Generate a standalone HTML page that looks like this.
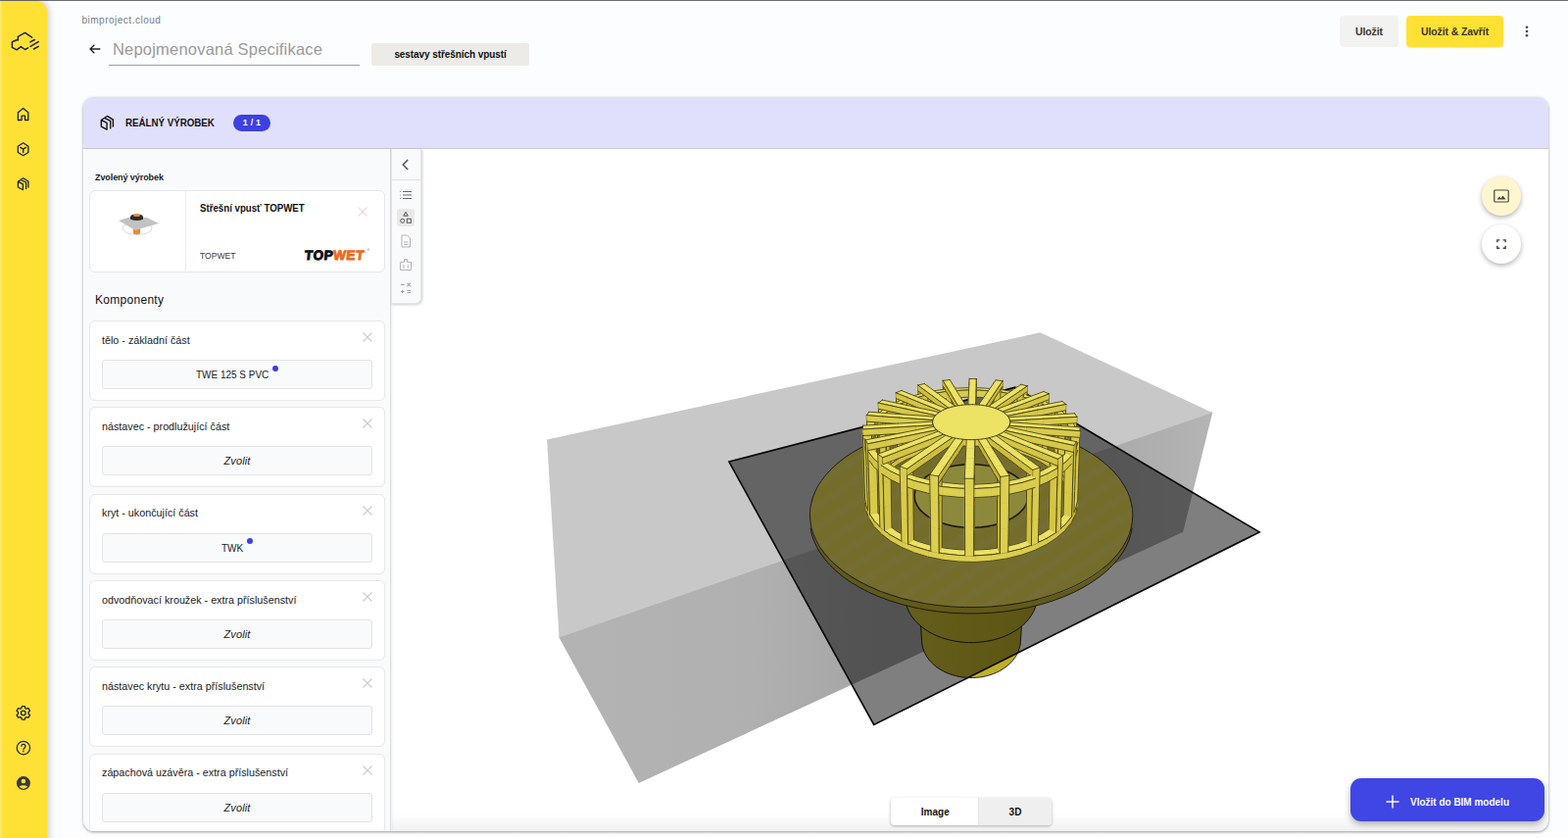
<!DOCTYPE html>
<html lang="cs">
<head>
<meta charset="utf-8">
<title>bimproject.cloud</title>
<style>
*{box-sizing:border-box;margin:0;padding:0}
html,body{width:1600px;height:855px;overflow:hidden}
body{background:#fcfdfe;font-family:"Liberation Sans",sans-serif;color:#1b1b1b;position:relative}
.abs{position:absolute}
.topline{left:0;top:0;width:1600px;height:1px;background:rgba(0,0,0,.57)}
.side{left:0;top:1px;width:48px;height:870px;background:#ffe135;border-radius:0 11px 11px 0;box-shadow:2px 0 7px rgba(0,0,0,.2)}
.side svg{position:absolute;left:15px;width:18px;height:18px;fill:none;stroke:#1d2340;stroke-width:1.5;stroke-linecap:round;stroke-linejoin:round}
.brand{left:83.5px;top:15.3px;font-size:10px;color:#757d88;line-height:12px;white-space:nowrap;letter-spacing:.5px}
.title{left:115px;top:39px;font-size:16.5px;color:#9a9a9a;line-height:22px;white-space:nowrap;letter-spacing:.2px}
.uline{left:111px;top:65.5px;width:256px;height:1px;background:#9c9c9c}
.chip{left:379px;top:44px;width:161px;height:23px;background:#ecebe8;border-radius:3px;font-size:10px;font-weight:bold;text-align:center;line-height:23px;color:#111;white-space:nowrap;letter-spacing:-.08px}
.btn{top:16px;height:32px;border-radius:4px;font-size:10.5px;letter-spacing:-.1px;font-weight:bold;text-align:center;line-height:32px;color:#3a3428;white-space:nowrap}
.card{left:85px;top:99px;width:1495px;height:748.5px;border-radius:11px;background:#fff;box-shadow:0 1px 3px rgba(0,0,0,.4);overflow:hidden}
.chead{left:0;top:0;width:1495px;height:53px;background:#e0e0fd;border-bottom:1px solid #c9c9dc}
.htitle{left:43px;top:19px;font-size:10.7px;font-weight:bold;line-height:14px;color:#111;white-space:nowrap;transform:scaleX(.911);transform-origin:0 50%}
.badge{left:153px;top:17.5px;width:38px;height:17px;border-radius:9px;background:#3d41e0;color:#fff;font-size:9px;font-weight:bold;text-align:center;line-height:17px;letter-spacing:.2px}
.lpanel{left:0;top:53px;width:314px;height:696px;background:#f9fafb;border-right:1px solid #dddde0;box-shadow:1px 0 2px rgba(0,0,0,.08)}
.sm{left:12px;top:22.8px;font-size:9px;font-weight:bold;letter-spacing:-.08px;line-height:12px;color:#1a1a1a;white-space:nowrap}
.pc{background:#fff;border:1px solid #e7e7e9;border-radius:6px;left:6px;width:302px}
.komp{left:12px;top:147px;font-size:12px;line-height:14px;color:#111;white-space:nowrap;letter-spacing:.29px}
.lbl{left:12px;top:11.85px;font-size:10.75px;color:#222;white-space:nowrap;line-height:14px}
.sel{left:12px;top:39px;width:276px;height:30px;border:1px solid #e3e3e4;border-radius:3px;background:#f9fafb;font-size:11px;text-align:center;line-height:28.5px;color:#222;white-space:nowrap}
.sel i{font-style:italic;letter-spacing:.13px}
.sel b{font-weight:normal;display:inline-block;transform:scaleX(.907);transform-origin:0 50%}
.x{left:277.5px;top:11.2px;width:10px;height:10px}
.dot{position:absolute;width:6px;height:6px;border-radius:50%;background:#3b3fe4}
.tool{left:313.5px;top:53px;width:31.500px;height:157.5px;background:#f9fafb;border:1px solid #e4e4e6;border-top:none;border-radius:0 0 6px 0;box-shadow:1px 1px 3px rgba(0,0,0,.2)}
.fab{width:40px;height:40px;border-radius:50%;box-shadow:0 2px 5px rgba(0,0,0,.3)}
.tog{left:909px;top:814px;width:164px;height:28px;border-radius:4px;background:#fff;box-shadow:0 1px 3px rgba(0,0,0,.3);overflow:hidden;font-size:10px;font-weight:bold;color:#111}
.ins{left:1378px;top:794px;width:198px;height:44px;border-radius:11px;background:#4046e3;box-shadow:0 3px 6px rgba(0,0,0,.3);color:#fff;font-size:10.5px;font-weight:bold;line-height:49px;white-space:nowrap}
</style>
</head>
<body>
<div class="abs side"></div>
<svg class="abs" style="left:0;top:0" width="48" height="855" viewBox="0 0 48 855" fill="none" stroke="#1c2140" stroke-width="1.4" stroke-linecap="round" stroke-linejoin="round">
<path d="M32.6 38.2 25.500 33.400 18.400 37.400V41.050M18.400 40.200 12.400 42.800V48.400L17.100 50.800 21.300 47.600 25.500 50.500 28.700 48.900M30.800 42.900l4.500-2.400M31.050 47.400l8.150-4.800M34.500 50l4.700-2.600" stroke-width="1.500"/>
<path d="M18.400 114.700 23.700 110.500 28.800 114.700V122.500H25.500V118.200H22.100V122.500H18.400Z" stroke-width="1.300"/>
<path d="M23.700 145.800 18.300 149.200V155.500L23.700 158.700 28.900 155.500V149.200ZM20.800 150.400 23.700 152.100 26.600 150.400M23.700 152.100V155.700" stroke-width="1.300"/>
<path d="M18.400 185.300 23.400 187.900V193.700L18.400 191.050ZM18.400 185.300 23.700 181.800 28.900 185V191.050M21.200 183.500 26.600 186.050V192.600" stroke-width="1.300"/>
<path d="M21.8 722.6L22.3 720.6L25.3 720.6L25.8 722.6L26.9 723.2L29.0 722.7L30.5 725.2L29.0 726.8L29.0 728.0L30.5 729.6L29.0 732.1L26.9 731.6L25.8 732.2L25.3 734.2L22.3 734.2L21.8 732.2L20.7 731.6L18.6 732.1L17.1 729.6L18.6 728.0L18.6 726.8L17.1 725.2L18.6 722.7L20.7 723.2Z" stroke-width="1.300"/><circle cx="23.800" cy="727.400" r="2.300" stroke-width="1.300"/>
<circle cx="23.900" cy="763.100" r="6.700" stroke-width="1.200"/>
<path d="M21.900 761.300a2 2 0 1 1 3.200 1.600c-.8.500-1.200.9-1.200 1.900" stroke-width="1.200"/><circle cx="23.900" cy="766.700" r=".8" fill="#1c2140" stroke="none"/>
<circle cx="23.900" cy="799.100" r="7" fill="#3b3a36" stroke="none"/><circle cx="23.900" cy="797" r="2.300" fill="#ffe135" stroke="none"/><path d="M19.600 802.600q4.300-2.500 8.600 0-1.700 2.100-4.300 2.100t-4.300-2.100z" fill="#ffe135" stroke="none"/><rect x="0" y="1" width="1.500" height="854" fill="#fff" fill-opacity=".3" stroke="none"/>
</svg>
<div class="abs topline"></div>
<div class="abs brand">bimproject.cloud</div>
<svg class="abs" style="left:89px;top:42px" width="16" height="16" viewBox="0 0 24 24" fill="none" stroke="#222" stroke-width="2"><path d="M20 12H5M11 5.500 4.500 12 11 18.500"/></svg>
<div class="abs title">Nepojmenovaná Specifikace</div>
<div class="abs uline"></div>
<div class="abs chip">sestavy střešních vpustí</div>
<div class="abs btn" style="left:1367px;width:60px;background:#f2f2f0">Uložit</div>
<div class="abs btn" style="left:1435px;width:99px;background:#ffe135;box-shadow:0 1px 1px rgba(0,0,0,.08)">Uložit &amp; Zavřít</div>
<svg class="abs" style="left:1552px;top:24px" width="12" height="16" viewBox="0 0 12 16" fill="#444"><circle cx="6" cy="3.700" r="1.300"/><circle cx="6" cy="8" r="1.300"/><circle cx="6" cy="12.300" r="1.300"/></svg>

<div class="abs card">
  <div class="abs chead">
    <svg class="abs" style="left:0;top:0" width="60" height="52" viewBox="85 99 60 52" fill="none" stroke="#111" stroke-width="1.200" stroke-linejoin="round" stroke-linecap="round"><path transform="translate(109.35 125.3) scale(1.15) translate(-23.65 -187.75)" d="M18.400 185.300 23.400 187.900V193.700L18.400 191.050ZM18.400 185.300 23.700 181.800 28.900 185V191.050M21.200 183.500 26.600 186.050V192.600"/></svg>
    <div class="abs htitle">REÁLNÝ VÝROBEK</div>
    <div class="abs badge">1 / 1</div>
  </div>
  <div class="abs lpanel">
    <div class="abs sm">Zvolený výrobek</div>
    <div class="abs pc" style="top:42px;height:83.6px">
      <div class="abs" style="left:97px;top:0;width:1px;height:81px;background:#ececee"></div>
      <svg class="abs" style="left:28px;top:22px" width="44" height="26" viewBox="0 0 44 26"><ellipse cx="20" cy="16" rx="15" ry="6.500" fill="none" stroke="#d9d9d9" stroke-width="1"/><path d="M16 12h7v9.500q-3.500 1.600-7 0z" fill="#f08a24"/><path d="M1 8 14 4l16 1 12 6-16 4.500-8 2.500z" fill="#c2c2c2"/><path d="M13 4.500q0-3 6.500-3t6.500 3v2.300q-6.500 2.400-13 0z" fill="#2a2a2a"/><ellipse cx="19.500" cy="2.800" rx="3.500" ry="1.300" fill="#f08a24"/></svg>
      <div class="abs" style="left:112px;top:9.8px;font-size:11px;font-weight:bold;line-height:14px;color:#111;white-space:nowrap;transform:scaleX(.88);transform-origin:0 50%">Střešní vpusť TOPWET</div>
      <svg class="abs" style="left:273px;top:16px" width="10" height="10" viewBox="0 0 10 10" stroke="#f5c9c9" stroke-width="1" fill="none"><path d="M.5.500l9 9M9.500.500l-9 9"/></svg>
      <div class="abs" style="left:112px;top:60px;font-size:9.5px;line-height:12px;color:#333a45;white-space:nowrap;transform:scaleX(.9);transform-origin:0 50%">TOPWET</div>
      <div class="abs" style="left:217.6px;top:58px;font-size:13.5px;font-weight:bold;letter-spacing:.55px;line-height:16px;color:#111;white-space:nowrap;-webkit-text-stroke:1px #111;transform:skewX(-5deg);transform-origin:0 100%">TOP<span style="color:#ec6a1e;-webkit-text-stroke:1px #ec6a1e">WET</span><span style="font-size:4px;font-weight:normal;-webkit-text-stroke:0;color:#888;position:relative;top:-9px;left:2px">®</span></div>
    </div>
    <div class="abs komp">Komponenty</div>
    <div class="abs pc" style="top:175px;height:82.2px"><div class="abs lbl">tělo - základní část</div><svg class="abs x" viewBox="0 0 10 10" stroke="#cdcdcd" stroke-width="1.200" fill="none"><path d="M.5.500l9 9M9.500.500l-9 9"/></svg><div class="abs sel"><span style="display:inline-block;position:relative;width:74.4px;height:27px;vertical-align:top;text-align:left;margin-right:9.6px"><b>TWE 125 S PVC</b><span class="dot" style="left:78.0px;top:4.6px"></span></span></div></div>
<div class="abs pc" style="top:263.3px;height:82.2px"><div class="abs lbl">nástavec - prodlužující část</div><svg class="abs x" viewBox="0 0 10 10" stroke="#cdcdcd" stroke-width="1.200" fill="none"><path d="M.5.500l9 9M9.500.500l-9 9"/></svg><div class="abs sel"><i>Zvolit</i></div></div>
<div class="abs pc" style="top:351.6px;height:82.2px"><div class="abs lbl">kryt - ukončující část</div><svg class="abs x" viewBox="0 0 10 10" stroke="#cdcdcd" stroke-width="1.200" fill="none"><path d="M.5.500l9 9M9.500.500l-9 9"/></svg><div class="abs sel"><span style="display:inline-block;position:relative;width:22.2px;height:27px;vertical-align:top;text-align:left;margin-right:9.6px"><b>TWK</b><span class="dot" style="left:25.8px;top:4.6px"></span></span></div></div>
<div class="abs pc" style="top:439.9px;height:82.2px"><div class="abs lbl">odvodňovací kroužek - extra příslušenství</div><svg class="abs x" viewBox="0 0 10 10" stroke="#cdcdcd" stroke-width="1.200" fill="none"><path d="M.5.500l9 9M9.500.500l-9 9"/></svg><div class="abs sel"><i>Zvolit</i></div></div>
<div class="abs pc" style="top:528.2px;height:82.2px"><div class="abs lbl">nástavec krytu - extra příslušenství</div><svg class="abs x" viewBox="0 0 10 10" stroke="#cdcdcd" stroke-width="1.200" fill="none"><path d="M.5.500l9 9M9.500.500l-9 9"/></svg><div class="abs sel"><i>Zvolit</i></div></div>
<div class="abs pc" style="top:616.5px;height:82.2px"><div class="abs lbl">zápachová uzávěra - extra příslušenství</div><svg class="abs x" viewBox="0 0 10 10" stroke="#cdcdcd" stroke-width="1.200" fill="none"><path d="M.5.500l9 9M9.500.500l-9 9"/></svg><div class="abs sel"><i>Zvolit</i></div></div>
  </div>
  <div class="abs" style="left:315px;top:730px;width:1180px;height:19px;background:linear-gradient(to bottom,rgba(0,0,0,0),rgba(0,0,0,.055))"></div>
  <div class="abs tool">
    <div class="abs" style="left:0;top:31.2px;width:30px;height:1px;background:#e2e2e4"></div>
    <svg class="abs" style="left:8.2px;top:10.2px" width="12" height="12" viewBox="0 0 12 12" fill="none" stroke="#555" stroke-width="1.500"><path d="M8.200 1 3.200 6l5 5"/></svg>
    <svg class="abs" style="left:7.2px;top:40.2px" width="14" height="14" viewBox="0 0 14 14" stroke="#666" stroke-width="1.200" fill="none"><path d="M4 3.500h9M4 7h9M4 10.500h9"/><path d="M1 3.500h1M1 7h1M1 10.500h1" stroke="#999"/></svg>
    <div class="abs" style="left:5.2px;top:61.2px;width:18px;height:18px;border-radius:3px;background:#e9e9e7"></div>
    <svg class="abs" style="left:7.2px;top:63.2px" width="14" height="14" viewBox="0 0 14 14" stroke="#555" stroke-width="1" fill="none"><path d="M7 1.200 9.300 5.200H4.700z"/><circle cx="3.700" cy="10.300" r="2"/><rect x="8.300" y="8.300" width="4" height="4"/></svg>
    <svg class="abs" style="left:7.2px;top:87.2px" width="14" height="14" viewBox="0 0 14 14" stroke="#b4b4b4" stroke-width="1" fill="none"><path d="M3 1h5.500L11.500 4v9h-8.500zM5 8h4.500M5 10.500h4.500"/></svg>
    <svg class="abs" style="left:7.2px;top:111.2px" width="14" height="14" viewBox="0 0 14 14" stroke="#b4b4b4" stroke-width="1" fill="none"><path d="M1.500 4.500h4V1.500h3v3h4V12.500h-11zM4 8h2M4 10h2M8.500 8h2M8.500 10h2"/></svg>
    <svg class="abs" style="left:7.2px;top:135.2px" width="14" height="14" viewBox="0 0 14 14" stroke="#9c9c9c" stroke-width="1.100" fill="none"><path d="M2 3.500h3.500M8.500 1.800l3.400 3.400M11.900 1.800 8.500 5.200M2 10.500h3.500M3.750 8.700v3.600M8.500 9.500h3.500M8.500 11.500h3.500"/></svg>
  </div>
</div>
<svg class="abs" style="left:0;top:0" width="1600" height="855" viewBox="0 0 1600 855" stroke-linejoin="round" stroke-linecap="round">
<defs><pattern id="st" width="18" height="18" patternUnits="userSpaceOnUse" patternTransform="rotate(-33)"><rect x="0" y="0" width="18" height="8" fill="rgba(255,255,235,.07)"/><rect x="0" y="1.5" width="18" height="5" fill="rgba(255,255,235,.07)"/></pattern><linearGradient id="gp" gradientUnits="userSpaceOnUse" x1="920" y1="0" x2="1060" y2="0"><stop offset="0" stop-color="#cabc3a"/><stop offset=".35" stop-color="#c4b530"/><stop offset="1" stop-color="#b8a826"/></linearGradient><linearGradient id="gf" x1="0" y1="0" x2="1" y2="0"><stop offset="0" stop-color="#b3b3b3"/><stop offset=".3" stop-color="#b0b0b0"/><stop offset=".5" stop-color="#a4a4a4"/><stop offset=".8" stop-color="#a8a8a8"/><stop offset="1" stop-color="#b4b4b4"/></linearGradient></defs>
<polygon points="570.9,649.3 1236.6,419.9 1237.2,420.9 1207.2,542.8 651.8,798.9 570.5,650.5" fill="url(#gf)"/>
<polygon points="558.1,448.6 1061.5,339.3 1237.2,420.9 570.5,650.5" fill="#c8c8c8"/>
<g transform="translate(1.2 .3)">
<polygon points="939.4,654.0 939.6,656.5 940.1,659.0 940.7,661.5 941.6,664.0 942.7,666.4 944.0,668.8 945.5,671.1 947.2,673.4 949.2,675.5 951.3,677.6 953.6,679.6 956.1,681.4 958.8,683.1 961.6,684.7 964.6,686.1 967.7,687.3 970.9,688.4 974.2,689.3 977.6,690.1 981.0,690.7 984.5,691.0 988.0,691.2 991.6,691.2 995.1,691.0 998.6,690.7 1002.1,690.1 1005.4,689.4 1008.7,688.4 1012.0,687.4 1015.0,686.1 1018.0,684.7 1020.8,683.1 1023.5,681.4 1026.0,679.6 1028.3,677.6 1030.5,675.6 1032.4,673.4 1034.1,671.2 1035.6,668.9 1036.9,666.5 1038.0,664.0 1038.9,661.6 1039.5,659.1 1040.0,656.5 1040.2,654.0 1043.4,606.1 1043.2,608.5 1042.7,611.0 1042.1,613.4 1041.2,615.8 1040.0,618.2 1038.7,620.5 1037.0,622.8 1035.2,625.0 1033.2,627.1 1030.9,629.1 1028.4,631.0 1025.8,632.8 1022.9,634.4 1019.9,636.0 1016.8,637.3 1013.5,638.6 1010.1,639.6 1006.5,640.5 1002.9,641.3 999.2,641.8 995.5,642.2 991.7,642.4 988.0,642.4 984.2,642.2 980.5,641.8 976.8,641.2 973.2,640.5 969.6,639.6 966.2,638.5 962.9,637.3 959.8,635.9 956.7,634.4 953.9,632.7 951.3,630.9 948.8,629.0 946.5,627.0 944.5,624.9 942.6,622.7 941.0,620.5 939.7,618.1 938.5,615.8 937.6,613.4 936.9,610.9 936.5,608.5 936.3,606.0" fill="url(#gp)"/><path d="M936.3,606.0L939.4,654.0L939.6,656.5L940.1,659.0L940.7,661.5L941.6,664.0L942.7,666.4L944.0,668.8L945.5,671.1L947.2,673.4L949.2,675.5L951.3,677.6L953.6,679.6L956.1,681.4L958.8,683.1L961.6,684.7L964.6,686.1L967.7,687.3L970.9,688.4L974.2,689.3L977.6,690.1L981.0,690.7L984.5,691.0L988.0,691.2L991.6,691.2L995.1,691.0L998.6,690.7L1002.1,690.1L1005.4,689.4L1008.7,688.4L1012.0,687.4L1015.0,686.1L1018.0,684.7L1020.8,683.1L1023.5,681.4L1026.0,679.6L1028.3,677.6L1030.5,675.6L1032.4,673.4L1034.1,671.2L1035.6,668.9L1036.9,666.5L1038.0,664.0L1038.9,661.6L1039.5,659.1L1040.0,656.5L1040.2,654.0L1043.4,606.1" fill="none" stroke="#111" stroke-width="0.9"/>
<polygon points="922.7,611.6 923.2,614.7 923.9,617.8 925.0,620.9 926.4,623.9 928.0,626.9 930.0,629.8 932.3,632.6 934.8,635.3 937.6,637.9 940.7,640.4 944.1,642.7 947.6,644.9 951.4,646.9 955.4,648.7 959.6,650.3 964.0,651.7 968.5,652.9 973.1,653.8 977.8,654.5 982.6,655.0 987.4,655.3 992.3,655.3 997.1,655.0 1001.9,654.5 1006.6,653.8 1011.2,652.9 1015.7,651.7 1020.1,650.3 1024.3,648.7 1028.3,646.9 1032.1,644.9 1035.6,642.8 1039.0,640.4 1042.1,638.0 1044.9,635.4 1047.4,632.7 1049.7,629.8 1051.6,626.9 1053.3,624.0 1054.7,620.9 1055.7,617.9 1056.5,614.8 1057.0,611.7 1065.1,515.7 1064.6,518.5 1063.8,521.4 1062.7,524.2 1061.2,526.9 1059.4,529.6 1057.2,532.3 1054.7,534.9 1051.9,537.4 1048.8,539.8 1045.3,542.0 1041.6,544.2 1037.6,546.2 1033.3,548.0 1028.8,549.7 1024.1,551.2 1019.2,552.5 1014.1,553.5 1008.9,554.4 1003.5,555.1 998.1,555.5 992.7,555.8 987.2,555.8 981.8,555.5 976.3,555.1 971.0,554.4 965.8,553.5 960.7,552.4 955.8,551.1 951.1,549.7 946.6,548.0 942.3,546.1 938.3,544.1 934.5,542.0 931.1,539.7 927.9,537.3 925.1,534.8 922.6,532.3 920.5,529.6 918.6,526.9 917.2,524.1 916.0,521.3 915.2,518.5 914.7,515.7" fill="url(#gp)"/><path d="M914.7,515.7L922.7,611.6L923.2,614.7L923.9,617.8L925.0,620.9L926.4,623.9L928.0,626.9L930.0,629.8L932.3,632.6L934.8,635.3L937.6,637.9L940.7,640.4L944.1,642.7L947.6,644.9L951.4,646.9L955.4,648.7L959.6,650.3L964.0,651.7L968.5,652.9L973.1,653.8L977.8,654.5L982.6,655.0L987.4,655.3L992.3,655.3L997.1,655.0L1001.9,654.5L1006.6,653.8L1011.2,652.9L1015.7,651.7L1020.1,650.3L1024.3,648.7L1028.3,646.9L1032.1,644.9L1035.6,642.8L1039.0,640.4L1042.1,638.0L1044.9,635.4L1047.4,632.7L1049.7,629.8L1051.6,626.9L1053.3,624.0L1054.7,620.9L1055.7,617.9L1056.5,614.8L1057.0,611.7L1065.1,515.7" fill="none" stroke="#111" stroke-width="0.9"/>
<polygon points="826.9,543.8 828.9,550.3 831.8,556.9 835.5,563.4 840.1,569.8 845.5,576.1 851.8,582.2 859.0,588.1 867.0,593.7 875.8,599.0 885.5,604.0 895.8,608.5 906.9,612.6 918.6,616.2 930.8,619.3 943.4,621.8 956.5,623.7 969.8,625.0 983.2,625.6 996.7,625.6 1010.2,625.0 1023.5,623.7 1036.5,621.8 1049.2,619.3 1061.4,616.3 1073.0,612.7 1084.1,608.6 1094.5,604.1 1104.1,599.1 1112.9,593.8 1120.9,588.2 1128.1,582.3 1134.4,576.2 1139.8,569.9 1144.4,563.5 1148.1,557.0 1150.9,550.5 1152.9,543.9 1153.9,538.7 1151.9,545.2 1149.1,551.7 1145.4,558.2 1140.8,564.6 1135.3,570.8 1129.0,576.9 1121.8,582.8 1113.7,588.4 1104.9,593.7 1095.2,598.6 1084.7,603.1 1073.6,607.2 1061.9,610.8 1049.6,613.8 1036.8,616.3 1023.7,618.1 1010.3,619.4 996.8,620.0 983.2,620.0 969.6,619.4 956.2,618.1 943.1,616.2 930.4,613.7 918.1,610.7 906.3,607.1 895.2,603.0 884.8,598.5 875.1,593.6 866.2,588.3 858.1,582.7 850.9,576.8 844.6,570.7 839.1,564.5 834.5,558.1 830.8,551.6 828.0,545.1 826.0,538.6" fill="#c2b432"/><path d="M826.0,538.6L826.9,543.8L828.9,550.3L831.8,556.9L835.5,563.4L840.1,569.8L845.5,576.1L851.8,582.2L859.0,588.1L867.0,593.7L875.8,599.0L885.5,604.0L895.8,608.5L906.9,612.6L918.6,616.2L930.8,619.3L943.4,621.8L956.5,623.7L969.8,625.0L983.2,625.6L996.7,625.6L1010.2,625.0L1023.5,623.7L1036.5,621.8L1049.2,619.3L1061.4,616.3L1073.0,612.7L1084.1,608.6L1094.5,604.1L1104.1,599.1L1112.9,593.8L1120.9,588.2L1128.1,582.3L1134.4,576.2L1139.8,569.9L1144.4,563.5L1148.1,557.0L1150.9,550.5L1152.9,543.9L1153.9,538.7" fill="none" stroke="#111" stroke-width="0.8"/>
<polygon points="1111.9,462.0 1105.5,458.2 1098.7,454.6 1091.6,451.2 1084.3,448.1 1076.8,445.3 1069.1,442.7 1061.2,440.4 1053.2,438.3 1045.0,436.5 1036.7,435.0 1028.3,433.7 1019.9,432.7 1011.3,431.9 1002.8,431.4 994.2,431.1 985.6,431.1 977.0,431.4 968.4,431.9 959.9,432.6 951.4,433.7 943.1,434.9 934.8,436.5 926.6,438.3 918.6,440.3 910.7,442.6 903.0,445.2 895.4,448.0 888.1,451.1 881.1,454.5 874.3,458.1 867.9,461.9 861.7,466.0 855.9,470.4 850.5,475.0 845.6,479.8 841.0,484.9 837.0,490.2 833.5,495.6 830.6,501.3 828.2,507.2 826.6,513.2 825.5,519.3 825.2,525.6 825.7,532.0 826.9,538.4 828.9,544.9 831.7,551.3 835.4,557.8 840.0,564.1 845.4,570.3 851.8,576.4 858.9,582.2 867.0,587.8 875.8,593.0 885.4,597.9 895.8,602.4 906.9,606.4 918.5,610.0 930.8,613.0 943.4,615.5 956.5,617.4 969.8,618.6 983.2,619.3 996.7,619.3 1010.2,618.6 1023.5,617.4 1036.5,615.5 1049.2,613.1 1061.4,610.1 1073.1,606.5 1084.1,602.5 1094.5,598.0 1104.1,593.1 1113.0,587.9 1121.0,582.3 1128.2,576.5 1134.5,570.4 1139.9,564.2 1144.5,557.9 1148.1,551.5 1151.0,545.0 1153.0,538.5 1154.2,532.1 1154.6,525.7 1154.3,519.5 1153.3,513.3 1151.6,507.3 1149.3,501.4 1146.3,495.8 1142.8,490.3 1138.8,485.0 1134.3,479.9 1129.3,475.1 1123.9,470.5 1118.1,466.1" fill="#e8d854" stroke="#111" stroke-width=".8"/>
<polygon points="1111.9,462.0 1105.5,458.2 1098.7,454.6 1091.6,451.2 1084.3,448.1 1076.8,445.3 1069.1,442.7 1061.2,440.4 1053.2,438.3 1045.0,436.5 1036.7,435.0 1028.3,433.7 1019.9,432.7 1011.3,431.9 1002.8,431.4 994.2,431.1 985.6,431.1 977.0,431.4 968.4,431.9 959.9,432.6 951.4,433.7 943.1,434.9 934.8,436.5 926.6,438.3 918.6,440.3 910.7,442.6 903.0,445.2 895.4,448.0 888.1,451.1 881.1,454.5 874.3,458.1 867.9,461.9 861.7,466.0 855.9,470.4 850.5,475.0 845.6,479.8 841.0,484.9 837.0,490.2 833.5,495.6 830.6,501.3 828.2,507.2 826.6,513.2 825.5,519.3 825.2,525.6 825.7,532.0 826.9,538.4 828.9,544.9 831.7,551.3 835.4,557.8 840.0,564.1 845.4,570.3 851.8,576.4 858.9,582.2 867.0,587.8 875.8,593.0 885.4,597.9 895.8,602.4 906.9,606.4 918.5,610.0 930.8,613.0 943.4,615.5 956.5,617.4 969.8,618.6 983.2,619.3 996.7,619.3 1010.2,618.6 1023.5,617.4 1036.5,615.5 1049.2,613.1 1061.4,610.1 1073.1,606.5 1084.1,602.5 1094.5,598.0 1104.1,593.1 1113.0,587.9 1121.0,582.3 1128.2,576.5 1134.5,570.4 1139.9,564.2 1144.5,557.9 1148.1,551.5 1151.0,545.0 1153.0,538.5 1154.2,532.1 1154.6,525.7 1154.3,519.5 1153.3,513.3 1151.6,507.3 1149.3,501.4 1146.3,495.8 1142.8,490.3 1138.8,485.0 1134.3,479.9 1129.3,475.1 1123.9,470.5 1118.1,466.1" fill="url(#st)"/>
</g>
<polygon points="743.9,471.1 1035.9,395.2 1285.2,542.9 891.7,739.4" fill="rgba(0,0,0,.5)" stroke="#050505" stroke-width="1.6" stroke-linejoin="miter"/>
<g transform="translate(1.2 .3)">
<polygon points="1037.0,486.9 1033.6,484.5 1029.9,482.4 1025.8,480.4 1021.5,478.7 1016.9,477.2 1012.1,475.9 1007.2,474.9 1002.1,474.2 996.9,473.7 991.7,473.5 986.4,473.5 981.2,473.8 976.0,474.4 971.0,475.2 966.1,476.3 961.3,477.6 956.8,479.2 952.6,481.0 948.6,483.0 945.0,485.3 941.8,487.7 939.0,490.3 936.6,493.1 934.6,496.0 933.2,499.0 932.3,502.1 932.0,505.3 932.2,508.4 932.9,511.6 934.3,514.8 936.2,517.9 938.7,520.9 941.7,523.7 945.3,526.4 949.4,528.8 953.9,531.1 958.9,533.0 964.2,534.7 969.8,536.1 975.7,537.1 981.7,537.7 987.9,538.0 994.0,538.0 1000.2,537.6 1006.1,536.8 1011.9,535.7 1017.5,534.2 1022.7,532.4 1027.5,530.4 1031.9,528.1 1035.8,525.5 1039.2,522.8 1042.1,519.9 1044.4,516.9 1046.1,513.8 1047.2,510.6 1047.8,507.4 1047.8,504.2 1047.3,501.1 1046.2,498.0 1044.6,495.0 1042.5,492.2 1040.0,489.5" fill="#8c893c" stroke="#8c893c" stroke-width=".5"/>
<path d="M1037.0,486.9L1033.6,484.5M1033.6,484.5L1029.9,482.4M1029.9,482.4L1025.8,480.4M1025.8,480.4L1021.5,478.7M1021.5,478.7L1016.9,477.2M1016.9,477.2L1012.1,475.9M1012.1,475.9L1007.2,474.9M1007.2,474.9L1002.1,474.2M1002.1,474.2L996.9,473.7M996.9,473.7L991.7,473.5M991.7,473.5L986.4,473.5M986.4,473.5L981.2,473.8M981.2,473.8L976.0,474.4M976.0,474.4L971.0,475.2M971.0,475.2L966.1,476.3M966.1,476.3L961.3,477.6M961.3,477.6L956.8,479.2M956.8,479.2L952.6,481.0M952.6,481.0L948.6,483.0M948.6,483.0L945.0,485.3M945.0,485.3L941.8,487.7M941.8,487.7L939.0,490.3M939.0,490.3L936.6,493.1M936.6,493.1L934.6,496.0M934.6,496.0L933.2,499.0M933.2,499.0L932.3,502.1M932.3,502.1L932.0,505.3M932.0,505.3L932.2,508.4M932.2,508.4L932.9,511.6M932.9,511.6L934.3,514.8M934.3,514.8L936.2,517.9M936.2,517.9L938.7,520.9M938.7,520.9L941.7,523.7M941.7,523.7L945.3,526.4M945.3,526.4L949.4,528.8M949.4,528.8L953.9,531.1M953.9,531.1L958.9,533.0M958.9,533.0L964.2,534.7M964.2,534.7L969.8,536.1M969.8,536.1L975.7,537.1M975.7,537.1L981.7,537.7M981.7,537.7L987.9,538.0M987.9,538.0L994.0,538.0M994.0,538.0L1000.2,537.6M1000.2,537.6L1006.1,536.8M1006.1,536.8L1011.9,535.7M1011.9,535.7L1017.5,534.2M1017.5,534.2L1022.7,532.4M1022.7,532.4L1027.5,530.4M1027.5,530.4L1031.9,528.1M1031.9,528.1L1035.8,525.5M1035.8,525.5L1039.2,522.8M1039.2,522.8L1042.1,519.9M1042.1,519.9L1044.4,516.9M1044.4,516.9L1046.1,513.8M1046.1,513.8L1047.2,510.6M1047.2,510.6L1047.8,507.4M1047.8,507.4L1047.8,504.2M1047.8,504.2L1047.3,501.1M1047.3,501.1L1046.2,498.0M1046.2,498.0L1044.6,495.0M1044.6,495.0L1042.5,492.2M1042.5,492.2L1040.0,489.5M1040.0,489.5L1037.0,486.9" stroke="#1c1a08" stroke-width="1.6" fill="none"/>
<polygon points="999.1,446.6 986.8,446.4 987.0,449.6 998.5,449.7" fill="#ece264" stroke="#ece264" stroke-width=".5"/>
<path d="M999.1,446.6L986.8,446.4M987.0,449.6L998.5,449.7" stroke="#1c1a08" stroke-width="0.7" fill="none"/>
<polygon points="986.8,446.4 974.6,446.9 975.6,450.1 987.0,449.6" fill="#ece264" stroke="#ece264" stroke-width=".5"/>
<path d="M986.8,446.4L974.6,446.9M975.6,450.1L987.0,449.6" stroke="#1c1a08" stroke-width="0.7" fill="none"/>
<polygon points="1011.2,447.5 999.1,446.6 998.5,449.7 1009.9,450.6" fill="#ece264" stroke="#ece264" stroke-width=".5"/>
<path d="M1011.2,447.5L999.1,446.6M998.5,449.7L1009.9,450.6" stroke="#1c1a08" stroke-width="0.7" fill="none"/>
<polygon points="987.0,454.7 998.4,454.9 998.5,449.7 987.0,449.6" fill="#d9cc4b" stroke="#d9cc4b" stroke-width=".5"/>
<path d="M987.0,454.7L998.4,454.9M998.5,449.7L987.0,449.6" stroke="#1c1a08" stroke-width="0.7" fill="none"/>
<polygon points="974.6,446.9 962.6,448.3 964.3,451.4 975.6,450.1" fill="#ece264" stroke="#ece264" stroke-width=".5"/>
<path d="M974.6,446.9L962.6,448.3M964.3,451.4L975.6,450.1" stroke="#1c1a08" stroke-width="0.7" fill="none"/>
<polygon points="975.7,455.3 987.0,454.7 987.0,449.6 975.6,450.1" fill="#d9cb4b" stroke="#d9cb4b" stroke-width=".5"/>
<path d="M975.7,455.3L987.0,454.7M987.0,449.6L975.6,450.1" stroke="#1c1a08" stroke-width="0.7" fill="none"/>
<polygon points="998.4,454.9 1009.8,455.8 1009.9,450.6 998.5,449.7" fill="#d9cb4b" stroke="#d9cb4b" stroke-width=".5"/>
<path d="M998.4,454.9L1009.8,455.8M1009.9,450.6L998.5,449.7" stroke="#1c1a08" stroke-width="0.7" fill="none"/>
<polygon points="1023.1,449.2 1011.2,447.5 1009.9,450.6 1021.0,452.3" fill="#ece264" stroke="#ece264" stroke-width=".5"/>
<path d="M1023.1,449.2L1011.2,447.5M1009.9,450.6L1021.0,452.3" stroke="#1c1a08" stroke-width="0.7" fill="none"/>
<polygon points="964.5,456.6 975.7,455.3 975.6,450.1 964.3,451.4" fill="#d9cb4b" stroke="#d9cb4b" stroke-width=".5"/>
<path d="M964.5,456.6L975.7,455.3M975.6,450.1L964.3,451.4" stroke="#1c1a08" stroke-width="0.7" fill="none"/>
<polygon points="1009.8,455.8 1020.8,457.5 1021.0,452.3 1009.9,450.6" fill="#d8ca4a" stroke="#d8ca4a" stroke-width=".5"/>
<path d="M1009.8,455.8L1020.8,457.5M1021.0,452.3L1009.9,450.6" stroke="#1c1a08" stroke-width="0.7" fill="none"/>
<polygon points="962.6,448.3 950.9,450.4 953.3,453.3 964.3,451.4" fill="#ece264" stroke="#ece264" stroke-width=".5"/>
<path d="M962.6,448.3L950.9,450.4M953.3,453.3L964.3,451.4" stroke="#1c1a08" stroke-width="0.7" fill="none"/>
<polygon points="953.5,458.5 964.5,456.6 964.3,451.4 953.3,453.3" fill="#d8ca49" stroke="#d8ca49" stroke-width=".5"/>
<path d="M953.5,458.5L964.5,456.6M964.3,451.4L953.3,453.3" stroke="#1c1a08" stroke-width="0.7" fill="none"/>
<polygon points="1034.6,451.7 1023.1,449.2 1021.0,452.3 1031.8,454.6" fill="#ece264" stroke="#ece264" stroke-width=".5"/>
<path d="M1034.6,451.7L1023.1,449.2M1021.0,452.3L1031.8,454.6" stroke="#1c1a08" stroke-width="0.7" fill="none"/>
<polygon points="994.6,449.8 994.7,446.4 994.8,427.3 994.7,430.5" fill="#c3b02d" stroke="#c3b02d" stroke-width=".5"/>
<path d="M994.7,446.4L994.8,427.3M994.7,430.5L994.6,449.8" stroke="#1c1a08" stroke-width="0.7" fill="none"/>
<polygon points="1020.8,457.5 1031.6,459.8 1031.8,454.6 1021.0,452.3" fill="#d7c949" stroke="#d7c949" stroke-width=".5"/>
<path d="M1020.8,457.5L1031.6,459.8M1031.8,454.6L1021.0,452.3" stroke="#1c1a08" stroke-width="0.7" fill="none"/>
<polygon points="950.9,450.4 939.6,453.2 942.8,456.0 953.3,453.3" fill="#ece264" stroke="#ece264" stroke-width=".5"/>
<path d="M950.9,450.4L939.6,453.2M942.8,456.0L953.3,453.3" stroke="#1c1a08" stroke-width="0.7" fill="none"/>
<polygon points="961.7,448.4 963.3,451.7 963.1,432.4 961.5,429.2" fill="#c9b735" stroke="#c9b735" stroke-width=".5"/>
<path d="M963.3,451.7L963.1,432.4M961.5,429.2L961.7,448.4" stroke="#1c1a08" stroke-width="0.7" fill="none"/>
<polygon points="988.0,449.7 994.6,449.8 994.7,430.5 987.9,430.5" fill="#d6c746" stroke="#d6c746" stroke-width=".5"/>
<path d="M994.6,449.8L994.7,430.5M987.9,430.5L988.0,449.7" stroke="#1c1a08" stroke-width="0.7" fill="none"/>
<polygon points="943.0,461.2 953.5,458.5 953.3,453.3 942.8,456.0" fill="#d7c848" stroke="#d7c848" stroke-width=".5"/>
<path d="M943.0,461.2L953.5,458.5M953.3,453.3L942.8,456.0" stroke="#1c1a08" stroke-width="0.7" fill="none"/>
<polygon points="1019.2,452.1 1021.1,448.9 1021.3,429.6 1019.4,432.8" fill="#c9b836" stroke="#c9b836" stroke-width=".5"/>
<path d="M1021.1,448.9L1021.3,429.6M1019.4,432.8L1019.2,452.1" stroke="#1c1a08" stroke-width="0.7" fill="none"/>
<polygon points="1045.7,454.9 1034.6,451.7 1031.8,454.6 1042.1,457.6" fill="#ece264" stroke="#ece264" stroke-width=".5"/>
<path d="M1045.7,454.9L1034.6,451.7M1031.8,454.6L1042.1,457.6" stroke="#1c1a08" stroke-width="0.7" fill="none"/>
<polygon points="1031.6,459.8 1041.9,462.9 1042.1,457.6 1031.8,454.6" fill="#d6c747" stroke="#d6c747" stroke-width=".5"/>
<path d="M1031.6,459.8L1041.9,462.9M1042.1,457.6L1031.8,454.6" stroke="#1c1a08" stroke-width="0.7" fill="none"/>
<polygon points="963.3,451.7 969.8,450.8 969.8,431.5 963.1,432.4" fill="#d5c645" stroke="#d5c645" stroke-width=".5"/>
<path d="M969.8,450.8L969.8,431.5M963.1,432.4L963.3,451.7" stroke="#1c1a08" stroke-width="0.7" fill="none"/>
<polygon points="1012.8,451.2 1019.2,452.1 1019.4,432.8 1012.8,431.9" fill="#d5c645" stroke="#d5c645" stroke-width=".5"/>
<path d="M1019.2,452.1L1019.4,432.8M1012.8,431.9L1012.8,451.2" stroke="#1c1a08" stroke-width="0.7" fill="none"/>
<polygon points="939.6,453.2 928.8,456.7 932.7,459.4 942.8,456.0" fill="#ece264" stroke="#ece264" stroke-width=".5"/>
<path d="M939.6,453.2L928.8,456.7M932.7,459.4L942.8,456.0" stroke="#1c1a08" stroke-width="0.7" fill="none"/>
<polygon points="933.0,464.6 943.0,461.2 942.8,456.0 932.7,459.4" fill="#d5c646" stroke="#d5c646" stroke-width=".5"/>
<path d="M933.0,464.6L943.0,461.2M942.8,456.0L932.7,459.4" stroke="#1c1a08" stroke-width="0.7" fill="none"/>
<polygon points="1056.1,458.9 1045.7,454.9 1042.1,457.6 1051.9,461.3" fill="#ece264" stroke="#ece264" stroke-width=".5"/>
<path d="M1056.1,458.9L1045.7,454.9M1042.1,457.6L1051.9,461.3" stroke="#1c1a08" stroke-width="0.7" fill="none"/>
<polygon points="1041.9,462.9 1051.5,466.6 1051.9,461.3 1042.1,457.6" fill="#d4c545" stroke="#d4c545" stroke-width=".5"/>
<path d="M1041.9,462.9L1051.5,466.6M1051.9,461.3L1042.1,457.6" stroke="#1c1a08" stroke-width="0.7" fill="none"/>
<polygon points="936.7,454.0 940.0,457.0 939.8,437.4 936.3,434.5" fill="#cfbf3d" stroke="#cfbf3d" stroke-width=".5"/>
<path d="M940.0,457.0L939.8,437.4M936.3,434.5L936.7,454.0" stroke="#1c1a08" stroke-width="0.7" fill="none"/>
<polygon points="994.7,430.5 994.8,427.3 994.9,407.2 994.8,410.4" fill="#c3b02d" stroke="#c3b02d" stroke-width=".5"/>
<path d="M994.8,427.3L994.9,407.2M994.8,410.4L994.7,430.5" stroke="#1c1a08" stroke-width="0.7" fill="none"/>
<polygon points="928.8,456.7 918.8,461.0 923.4,463.4 932.7,459.4" fill="#ece264" stroke="#ece264" stroke-width=".5"/>
<path d="M928.8,456.7L918.8,461.0M923.4,463.4L932.7,459.4" stroke="#1c1a08" stroke-width="0.7" fill="none"/>
<polygon points="1042.2,457.9 1045.8,454.9 1046.2,435.4 1042.6,438.3" fill="#cfbf3e" stroke="#cfbf3e" stroke-width=".5"/>
<path d="M1045.8,454.9L1046.2,435.4M1042.6,438.3L1042.2,457.9" stroke="#1c1a08" stroke-width="0.7" fill="none"/>
<polygon points="940.0,457.0 946.0,455.3 945.9,435.7 939.8,437.4" fill="#d2c342" stroke="#d2c342" stroke-width=".5"/>
<path d="M946.0,455.3L945.9,435.7M939.8,437.4L940.0,457.0" stroke="#1c1a08" stroke-width="0.7" fill="none"/>
<polygon points="923.7,468.7 933.0,464.6 932.7,459.4 923.4,463.4" fill="#d3c443" stroke="#d3c443" stroke-width=".5"/>
<path d="M923.7,468.7L933.0,464.6M932.7,459.4L923.4,463.4" stroke="#1c1a08" stroke-width="0.7" fill="none"/>
<polygon points="1036.3,456.0 1042.2,457.9 1042.6,438.3 1036.5,436.5" fill="#d2c342" stroke="#d2c342" stroke-width=".5"/>
<path d="M1042.2,457.9L1042.6,438.3M1036.5,436.5L1036.3,456.0" stroke="#1c1a08" stroke-width="0.7" fill="none"/>
<polygon points="961.5,429.2 963.1,432.4 963.0,412.1 961.3,409.0" fill="#c9b735" stroke="#c9b735" stroke-width=".5"/>
<path d="M963.1,432.4L963.0,412.1M961.3,409.0L961.5,429.2" stroke="#1c1a08" stroke-width="0.7" fill="none"/>
<polygon points="987.9,430.5 994.7,430.5 994.8,410.4 987.9,410.3" fill="#d6c746" stroke="#d6c746" stroke-width=".5"/>
<path d="M994.7,430.5L994.8,410.4M987.9,410.3L987.9,430.5" stroke="#1c1a08" stroke-width="0.7" fill="none"/>
<polygon points="1019.4,432.8 1021.3,429.6 1021.6,409.5 1019.6,412.5" fill="#c9b836" stroke="#c9b836" stroke-width=".5"/>
<path d="M1021.3,429.6L1021.6,409.5M1019.6,412.5L1019.4,432.8" stroke="#1c1a08" stroke-width="0.7" fill="none"/>
<polygon points="1065.8,463.5 1056.1,458.9 1051.9,461.3 1060.8,465.7" fill="#ece264" stroke="#ece264" stroke-width=".5"/>
<path d="M1065.8,463.5L1056.1,458.9M1051.9,461.3L1060.8,465.7" stroke="#1c1a08" stroke-width="0.7" fill="none"/>
<polygon points="1051.5,466.6 1060.4,471.0 1060.8,465.7 1051.9,461.3" fill="#d2c342" stroke="#d2c342" stroke-width=".5"/>
<path d="M1051.5,466.6L1060.4,471.0M1060.8,465.7L1051.9,461.3" stroke="#1c1a08" stroke-width="0.7" fill="none"/>
<polygon points="963.1,432.4 969.8,431.5 969.8,411.3 963.0,412.1" fill="#d5c645" stroke="#d5c645" stroke-width=".5"/>
<path d="M969.8,431.5L969.8,411.3M963.0,412.1L963.1,432.4" stroke="#1c1a08" stroke-width="0.7" fill="none"/>
<polygon points="1012.8,431.9 1019.4,432.8 1019.6,412.5 1012.9,411.6" fill="#d5c645" stroke="#d5c645" stroke-width=".5"/>
<path d="M1019.4,432.8L1019.6,412.5M1012.9,411.6L1012.8,431.9" stroke="#1c1a08" stroke-width="0.7" fill="none"/>
<polygon points="918.8,461.0 909.6,466.0 914.9,468.1 923.4,463.4" fill="#ece264" stroke="#ece264" stroke-width=".5"/>
<path d="M918.8,461.0L909.6,466.0M914.9,468.1L923.4,463.4" stroke="#1c1a08" stroke-width="0.7" fill="none"/>
<polygon points="915.3,473.4 923.7,468.7 923.4,463.4 914.9,468.1" fill="#d1c140" stroke="#d1c140" stroke-width=".5"/>
<path d="M915.3,473.4L923.7,468.7M923.4,463.4L914.9,468.1" stroke="#1c1a08" stroke-width="0.7" fill="none"/>
<polygon points="994.8,410.4 994.9,407.2 995.0,386.3 995.0,389.3" fill="#c3b02d" stroke="#c3b02d" stroke-width=".5"/>
<path d="M994.9,407.2L995.0,386.3M995.0,389.3L994.8,410.4" stroke="#1c1a08" stroke-width="0.7" fill="none"/>
<polygon points="1074.5,468.8 1065.8,463.5 1060.8,465.7 1068.9,470.7" fill="#ece264" stroke="#ece264" stroke-width=".5"/>
<path d="M1074.5,468.8L1065.8,463.5M1060.8,465.7L1068.9,470.7" stroke="#1c1a08" stroke-width="0.7" fill="none"/>
<polygon points="936.3,434.5 939.8,437.4 939.5,416.9 936.0,414.1" fill="#cfbf3d" stroke="#cfbf3d" stroke-width=".5"/>
<path d="M939.8,437.4L939.5,416.9M936.0,414.1L936.3,434.5" stroke="#1c1a08" stroke-width="0.7" fill="none"/>
<polygon points="1060.4,471.0 1068.4,476.1 1068.9,470.7 1060.8,465.7" fill="#d0c03f" stroke="#d0c03f" stroke-width=".5"/>
<path d="M1060.4,471.0L1068.4,476.1M1068.9,470.7L1060.8,465.7" stroke="#1c1a08" stroke-width="0.7" fill="none"/>
<polygon points="999.1,395.5 986.9,395.3 987.0,397.7 998.6,397.9" fill="#ece264" stroke="#ece264" stroke-width=".5"/>
<path d="M999.1,395.5L986.9,395.3M987.0,397.7L998.6,397.9" stroke="#1c1a08" stroke-width="0.7" fill="none"/>
<polygon points="1042.6,438.3 1046.2,435.4 1046.6,414.9 1042.9,417.7" fill="#cfbf3e" stroke="#cfbf3e" stroke-width=".5"/>
<path d="M1046.2,435.4L1046.6,414.9M1042.9,417.7L1042.6,438.3" stroke="#1c1a08" stroke-width="0.7" fill="none"/>
<polygon points="986.9,395.3 974.6,395.8 975.5,398.2 987.0,397.7" fill="#ece264" stroke="#ece264" stroke-width=".5"/>
<path d="M986.9,395.3L974.6,395.8M975.5,398.2L987.0,397.7" stroke="#1c1a08" stroke-width="0.7" fill="none"/>
<polygon points="939.8,437.4 945.9,435.7 945.8,415.3 939.5,416.9" fill="#d2c342" stroke="#d2c342" stroke-width=".5"/>
<path d="M945.9,435.7L945.8,415.3M939.5,416.9L939.8,437.4" stroke="#1c1a08" stroke-width="0.7" fill="none"/>
<polygon points="914.6,463.1 919.6,465.6 919.2,445.6 914.1,443.2" fill="#d4c544" stroke="#d4c544" stroke-width=".5"/>
<path d="M919.6,465.6L919.2,445.6M914.1,443.2L914.6,463.1" stroke="#1c1a08" stroke-width="0.7" fill="none"/>
<polygon points="1011.3,396.3 999.1,395.5 998.6,397.9 1010.1,398.6" fill="#ece264" stroke="#ece264" stroke-width=".5"/>
<path d="M1011.3,396.3L999.1,395.5M998.6,397.9L1010.1,398.6" stroke="#1c1a08" stroke-width="0.7" fill="none"/>
<polygon points="987.1,404.9 998.6,405.1 998.6,397.9 987.0,397.7" fill="#d9cc4b" stroke="#d9cc4b" stroke-width=".5"/>
<path d="M987.1,404.9L998.6,405.1M998.6,397.9L987.0,397.7" stroke="#1c1a08" stroke-width="0.7" fill="none"/>
<polygon points="919.6,465.6 924.7,463.0 924.5,443.1 919.2,445.6" fill="#cebe3c" stroke="#cebe3c" stroke-width=".5"/>
<path d="M924.7,463.0L924.5,443.1M919.2,445.6L919.6,465.6" stroke="#1c1a08" stroke-width="0.7" fill="none"/>
<polygon points="975.6,405.4 987.1,404.9 987.0,397.7 975.5,398.2" fill="#d9cb4b" stroke="#d9cb4b" stroke-width=".5"/>
<path d="M975.6,405.4L987.1,404.9M987.0,397.7L975.5,398.2" stroke="#1c1a08" stroke-width="0.7" fill="none"/>
<polygon points="961.3,409.0 963.0,412.1 962.8,390.9 961.0,388.0" fill="#c9b735" stroke="#c9b735" stroke-width=".5"/>
<path d="M963.0,412.1L962.8,390.9M961.0,388.0L961.3,409.0" stroke="#1c1a08" stroke-width="0.7" fill="none"/>
<polygon points="1036.5,436.5 1042.6,438.3 1042.9,417.7 1036.7,416.0" fill="#d2c342" stroke="#d2c342" stroke-width=".5"/>
<path d="M1042.6,438.3L1042.9,417.7M1036.7,416.0L1036.5,436.5" stroke="#1c1a08" stroke-width="0.7" fill="none"/>
<polygon points="987.9,410.3 994.8,410.4 995.0,389.3 987.8,389.2" fill="#d6c746" stroke="#d6c746" stroke-width=".5"/>
<path d="M994.8,410.4L995.0,389.3M987.8,389.2L987.9,410.3" stroke="#1c1a08" stroke-width="0.7" fill="none"/>
<polygon points="974.6,395.8 962.6,396.9 964.1,399.2 975.5,398.2" fill="#ece264" stroke="#ece264" stroke-width=".5"/>
<path d="M974.6,395.8L962.6,396.9M964.1,399.2L975.5,398.2" stroke="#1c1a08" stroke-width="0.7" fill="none"/>
<polygon points="998.6,405.1 1010.0,405.9 1010.1,398.6 998.6,397.9" fill="#d9cb4b" stroke="#d9cb4b" stroke-width=".5"/>
<path d="M998.6,405.1L1010.0,405.9M1010.1,398.6L998.6,397.9" stroke="#1c1a08" stroke-width="0.7" fill="none"/>
<polygon points="1019.6,412.5 1021.6,409.5 1021.8,388.4 1019.9,391.3" fill="#c9b836" stroke="#c9b836" stroke-width=".5"/>
<path d="M1021.6,409.5L1021.8,388.4M1019.9,391.3L1019.6,412.5" stroke="#1c1a08" stroke-width="0.7" fill="none"/>
<polygon points="1062.3,466.8 1067.5,464.4 1068.0,444.4 1062.7,446.7" fill="#d4c544" stroke="#d4c544" stroke-width=".5"/>
<path d="M1067.5,464.4L1068.0,444.4M1062.7,446.7L1062.3,466.8" stroke="#1c1a08" stroke-width="0.7" fill="none"/>
<polygon points="909.6,466.0 901.4,471.6 907.3,473.3 914.9,468.1" fill="#ece264" stroke="#ece264" stroke-width=".5"/>
<path d="M909.6,466.0L901.4,471.6M907.3,473.3L914.9,468.1" stroke="#1c1a08" stroke-width="0.7" fill="none"/>
<polygon points="1057.3,464.1 1062.3,466.8 1062.7,446.7 1057.6,444.1" fill="#cebd3c" stroke="#cebd3c" stroke-width=".5"/>
<path d="M1062.3,466.8L1062.7,446.7M1057.6,444.1L1057.3,464.1" stroke="#1c1a08" stroke-width="0.7" fill="none"/>
<polygon points="964.3,406.5 975.6,405.4 975.5,398.2 964.1,399.2" fill="#d9cb4b" stroke="#d9cb4b" stroke-width=".5"/>
<path d="M964.3,406.5L975.6,405.4M975.5,398.2L964.1,399.2" stroke="#1c1a08" stroke-width="0.7" fill="none"/>
<polygon points="907.8,478.7 915.3,473.4 914.9,468.1 907.3,473.3" fill="#cebe3d" stroke="#cebe3d" stroke-width=".5"/>
<path d="M907.8,478.7L915.3,473.4M914.9,468.1L907.3,473.3" stroke="#1c1a08" stroke-width="0.7" fill="none"/>
<polygon points="1023.3,397.7 1011.3,396.3 1010.1,398.6 1021.4,400.0" fill="#ece264" stroke="#ece264" stroke-width=".5"/>
<path d="M1023.3,397.7L1011.3,396.3M1010.1,398.6L1021.4,400.0" stroke="#1c1a08" stroke-width="0.7" fill="none"/>
<polygon points="1010.0,405.9 1021.2,407.3 1021.4,400.0 1010.1,398.6" fill="#d8ca4a" stroke="#d8ca4a" stroke-width=".5"/>
<path d="M1010.0,405.9L1021.2,407.3M1021.4,400.0L1010.1,398.6" stroke="#1c1a08" stroke-width="0.7" fill="none"/>
<polygon points="963.0,412.1 969.8,411.3 969.8,390.1 962.8,390.9" fill="#d5c645" stroke="#d5c645" stroke-width=".5"/>
<path d="M969.8,411.3L969.8,390.1M962.8,390.9L963.0,412.1" stroke="#1c1a08" stroke-width="0.7" fill="none"/>
<polygon points="962.6,396.9 950.8,398.7 953.0,400.9 964.1,399.2" fill="#ece264" stroke="#ece264" stroke-width=".5"/>
<path d="M962.6,396.9L950.8,398.7M953.0,400.9L964.1,399.2" stroke="#1c1a08" stroke-width="0.7" fill="none"/>
<polygon points="1012.9,411.6 1019.6,412.5 1019.9,391.3 1012.9,390.4" fill="#d5c645" stroke="#d5c645" stroke-width=".5"/>
<path d="M1019.6,412.5L1019.9,391.3M1012.9,390.4L1012.9,411.6" stroke="#1c1a08" stroke-width="0.7" fill="none"/>
<polygon points="953.2,408.2 964.3,406.5 964.1,399.2 953.0,400.9" fill="#d8ca49" stroke="#d8ca49" stroke-width=".5"/>
<path d="M953.2,408.2L964.3,406.5M964.1,399.2L953.0,400.9" stroke="#1c1a08" stroke-width="0.7" fill="none"/>
<polygon points="994.8,398.4 995.0,392.1 995.0,386.3 994.9,392.4" fill="#c3b02d" stroke="#c3b02d" stroke-width=".5"/>
<path d="M994.8,398.4L995.0,392.1M995.0,386.3L994.9,392.4" stroke="#1c1a08" stroke-width="0.7" fill="none"/>
<polygon points="1034.9,399.9 1023.3,397.7 1021.4,400.0 1032.3,402.1" fill="#ece264" stroke="#ece264" stroke-width=".5"/>
<path d="M1034.9,399.9L1023.3,397.7M1021.4,400.0L1032.3,402.1" stroke="#1c1a08" stroke-width="0.7" fill="none"/>
<polygon points="1082.1,474.7 1074.5,468.8 1068.9,470.7 1075.9,476.3" fill="#ece264" stroke="#ece264" stroke-width=".5"/>
<path d="M1082.1,474.7L1074.5,468.8M1068.9,470.7L1075.9,476.3" stroke="#1c1a08" stroke-width="0.7" fill="none"/>
<polygon points="1068.4,476.1 1075.4,481.7 1075.9,476.3 1068.9,470.7" fill="#cdbd3b" stroke="#cdbd3b" stroke-width=".5"/>
<path d="M1068.4,476.1L1075.4,481.7M1075.9,476.3L1068.9,470.7" stroke="#1c1a08" stroke-width="0.7" fill="none"/>
<polygon points="1021.2,407.3 1032.0,409.4 1032.3,402.1 1021.4,400.0" fill="#d7c949" stroke="#d7c949" stroke-width=".5"/>
<path d="M1021.2,407.3L1032.0,409.4M1032.3,402.1L1021.4,400.0" stroke="#1c1a08" stroke-width="0.7" fill="none"/>
<polygon points="950.8,398.7 939.4,401.1 942.3,403.2 953.0,400.9" fill="#ece264" stroke="#ece264" stroke-width=".5"/>
<path d="M950.8,398.7L939.4,401.1M942.3,403.2L953.0,400.9" stroke="#1c1a08" stroke-width="0.7" fill="none"/>
<polygon points="994.9,392.4 995.0,386.3 987.9,386.2 987.7,392.4" fill="#ece264" stroke="#ece264" stroke-width=".5"/>
<path d="M994.9,392.4L995.0,386.3M987.9,386.2L987.7,392.4M995.0,386.3L987.9,386.2" stroke="#1c1a08" stroke-width="0.7" fill="none"/>
<polygon points="942.6,410.6 953.2,408.2 953.0,400.9 942.3,403.2" fill="#d7c848" stroke="#d7c848" stroke-width=".5"/>
<path d="M942.6,410.6L953.2,408.2M953.0,400.9L942.3,403.2" stroke="#1c1a08" stroke-width="0.7" fill="none"/>
<polygon points="964.6,394.0 961.0,388.0 961.2,393.9 964.8,400.0" fill="#c9b735" stroke="#c9b735" stroke-width=".5"/>
<path d="M964.6,394.0L961.0,388.0M961.2,393.9L964.8,400.0" stroke="#1c1a08" stroke-width="0.7" fill="none"/>
<polygon points="1017.7,400.3 1021.6,394.3 1021.8,388.4 1017.8,394.3" fill="#c9b836" stroke="#c9b836" stroke-width=".5"/>
<path d="M1017.7,400.3L1021.6,394.3M1021.8,388.4L1017.8,394.3" stroke="#1c1a08" stroke-width="0.7" fill="none"/>
<polygon points="936.0,414.1 939.5,416.9 939.2,395.4 935.6,392.7" fill="#cfbf3d" stroke="#cfbf3d" stroke-width=".5"/>
<path d="M939.5,416.9L939.2,395.4M935.6,392.7L936.0,414.1" stroke="#1c1a08" stroke-width="0.7" fill="none"/>
<polygon points="1045.9,402.6 1034.9,399.9 1032.3,402.1 1042.8,404.7" fill="#ece264" stroke="#ece264" stroke-width=".5"/>
<path d="M1045.9,402.6L1034.9,399.9M1032.3,402.1L1042.8,404.7" stroke="#1c1a08" stroke-width="0.7" fill="none"/>
<polygon points="971.7,393.2 968.0,387.2 961.0,388.0 964.6,394.0" fill="#ece264" stroke="#ece264" stroke-width=".5"/>
<path d="M971.7,393.2L968.0,387.2M961.0,388.0L964.6,394.0M968.0,387.2L961.0,388.0" stroke="#1c1a08" stroke-width="0.7" fill="none"/>
<polygon points="901.4,471.6 894.4,477.8 900.9,479.2 907.3,473.3" fill="#ece264" stroke="#ece264" stroke-width=".5"/>
<path d="M901.4,471.6L894.4,477.8M900.9,479.2L907.3,473.3" stroke="#1c1a08" stroke-width="0.7" fill="none"/>
<polygon points="901.4,484.6 907.8,478.7 907.3,473.3 900.9,479.2" fill="#ccbb39" stroke="#ccbb39" stroke-width=".5"/>
<path d="M901.4,484.6L907.8,478.7M907.3,473.3L900.9,479.2" stroke="#1c1a08" stroke-width="0.7" fill="none"/>
<polygon points="1032.0,409.4 1042.4,412.0 1042.8,404.7 1032.3,402.1" fill="#d6c747" stroke="#d6c747" stroke-width=".5"/>
<path d="M1032.0,409.4L1042.4,412.0M1042.8,404.7L1032.3,402.1" stroke="#1c1a08" stroke-width="0.7" fill="none"/>
<polygon points="1017.8,394.3 1021.8,388.4 1014.9,387.5 1010.8,393.5" fill="#ece264" stroke="#ece264" stroke-width=".5"/>
<path d="M1017.8,394.3L1021.8,388.4M1014.9,387.5L1010.8,393.5M1021.8,388.4L1014.9,387.5" stroke="#1c1a08" stroke-width="0.7" fill="none"/>
<polygon points="1042.9,417.7 1046.6,414.9 1047.0,393.5 1043.2,396.1" fill="#cfbf3e" stroke="#cfbf3e" stroke-width=".5"/>
<path d="M1046.6,414.9L1047.0,393.5M1043.2,396.1L1042.9,417.7" stroke="#1c1a08" stroke-width="0.7" fill="none"/>
<polygon points="939.5,416.9 945.8,415.3 945.6,393.9 939.2,395.4" fill="#d2c342" stroke="#d2c342" stroke-width=".5"/>
<path d="M945.8,415.3L945.6,393.9M939.2,395.4L939.5,416.9" stroke="#1c1a08" stroke-width="0.7" fill="none"/>
<polygon points="914.1,443.2 919.2,445.6 918.8,424.6 913.6,422.3" fill="#d4c544" stroke="#d4c544" stroke-width=".5"/>
<path d="M919.2,445.6L918.8,424.6M913.6,422.3L914.1,443.2" stroke="#1c1a08" stroke-width="0.7" fill="none"/>
<polygon points="1036.7,416.0 1042.9,417.7 1043.2,396.1 1036.9,394.5" fill="#d2c342" stroke="#d2c342" stroke-width=".5"/>
<path d="M1042.9,417.7L1043.2,396.1M1036.9,394.5L1036.7,416.0" stroke="#1c1a08" stroke-width="0.7" fill="none"/>
<polygon points="939.4,401.1 928.6,404.2 932.1,406.1 942.3,403.2" fill="#ece264" stroke="#ece264" stroke-width=".5"/>
<path d="M939.4,401.1L928.6,404.2M932.1,406.1L942.3,403.2" stroke="#1c1a08" stroke-width="0.7" fill="none"/>
<polygon points="919.2,445.6 924.5,443.1 924.2,422.2 918.8,424.6" fill="#cebe3c" stroke="#cebe3c" stroke-width=".5"/>
<path d="M924.5,443.1L924.2,422.2M918.8,424.6L919.2,445.6" stroke="#1c1a08" stroke-width="0.7" fill="none"/>
<polygon points="932.5,413.5 942.6,410.6 942.3,403.2 932.1,406.1" fill="#d5c646" stroke="#d5c646" stroke-width=".5"/>
<path d="M932.5,413.5L942.6,410.6M942.3,403.2L932.1,406.1" stroke="#1c1a08" stroke-width="0.7" fill="none"/>
<polygon points="1062.7,446.7 1068.0,444.4 1068.6,423.5 1063.1,425.7" fill="#d4c544" stroke="#d4c544" stroke-width=".5"/>
<path d="M1068.0,444.4L1068.6,423.5M1063.1,425.7L1062.7,446.7" stroke="#1c1a08" stroke-width="0.7" fill="none"/>
<polygon points="1057.6,444.1 1062.7,446.7 1063.1,425.7 1057.9,423.2" fill="#cebd3c" stroke="#cebd3c" stroke-width=".5"/>
<path d="M1062.7,446.7L1063.1,425.7M1057.9,423.2L1057.6,444.1" stroke="#1c1a08" stroke-width="0.7" fill="none"/>
<polygon points="1075.4,481.7 1081.2,487.8 1081.7,482.3 1075.9,476.3" fill="#cbba38" stroke="#cbba38" stroke-width=".5"/>
<path d="M1075.4,481.7L1081.2,487.8M1081.7,482.3L1075.9,476.3" stroke="#1c1a08" stroke-width="0.7" fill="none"/>
<polygon points="1088.4,481.2 1082.1,474.7 1075.9,476.3 1081.7,482.3" fill="#ece264" stroke="#ece264" stroke-width=".5"/>
<path d="M1088.4,481.2L1082.1,474.7M1075.9,476.3L1081.7,482.3" stroke="#1c1a08" stroke-width="0.7" fill="none"/>
<polygon points="1056.4,406.0 1045.9,402.6 1042.8,404.7 1052.6,407.9" fill="#ece264" stroke="#ece264" stroke-width=".5"/>
<path d="M1056.4,406.0L1045.9,402.6M1042.8,404.7L1052.6,407.9" stroke="#1c1a08" stroke-width="0.7" fill="none"/>
<polygon points="1042.4,412.0 1052.1,415.3 1052.6,407.9 1042.8,404.7" fill="#d4c545" stroke="#d4c545" stroke-width=".5"/>
<path d="M1042.4,412.0L1052.1,415.3M1052.6,407.9L1042.8,404.7" stroke="#1c1a08" stroke-width="0.7" fill="none"/>
<polygon points="943.0,398.2 935.6,392.7 935.9,398.7 943.3,404.2" fill="#cfbf3d" stroke="#cfbf3d" stroke-width=".5"/>
<path d="M943.0,398.2L935.6,392.7M935.9,398.7L943.3,404.2" stroke="#1c1a08" stroke-width="0.7" fill="none"/>
<polygon points="903.4,477.1 907.2,473.8 906.9,453.3 902.9,456.5" fill="#c8b735" stroke="#c8b735" stroke-width=".5"/>
<path d="M907.2,473.8L906.9,453.3M902.9,456.5L903.4,477.1" stroke="#1c1a08" stroke-width="0.7" fill="none"/>
<polygon points="896.9,475.4 903.4,477.1 902.9,456.5 896.3,454.9" fill="#d7c948" stroke="#d7c948" stroke-width=".5"/>
<path d="M903.4,477.1L902.9,456.5M896.3,454.9L896.9,475.4" stroke="#1c1a08" stroke-width="0.7" fill="none"/>
<polygon points="949.5,396.6 942.0,391.2 935.6,392.7 943.0,398.2" fill="#ece264" stroke="#ece264" stroke-width=".5"/>
<path d="M949.5,396.6L942.0,391.2M935.6,392.7L943.0,398.2M942.0,391.2L935.6,392.7" stroke="#1c1a08" stroke-width="0.7" fill="none"/>
<polygon points="1038.9,404.9 1046.7,399.5 1047.0,393.5 1039.2,398.9" fill="#cfbf3e" stroke="#cfbf3e" stroke-width=".5"/>
<path d="M1038.9,404.9L1046.7,399.5M1047.0,393.5L1039.2,398.9" stroke="#1c1a08" stroke-width="0.7" fill="none"/>
<polygon points="928.6,404.2 918.5,407.8 922.7,409.6 932.1,406.1" fill="#ece264" stroke="#ece264" stroke-width=".5"/>
<path d="M928.6,404.2L918.5,407.8M922.7,409.6L932.1,406.1" stroke="#1c1a08" stroke-width="0.7" fill="none"/>
<polygon points="923.1,417.1 932.5,413.5 932.1,406.1 922.7,409.6" fill="#d3c443" stroke="#d3c443" stroke-width=".5"/>
<path d="M923.1,417.1L932.5,413.5M932.1,406.1L922.7,409.6" stroke="#1c1a08" stroke-width="0.7" fill="none"/>
<polygon points="1039.2,398.9 1047.0,393.5 1040.7,391.9 1032.8,397.2" fill="#ece264" stroke="#ece264" stroke-width=".5"/>
<path d="M1039.2,398.9L1047.0,393.5M1040.7,391.9L1032.8,397.2M1047.0,393.5L1040.7,391.9" stroke="#1c1a08" stroke-width="0.7" fill="none"/>
<polygon points="994.7,404.9 994.8,398.4 994.9,392.4 994.7,398.9" fill="#c3b02d" stroke="#c3b02d" stroke-width=".5"/>
<path d="M994.7,404.9L994.8,398.4M994.9,392.4L994.7,398.9" stroke="#1c1a08" stroke-width="0.7" fill="none"/>
<polygon points="1074.3,475.2 1078.0,478.7 1078.4,458.0 1074.7,454.7" fill="#c8b734" stroke="#c8b734" stroke-width=".5"/>
<path d="M1078.0,478.7L1078.4,458.0M1074.7,454.7L1074.3,475.2" stroke="#1c1a08" stroke-width="0.7" fill="none"/>
<polygon points="896.3,491.0 901.4,484.6 900.9,479.2 895.7,485.5" fill="#c9b836" stroke="#c9b836" stroke-width=".5"/>
<path d="M896.3,491.0L901.4,484.6M900.9,479.2L895.7,485.5" stroke="#1c1a08" stroke-width="0.7" fill="none"/>
<polygon points="894.4,477.8 888.8,484.6 895.7,485.5 900.9,479.2" fill="#ece264" stroke="#ece264" stroke-width=".5"/>
<path d="M894.4,477.8L888.8,484.6M895.7,485.5L900.9,479.2" stroke="#1c1a08" stroke-width="0.7" fill="none"/>
<polygon points="1078.0,478.7 1084.6,477.1 1085.3,456.4 1078.4,458.0" fill="#d7c949" stroke="#d7c949" stroke-width=".5"/>
<path d="M1084.6,477.1L1085.3,456.4M1078.4,458.0L1078.0,478.7" stroke="#1c1a08" stroke-width="0.7" fill="none"/>
<polygon points="1066.1,409.9 1056.4,406.0 1052.6,407.9 1061.7,411.6" fill="#ece264" stroke="#ece264" stroke-width=".5"/>
<path d="M1066.1,409.9L1056.4,406.0M1052.6,407.9L1061.7,411.6" stroke="#1c1a08" stroke-width="0.7" fill="none"/>
<polygon points="994.7,398.9 994.9,392.4 987.7,392.4 987.3,398.8" fill="#ece264" stroke="#ece264" stroke-width=".5"/>
<path d="M994.7,398.9L994.9,392.4M987.7,392.4L987.3,398.8" stroke="#1c1a08" stroke-width="0.7" fill="none"/>
<polygon points="968.4,400.2 964.6,394.0 964.8,400.0 968.5,406.3" fill="#c9b735" stroke="#c9b735" stroke-width=".5"/>
<path d="M968.4,400.2L964.6,394.0M964.8,400.0L968.5,406.3" stroke="#1c1a08" stroke-width="0.7" fill="none"/>
<polygon points="1052.1,415.3 1061.1,419.1 1061.7,411.6 1052.6,407.9" fill="#d2c342" stroke="#d2c342" stroke-width=".5"/>
<path d="M1052.1,415.3L1061.1,419.1M1061.7,411.6L1052.6,407.9" stroke="#1c1a08" stroke-width="0.7" fill="none"/>
<polygon points="1013.5,406.6 1017.7,400.3 1017.8,394.3 1013.6,400.6" fill="#c9b836" stroke="#c9b836" stroke-width=".5"/>
<path d="M1013.5,406.6L1017.7,400.3M1017.8,394.3L1013.6,400.6" stroke="#1c1a08" stroke-width="0.7" fill="none"/>
<polygon points="913.6,422.3 918.8,424.6 918.5,402.6 913.1,400.4" fill="#d4c544" stroke="#d4c544" stroke-width=".5"/>
<path d="M918.8,424.6L918.5,402.6M913.1,400.4L913.6,422.3" stroke="#1c1a08" stroke-width="0.7" fill="none"/>
<polygon points="975.5,399.4 971.7,393.2 964.6,394.0 968.4,400.2" fill="#ece264" stroke="#ece264" stroke-width=".5"/>
<path d="M975.5,399.4L971.7,393.2M964.6,394.0L968.4,400.2" stroke="#1c1a08" stroke-width="0.7" fill="none"/>
<polygon points="1081.2,487.8 1085.6,494.4 1086.2,488.9 1081.7,482.3" fill="#c8b634" stroke="#c8b634" stroke-width=".5"/>
<path d="M1081.2,487.8L1085.6,494.4M1086.2,488.9L1081.7,482.3" stroke="#1c1a08" stroke-width="0.7" fill="none"/>
<polygon points="918.8,424.6 924.2,422.2 923.9,400.3 918.5,402.6" fill="#cebe3c" stroke="#cebe3c" stroke-width=".5"/>
<path d="M924.2,422.2L923.9,400.3M918.5,402.6L918.8,424.6" stroke="#1c1a08" stroke-width="0.7" fill="none"/>
<polygon points="1013.6,400.6 1017.8,394.3 1010.8,393.5 1006.5,399.6" fill="#ece264" stroke="#ece264" stroke-width=".5"/>
<path d="M1013.6,400.6L1017.8,394.3M1010.8,393.5L1006.5,399.6" stroke="#1c1a08" stroke-width="0.7" fill="none"/>
<polygon points="1093.4,488.2 1088.4,481.2 1081.7,482.3 1086.2,488.9" fill="#ece264" stroke="#ece264" stroke-width=".5"/>
<path d="M1093.4,488.2L1088.4,481.2M1081.7,482.3L1086.2,488.9" stroke="#1c1a08" stroke-width="0.7" fill="none"/>
<polygon points="1063.1,425.7 1068.6,423.5 1069.1,401.5 1063.6,403.6" fill="#d4c544" stroke="#d4c544" stroke-width=".5"/>
<path d="M1068.6,423.5L1069.1,401.5M1063.6,403.6L1063.1,425.7" stroke="#1c1a08" stroke-width="0.7" fill="none"/>
<polygon points="918.5,407.8 909.3,412.1 914.0,413.6 922.7,409.6" fill="#ece264" stroke="#ece264" stroke-width=".5"/>
<path d="M918.5,407.8L909.3,412.1M914.0,413.6L922.7,409.6" stroke="#1c1a08" stroke-width="0.7" fill="none"/>
<polygon points="1057.9,423.2 1063.1,425.7 1063.6,403.6 1058.2,401.3" fill="#cebd3c" stroke="#cebd3c" stroke-width=".5"/>
<path d="M1063.1,425.7L1063.6,403.6M1058.2,401.3L1057.9,423.2" stroke="#1c1a08" stroke-width="0.7" fill="none"/>
<polygon points="914.6,421.1 923.1,417.1 922.7,409.6 914.0,413.6" fill="#d1c140" stroke="#d1c140" stroke-width=".5"/>
<path d="M914.6,421.1L923.1,417.1M922.7,409.6L914.0,413.6" stroke="#1c1a08" stroke-width="0.7" fill="none"/>
<polygon points="892.6,497.8 896.3,491.0 895.7,485.5 892.0,492.2" fill="#c6b432" stroke="#c6b432" stroke-width=".5"/>
<path d="M892.6,497.8L896.3,491.0M895.7,485.5L892.0,492.2" stroke="#1c1a08" stroke-width="0.7" fill="none"/>
<polygon points="1074.8,414.5 1066.1,409.9 1061.7,411.6 1069.8,415.9" fill="#ece264" stroke="#ece264" stroke-width=".5"/>
<path d="M1074.8,414.5L1066.1,409.9M1061.7,411.6L1069.8,415.9" stroke="#1c1a08" stroke-width="0.7" fill="none"/>
<polygon points="1061.1,419.1 1069.2,423.5 1069.8,415.9 1061.7,411.6" fill="#d0c03f" stroke="#d0c03f" stroke-width=".5"/>
<path d="M1061.1,419.1L1069.2,423.5M1069.8,415.9L1061.7,411.6" stroke="#1c1a08" stroke-width="0.7" fill="none"/>
<polygon points="950.7,403.9 943.0,398.2 943.3,404.2 950.9,410.0" fill="#cfbf3d" stroke="#cfbf3d" stroke-width=".5"/>
<path d="M950.7,403.9L943.0,398.2M943.3,404.2L950.9,410.0" stroke="#1c1a08" stroke-width="0.7" fill="none"/>
<polygon points="888.8,484.6 884.6,491.8 892.0,492.2 895.7,485.5" fill="#ece264" stroke="#ece264" stroke-width=".5"/>
<path d="M888.8,484.6L884.6,491.8M892.0,492.2L895.7,485.5" stroke="#1c1a08" stroke-width="0.7" fill="none"/>
<polygon points="902.9,456.5 906.9,453.3 906.5,431.8 902.5,434.9" fill="#c8b735" stroke="#c8b735" stroke-width=".5"/>
<path d="M906.9,453.3L906.5,431.8M902.5,434.9L902.9,456.5" stroke="#1c1a08" stroke-width="0.7" fill="none"/>
<polygon points="896.3,454.9 902.9,456.5 902.5,434.9 895.7,433.4" fill="#d7c948" stroke="#d7c948" stroke-width=".5"/>
<path d="M902.9,456.5L902.5,434.9M895.7,433.4L896.3,454.9" stroke="#1c1a08" stroke-width="0.7" fill="none"/>
<polygon points="924.1,404.9 913.1,400.4 913.5,406.5 924.5,411.0" fill="#d4c544" stroke="#d4c544" stroke-width=".5"/>
<path d="M924.1,404.9L913.1,400.4M913.5,406.5L924.5,411.0" stroke="#1c1a08" stroke-width="0.7" fill="none"/>
<polygon points="1030.9,410.6 1038.9,404.9 1039.2,398.9 1031.1,404.4" fill="#cfbf3e" stroke="#cfbf3e" stroke-width=".5"/>
<path d="M1030.9,410.6L1038.9,404.9M1039.2,398.9L1031.1,404.4" stroke="#1c1a08" stroke-width="0.7" fill="none"/>
<polygon points="957.2,402.2 949.5,396.6 943.0,398.2 950.7,403.9" fill="#ece264" stroke="#ece264" stroke-width=".5"/>
<path d="M957.2,402.2L949.5,396.6M943.0,398.2L950.7,403.9" stroke="#1c1a08" stroke-width="0.7" fill="none"/>
<polygon points="929.6,402.6 918.6,398.1 913.1,400.4 924.1,404.9" fill="#ece264" stroke="#ece264" stroke-width=".5"/>
<path d="M929.6,402.6L918.6,398.1M913.1,400.4L924.1,404.9M918.6,398.1L913.1,400.4" stroke="#1c1a08" stroke-width="0.7" fill="none"/>
<polygon points="1031.1,404.4 1039.2,398.9 1032.8,397.2 1024.7,402.7" fill="#ece264" stroke="#ece264" stroke-width=".5"/>
<path d="M1031.1,404.4L1039.2,398.9M1032.8,397.2L1024.7,402.7" stroke="#1c1a08" stroke-width="0.7" fill="none"/>
<polygon points="1074.7,454.7 1078.4,458.0 1078.9,436.3 1075.1,433.1" fill="#c8b734" stroke="#c8b734" stroke-width=".5"/>
<path d="M1078.4,458.0L1078.9,436.3M1075.1,433.1L1074.7,454.7" stroke="#1c1a08" stroke-width="0.7" fill="none"/>
<polygon points="1057.3,412.0 1068.7,407.6 1069.1,401.5 1057.8,405.9" fill="#d4c544" stroke="#d4c544" stroke-width=".5"/>
<path d="M1057.3,412.0L1068.7,407.6M1069.1,401.5L1057.8,405.9" stroke="#1c1a08" stroke-width="0.7" fill="none"/>
<polygon points="1078.4,458.0 1085.3,456.4 1085.9,434.8 1078.9,436.3" fill="#d7c949" stroke="#d7c949" stroke-width=".5"/>
<path d="M1085.3,456.4L1085.9,434.8M1078.9,436.3L1078.4,458.0" stroke="#1c1a08" stroke-width="0.7" fill="none"/>
<polygon points="1057.8,405.9 1069.1,401.5 1063.8,399.2 1052.4,403.4" fill="#ece264" stroke="#ece264" stroke-width=".5"/>
<path d="M1057.8,405.9L1069.1,401.5M1063.8,399.2L1052.4,403.4M1069.1,401.5L1063.8,399.2" stroke="#1c1a08" stroke-width="0.7" fill="none"/>
<polygon points="909.3,412.1 901.1,416.9 906.4,418.2 914.0,413.6" fill="#ece264" stroke="#ece264" stroke-width=".5"/>
<path d="M909.3,412.1L901.1,416.9M906.4,418.2L914.0,413.6" stroke="#1c1a08" stroke-width="0.7" fill="none"/>
<polygon points="994.6,411.7 994.7,404.9 994.7,398.9 994.6,405.6" fill="#c3b02d" stroke="#c3b02d" stroke-width=".5"/>
<path d="M994.6,411.7L994.7,404.9M994.7,398.9L994.6,405.6" stroke="#1c1a08" stroke-width="0.7" fill="none"/>
<polygon points="907.0,425.8 914.6,421.1 914.0,413.6 906.4,418.2" fill="#cebe3d" stroke="#cebe3d" stroke-width=".5"/>
<path d="M907.0,425.8L914.6,421.1M914.0,413.6L906.4,418.2" stroke="#1c1a08" stroke-width="0.7" fill="none"/>
<polygon points="1085.6,494.4 1088.6,501.4 1089.2,495.8 1086.2,488.9" fill="#c5b330" stroke="#c5b330" stroke-width=".5"/>
<path d="M1085.6,494.4L1088.6,501.4M1089.2,495.8L1086.2,488.9" stroke="#1c1a08" stroke-width="0.7" fill="none"/>
<polygon points="1096.7,495.7 1093.4,488.2 1086.2,488.9 1089.2,495.8" fill="#ece264" stroke="#ece264" stroke-width=".5"/>
<path d="M1096.7,495.7L1093.4,488.2M1086.2,488.9L1089.2,495.8" stroke="#1c1a08" stroke-width="0.7" fill="none"/>
<polygon points="972.3,406.8 968.4,400.2 968.5,406.3 972.4,412.9" fill="#c9b735" stroke="#c9b735" stroke-width=".5"/>
<path d="M972.3,406.8L968.4,400.2M968.5,406.3L972.4,412.9" stroke="#1c1a08" stroke-width="0.7" fill="none"/>
<polygon points="994.6,405.6 994.7,398.9 987.3,398.8 987.0,405.5" fill="#ece264" stroke="#ece264" stroke-width=".5"/>
<path d="M994.6,405.6L994.7,398.9M987.3,398.8L987.0,405.5" stroke="#1c1a08" stroke-width="0.7" fill="none"/>
<polygon points="1009.2,413.2 1013.5,406.6 1013.6,400.6 1009.3,407.0" fill="#c9b836" stroke="#c9b836" stroke-width=".5"/>
<path d="M1009.2,413.2L1013.5,406.6M1013.6,400.6L1009.3,407.0" stroke="#1c1a08" stroke-width="0.7" fill="none"/>
<polygon points="1069.2,423.5 1076.3,428.3 1077.0,420.7 1069.8,415.9" fill="#cdbd3b" stroke="#cdbd3b" stroke-width=".5"/>
<path d="M1069.2,423.5L1076.3,428.3M1077.0,420.7L1069.8,415.9" stroke="#1c1a08" stroke-width="0.7" fill="none"/>
<polygon points="892.9,491.1 895.0,487.1 894.6,466.0 892.4,469.8" fill="#c2b02d" stroke="#c2b02d" stroke-width=".5"/>
<path d="M895.0,487.1L894.6,466.0M892.4,469.8L892.9,491.1" stroke="#1c1a08" stroke-width="0.7" fill="none"/>
<polygon points="1082.5,419.5 1074.8,414.5 1069.8,415.9 1077.0,420.7" fill="#ece264" stroke="#ece264" stroke-width=".5"/>
<path d="M1082.5,419.5L1074.8,414.5M1069.8,415.9L1077.0,420.7" stroke="#1c1a08" stroke-width="0.7" fill="none"/>
<polygon points="979.6,405.9 975.5,399.4 968.4,400.2 972.3,406.8" fill="#ece264" stroke="#ece264" stroke-width=".5"/>
<path d="M979.6,405.9L975.5,399.4M968.4,400.2L972.3,406.8" stroke="#1c1a08" stroke-width="0.7" fill="none"/>
<polygon points="1009.3,407.0 1013.6,400.6 1006.5,399.6 1002.0,406.1" fill="#ece264" stroke="#ece264" stroke-width=".5"/>
<path d="M1009.3,407.0L1013.6,400.6M1006.5,399.6L1002.0,406.1" stroke="#1c1a08" stroke-width="0.7" fill="none"/>
<polygon points="890.4,504.9 892.6,497.8 892.0,492.2 889.8,499.3" fill="#c3b12e" stroke="#c3b12e" stroke-width=".5"/>
<path d="M890.4,504.9L892.6,497.8M892.0,492.2L889.8,499.3" stroke="#1c1a08" stroke-width="0.7" fill="none"/>
<polygon points="885.2,490.4 892.9,491.1 892.4,469.8 884.6,469.1" fill="#d9cb4b" stroke="#d9cb4b" stroke-width=".5"/>
<path d="M892.9,491.1L892.4,469.8M884.6,469.1L885.2,490.4" stroke="#1c1a08" stroke-width="0.7" fill="none"/>
<polygon points="1085.8,488.9 1087.7,492.8 1088.2,471.5 1086.2,467.6" fill="#c2af2c" stroke="#c2af2c" stroke-width=".5"/>
<path d="M1087.7,492.8L1088.2,471.5M1086.2,467.6L1085.8,488.9" stroke="#1c1a08" stroke-width="0.7" fill="none"/>
<polygon points="884.6,491.8 882.1,499.5 889.8,499.3 892.0,492.2" fill="#ece264" stroke="#ece264" stroke-width=".5"/>
<path d="M884.6,491.8L882.1,499.5M889.8,499.3L892.0,492.2" stroke="#1c1a08" stroke-width="0.7" fill="none"/>
<polygon points="935.4,409.6 924.1,404.9 924.5,411.0 935.7,415.8" fill="#d4c544" stroke="#d4c544" stroke-width=".5"/>
<path d="M935.4,409.6L924.1,404.9M924.5,411.0L935.7,415.8" stroke="#1c1a08" stroke-width="0.7" fill="none"/>
<polygon points="902.5,434.9 906.5,431.8 906.1,409.3 902.0,412.3" fill="#c8b735" stroke="#c8b735" stroke-width=".5"/>
<path d="M906.5,431.8L906.1,409.3M902.0,412.3L902.5,434.9" stroke="#1c1a08" stroke-width="0.7" fill="none"/>
<polygon points="940.9,407.1 929.6,402.6 924.1,404.9 935.4,409.6" fill="#ece264" stroke="#ece264" stroke-width=".5"/>
<path d="M940.9,407.1L929.6,402.6M924.1,404.9L935.4,409.6" stroke="#1c1a08" stroke-width="0.7" fill="none"/>
<polygon points="1087.7,492.8 1095.5,492.3 1096.2,471.0 1088.2,471.5" fill="#d9cb4b" stroke="#d9cb4b" stroke-width=".5"/>
<path d="M1095.5,492.3L1096.2,471.0M1088.2,471.5L1087.7,492.8" stroke="#1c1a08" stroke-width="0.7" fill="none"/>
<polygon points="900.5,430.9 907.0,425.8 906.4,418.2 899.9,423.2" fill="#ccbb39" stroke="#ccbb39" stroke-width=".5"/>
<path d="M900.5,430.9L907.0,425.8M906.4,418.2L899.9,423.2" stroke="#1c1a08" stroke-width="0.7" fill="none"/>
<polygon points="895.7,433.4 902.5,434.9 902.0,412.3 895.0,410.8" fill="#d7c948" stroke="#d7c948" stroke-width=".5"/>
<path d="M902.5,434.9L902.0,412.3M895.0,410.8L895.7,433.4" stroke="#1c1a08" stroke-width="0.7" fill="none"/>
<polygon points="958.6,409.8 950.7,403.9 950.9,410.0 958.8,416.0" fill="#cfbf3d" stroke="#cfbf3d" stroke-width=".5"/>
<path d="M958.6,409.8L950.7,403.9M950.9,410.0L958.8,416.0" stroke="#1c1a08" stroke-width="0.7" fill="none"/>
<polygon points="901.1,416.9 894.1,422.2 899.9,423.2 906.4,418.2" fill="#ece264" stroke="#ece264" stroke-width=".5"/>
<path d="M901.1,416.9L894.1,422.2M899.9,423.2L906.4,418.2" stroke="#1c1a08" stroke-width="0.7" fill="none"/>
<polygon points="1045.7,416.6 1057.3,412.0 1057.8,405.9 1046.1,410.4" fill="#d4c544" stroke="#d4c544" stroke-width=".5"/>
<path d="M1045.7,416.6L1057.3,412.0M1057.8,405.9L1046.1,410.4" stroke="#1c1a08" stroke-width="0.7" fill="none"/>
<polygon points="1022.5,416.4 1030.9,410.6 1031.1,404.4 1022.7,410.2" fill="#cfbf3e" stroke="#cfbf3e" stroke-width=".5"/>
<path d="M1022.5,416.4L1030.9,410.6M1031.1,404.4L1022.7,410.2" stroke="#1c1a08" stroke-width="0.7" fill="none"/>
<polygon points="1046.1,410.4 1057.8,405.9 1052.4,403.4 1040.7,407.9" fill="#ece264" stroke="#ece264" stroke-width=".5"/>
<path d="M1046.1,410.4L1057.8,405.9M1052.4,403.4L1040.7,407.9" stroke="#1c1a08" stroke-width="0.7" fill="none"/>
<polygon points="965.3,408.0 957.2,402.2 950.7,403.9 958.6,409.8" fill="#ece264" stroke="#ece264" stroke-width=".5"/>
<path d="M965.3,408.0L957.2,402.2M950.7,403.9L958.6,409.8" stroke="#1c1a08" stroke-width="0.7" fill="none"/>
<polygon points="1075.1,433.1 1078.9,436.3 1079.5,413.6 1075.5,410.6" fill="#c8b734" stroke="#c8b734" stroke-width=".5"/>
<path d="M1078.9,436.3L1079.5,413.6M1075.5,410.6L1075.1,433.1" stroke="#1c1a08" stroke-width="0.7" fill="none"/>
<polygon points="1088.6,501.4 1089.9,508.7 1090.6,503.0 1089.2,495.8" fill="#c2af2c" stroke="#c2af2c" stroke-width=".5"/>
<path d="M1088.6,501.4L1089.9,508.7M1090.6,503.0L1089.2,495.8" stroke="#1c1a08" stroke-width="0.7" fill="none"/>
<polygon points="1022.7,410.2 1031.1,404.4 1024.7,402.7 1016.2,408.4" fill="#ece264" stroke="#ece264" stroke-width=".5"/>
<path d="M1022.7,410.2L1031.1,404.4M1024.7,402.7L1016.2,408.4" stroke="#1c1a08" stroke-width="0.7" fill="none"/>
<polygon points="1078.9,436.3 1085.9,434.8 1086.6,412.2 1079.5,413.6" fill="#d7c949" stroke="#d7c949" stroke-width=".5"/>
<path d="M1085.9,434.8L1086.6,412.2M1079.5,413.6L1078.9,436.3" stroke="#1c1a08" stroke-width="0.7" fill="none"/>
<polygon points="1098.4,503.5 1096.7,495.7 1089.2,495.8 1090.6,503.0" fill="#ece264" stroke="#ece264" stroke-width=".5"/>
<path d="M1098.4,503.5L1096.7,495.7M1089.2,495.8L1090.6,503.0" stroke="#1c1a08" stroke-width="0.7" fill="none"/>
<polygon points="1076.3,428.3 1082.1,433.7 1082.9,425.9 1077.0,420.7" fill="#cbba38" stroke="#cbba38" stroke-width=".5"/>
<path d="M1076.3,428.3L1082.1,433.7M1082.9,425.9L1077.0,420.7" stroke="#1c1a08" stroke-width="0.7" fill="none"/>
<polygon points="1088.8,425.1 1082.5,419.5 1077.0,420.7 1082.9,425.9" fill="#ece264" stroke="#ece264" stroke-width=".5"/>
<path d="M1088.8,425.1L1082.5,419.5M1077.0,420.7L1082.9,425.9" stroke="#1c1a08" stroke-width="0.7" fill="none"/>
<polygon points="994.4,418.9 994.6,411.7 994.6,405.6 994.4,412.6" fill="#c3b02d" stroke="#c3b02d" stroke-width=".5"/>
<path d="M994.4,418.9L994.6,411.7M994.6,405.6L994.4,412.6" stroke="#1c1a08" stroke-width="0.7" fill="none"/>
<polygon points="913.3,410.9 899.2,407.8 895.0,410.8 909.2,413.9" fill="#ece264" stroke="#ece264" stroke-width=".5"/>
<path d="M913.3,410.9L899.2,407.8M895.0,410.8L909.2,413.9M899.2,407.8L895.0,410.8" stroke="#1c1a08" stroke-width="0.7" fill="none"/>
<polygon points="909.2,413.9 895.0,410.8 895.6,417.0 909.7,420.1" fill="#d7c948" stroke="#d7c948" stroke-width=".5"/>
<path d="M909.2,413.9L895.0,410.8M895.6,417.0L909.7,420.1" stroke="#1c1a08" stroke-width="0.7" fill="none"/>
<polygon points="889.9,512.3 890.4,504.9 889.8,499.3 889.2,506.6" fill="#c0ad2a" stroke="#c0ad2a" stroke-width=".5"/>
<path d="M889.9,512.3L890.4,504.9M889.8,499.3L889.2,506.6" stroke="#1c1a08" stroke-width="0.7" fill="none"/>
<polygon points="976.3,413.6 972.3,406.8 972.4,412.9 976.4,419.9" fill="#c9b735" stroke="#c9b735" stroke-width=".5"/>
<path d="M976.3,413.6L972.3,406.8M972.4,412.9L976.4,419.9" stroke="#1c1a08" stroke-width="0.7" fill="none"/>
<polygon points="1004.6,420.1 1009.2,413.2 1009.3,407.0 1004.7,413.8" fill="#c9b836" stroke="#c9b836" stroke-width=".5"/>
<path d="M1004.6,420.1L1009.2,413.2M1009.3,407.0L1004.7,413.8" stroke="#1c1a08" stroke-width="0.7" fill="none"/>
<polygon points="892.4,469.8 894.6,466.0 894.2,443.8 891.9,447.5" fill="#c2b02d" stroke="#c2b02d" stroke-width=".5"/>
<path d="M894.6,466.0L894.2,443.8M891.9,447.5L892.4,469.8" stroke="#1c1a08" stroke-width="0.7" fill="none"/>
<polygon points="994.4,412.6 994.6,405.6 987.0,405.5 986.7,412.6" fill="#ece264" stroke="#ece264" stroke-width=".5"/>
<path d="M994.4,412.6L994.6,405.6M987.0,405.5L986.7,412.6" stroke="#1c1a08" stroke-width="0.7" fill="none"/>
<polygon points="1072.1,415.1 1086.6,412.2 1082.6,409.2 1068.2,412.0" fill="#ece264" stroke="#ece264" stroke-width=".5"/>
<path d="M1072.1,415.1L1086.6,412.2M1082.6,409.2L1068.2,412.0M1086.6,412.2L1082.6,409.2" stroke="#1c1a08" stroke-width="0.7" fill="none"/>
<polygon points="1071.5,421.4 1086.0,418.4 1086.6,412.2 1072.1,415.1" fill="#d7c949" stroke="#d7c949" stroke-width=".5"/>
<path d="M1071.5,421.4L1086.0,418.4M1086.6,412.2L1072.1,415.1" stroke="#1c1a08" stroke-width="0.7" fill="none"/>
<polygon points="882.1,499.5 881.4,507.3 889.2,506.6 889.8,499.3" fill="#ece264" stroke="#ece264" stroke-width=".5"/>
<path d="M882.1,499.5L881.4,507.3M889.2,506.6L889.8,499.3" stroke="#1c1a08" stroke-width="0.7" fill="none"/>
<polygon points="895.4,436.4 900.5,430.9 899.9,423.2 894.6,428.7" fill="#c9b836" stroke="#c9b836" stroke-width=".5"/>
<path d="M895.4,436.4L900.5,430.9M899.9,423.2L894.6,428.7" stroke="#1c1a08" stroke-width="0.7" fill="none"/>
<polygon points="983.8,412.7 979.6,405.9 972.3,406.8 976.3,413.6" fill="#ece264" stroke="#ece264" stroke-width=".5"/>
<path d="M983.8,412.7L979.6,405.9M972.3,406.8L976.3,413.6" stroke="#1c1a08" stroke-width="0.7" fill="none"/>
<polygon points="947.1,414.3 935.4,409.6 935.7,415.8 947.3,420.6" fill="#d4c544" stroke="#d4c544" stroke-width=".5"/>
<path d="M947.1,414.3L935.4,409.6M935.7,415.8L947.3,420.6" stroke="#1c1a08" stroke-width="0.7" fill="none"/>
<polygon points="894.1,422.2 888.4,428.0 894.6,428.7 899.9,423.2" fill="#ece264" stroke="#ece264" stroke-width=".5"/>
<path d="M894.1,422.2L888.4,428.0M894.6,428.7L899.9,423.2" stroke="#1c1a08" stroke-width="0.7" fill="none"/>
<polygon points="1004.7,413.8 1009.3,407.0 1002.0,406.1 997.3,412.8" fill="#ece264" stroke="#ece264" stroke-width=".5"/>
<path d="M1004.7,413.8L1009.3,407.0M1002.0,406.1L997.3,412.8" stroke="#1c1a08" stroke-width="0.7" fill="none"/>
<polygon points="884.6,469.1 892.4,469.8 891.9,447.5 883.9,446.8" fill="#d9cb4b" stroke="#d9cb4b" stroke-width=".5"/>
<path d="M892.4,469.8L891.9,447.5M883.9,446.8L884.6,469.1" stroke="#1c1a08" stroke-width="0.7" fill="none"/>
<polygon points="952.6,411.8 940.9,407.1 935.4,409.6 947.1,414.3" fill="#ece264" stroke="#ece264" stroke-width=".5"/>
<path d="M952.6,411.8L940.9,407.1M935.4,409.6L947.1,414.3" stroke="#1c1a08" stroke-width="0.7" fill="none"/>
<polygon points="1086.2,467.6 1088.2,471.5 1088.8,449.1 1086.7,445.4" fill="#c2af2c" stroke="#c2af2c" stroke-width=".5"/>
<path d="M1088.2,471.5L1088.8,449.1M1086.7,445.4L1086.2,467.6" stroke="#1c1a08" stroke-width="0.7" fill="none"/>
<polygon points="1033.7,421.2 1045.7,416.6 1046.1,410.4 1034.0,415.0" fill="#d4c544" stroke="#d4c544" stroke-width=".5"/>
<path d="M1033.7,421.2L1045.7,416.6M1046.1,410.4L1034.0,415.0" stroke="#1c1a08" stroke-width="0.7" fill="none"/>
<polygon points="1034.0,415.0 1046.1,410.4 1040.7,407.9 1028.7,412.4" fill="#ece264" stroke="#ece264" stroke-width=".5"/>
<path d="M1034.0,415.0L1046.1,410.4M1040.7,407.9L1028.7,412.4" stroke="#1c1a08" stroke-width="0.7" fill="none"/>
<polygon points="1089.9,508.7 1089.6,516.1 1090.2,510.4 1090.6,503.0" fill="#bfac28" stroke="#bfac28" stroke-width=".5"/>
<path d="M1089.9,508.7L1089.6,516.1M1090.2,510.4L1090.6,503.0" stroke="#1c1a08" stroke-width="0.7" fill="none"/>
<polygon points="1088.2,471.5 1096.2,471.0 1096.9,448.6 1088.8,449.1" fill="#d9cb4b" stroke="#d9cb4b" stroke-width=".5"/>
<path d="M1096.2,471.0L1096.9,448.6M1088.8,449.1L1088.2,471.5" stroke="#1c1a08" stroke-width="0.7" fill="none"/>
<polygon points="966.9,415.9 958.6,409.8 958.8,416.0 967.0,422.2" fill="#cfbf3d" stroke="#cfbf3d" stroke-width=".5"/>
<path d="M966.9,415.9L958.6,409.8M958.8,416.0L967.0,422.2" stroke="#1c1a08" stroke-width="0.7" fill="none"/>
<polygon points="1013.9,422.5 1022.5,416.4 1022.7,410.2 1014.0,416.2" fill="#cfbf3e" stroke="#cfbf3e" stroke-width=".5"/>
<path d="M1013.9,422.5L1022.5,416.4M1022.7,410.2L1014.0,416.2" stroke="#1c1a08" stroke-width="0.7" fill="none"/>
<polygon points="973.6,414.1 965.3,408.0 958.6,409.8 966.9,415.9" fill="#ece264" stroke="#ece264" stroke-width=".5"/>
<path d="M973.6,414.1L965.3,408.0M958.6,409.8L966.9,415.9" stroke="#1c1a08" stroke-width="0.7" fill="none"/>
<polygon points="1082.1,433.7 1086.6,439.4 1087.4,431.6 1082.9,425.9" fill="#c8b634" stroke="#c8b634" stroke-width=".5"/>
<path d="M1082.1,433.7L1086.6,439.4M1087.4,431.6L1082.9,425.9" stroke="#1c1a08" stroke-width="0.7" fill="none"/>
<polygon points="1098.1,511.4 1098.4,503.5 1090.6,503.0 1090.2,510.4" fill="#ece264" stroke="#ece264" stroke-width=".5"/>
<path d="M1098.1,511.4L1098.4,503.5M1090.6,503.0L1090.2,510.4" stroke="#1c1a08" stroke-width="0.7" fill="none"/>
<polygon points="927.7,414.0 913.3,410.9 909.2,413.9 923.7,417.0" fill="#ece264" stroke="#ece264" stroke-width=".5"/>
<path d="M927.7,414.0L913.3,410.9M909.2,413.9L923.7,417.0" stroke="#1c1a08" stroke-width="0.7" fill="none"/>
<polygon points="1014.0,416.2 1022.7,410.2 1016.2,408.4 1007.4,414.4" fill="#ece264" stroke="#ece264" stroke-width=".5"/>
<path d="M1014.0,416.2L1022.7,410.2M1016.2,408.4L1007.4,414.4" stroke="#1c1a08" stroke-width="0.7" fill="none"/>
<polygon points="923.7,417.0 909.2,413.9 909.7,420.1 924.1,423.3" fill="#d7c948" stroke="#d7c948" stroke-width=".5"/>
<path d="M923.7,417.0L909.2,413.9M909.7,420.1L924.1,423.3" stroke="#1c1a08" stroke-width="0.7" fill="none"/>
<polygon points="1093.8,431.1 1088.8,425.1 1082.9,425.9 1087.4,431.6" fill="#ece264" stroke="#ece264" stroke-width=".5"/>
<path d="M1093.8,431.1L1088.8,425.1M1082.9,425.9L1087.4,431.6" stroke="#1c1a08" stroke-width="0.7" fill="none"/>
<polygon points="1057.3,418.0 1072.1,415.1 1068.2,412.0 1053.5,414.9" fill="#ece264" stroke="#ece264" stroke-width=".5"/>
<path d="M1057.3,418.0L1072.1,415.1M1068.2,412.0L1053.5,414.9" stroke="#1c1a08" stroke-width="0.7" fill="none"/>
<polygon points="1056.8,424.3 1071.5,421.4 1072.1,415.1 1057.3,418.0" fill="#d7c949" stroke="#d7c949" stroke-width=".5"/>
<path d="M1056.8,424.3L1071.5,421.4M1072.1,415.1L1057.3,418.0" stroke="#1c1a08" stroke-width="0.7" fill="none"/>
<polygon points="881.5,513.1 882.7,521.2 882.6,515.4 881.4,507.3" fill="#cbbb39" stroke="#cbbb39" stroke-width=".5"/>
<path d="M881.5,513.1L882.7,521.2M882.6,515.4L881.4,507.3" stroke="#1c1a08" stroke-width="0.7" fill="none"/>
<polygon points="889.7,506.7 889.7,502.4 889.3,480.5 889.2,484.6" fill="#bca824" stroke="#bca824" stroke-width=".5"/>
<path d="M889.7,502.4L889.3,480.5M889.2,484.6L889.7,506.7" stroke="#1c1a08" stroke-width="0.7" fill="none"/>
<polygon points="891.6,442.3 895.4,436.4 894.6,428.7 890.8,434.5" fill="#c6b432" stroke="#c6b432" stroke-width=".5"/>
<path d="M891.6,442.3L895.4,436.4M894.6,428.7L890.8,434.5" stroke="#1c1a08" stroke-width="0.7" fill="none"/>
<polygon points="881.4,507.3 882.6,515.4 890.5,514.1 889.2,506.6" fill="#ece264" stroke="#ece264" stroke-width=".5"/>
<path d="M881.4,507.3L882.6,515.4M890.5,514.1L889.2,506.6" stroke="#1c1a08" stroke-width="0.7" fill="none"/>
<polygon points="888.4,428.0 884.2,434.2 890.8,434.5 894.6,428.7" fill="#ece264" stroke="#ece264" stroke-width=".5"/>
<path d="M888.4,428.0L884.2,434.2M890.8,434.5L894.6,428.7" stroke="#1c1a08" stroke-width="0.7" fill="none"/>
<polygon points="959.1,419.3 947.1,414.3 947.3,420.6 959.3,425.6" fill="#d4c544" stroke="#d4c544" stroke-width=".5"/>
<path d="M959.1,419.3L947.1,414.3M947.3,420.6L959.3,425.6" stroke="#1c1a08" stroke-width="0.7" fill="none"/>
<polygon points="891.9,447.5 894.2,443.8 893.7,420.5 891.4,424.0" fill="#c2b02d" stroke="#c2b02d" stroke-width=".5"/>
<path d="M894.2,443.8L893.7,420.5M891.4,424.0L891.9,447.5" stroke="#1c1a08" stroke-width="0.7" fill="none"/>
<polygon points="964.6,416.7 952.6,411.8 947.1,414.3 959.1,419.3" fill="#ece264" stroke="#ece264" stroke-width=".5"/>
<path d="M964.6,416.7L952.6,411.8M947.1,414.3L959.1,419.3" stroke="#1c1a08" stroke-width="0.7" fill="none"/>
<polygon points="881.3,507.2 889.7,506.7 889.2,484.6 880.6,485.2" fill="#d9cb4b" stroke="#d9cb4b" stroke-width=".5"/>
<path d="M889.7,506.7L889.2,484.6M880.6,485.2L881.3,507.2" stroke="#1c1a08" stroke-width="0.7" fill="none"/>
<polygon points="1021.4,426.1 1033.7,421.2 1034.0,415.0 1021.6,419.7" fill="#d4c544" stroke="#d4c544" stroke-width=".5"/>
<path d="M1021.4,426.1L1033.7,421.2M1034.0,415.0L1021.6,419.7" stroke="#1c1a08" stroke-width="0.7" fill="none"/>
<polygon points="1021.6,419.7 1034.0,415.0 1028.7,412.4 1016.3,417.1" fill="#ece264" stroke="#ece264" stroke-width=".5"/>
<path d="M1021.6,419.7L1034.0,415.0M1028.7,412.4L1016.3,417.1" stroke="#1c1a08" stroke-width="0.7" fill="none"/>
<polygon points="942.4,417.1 927.7,414.0 923.7,417.0 938.5,420.3" fill="#ece264" stroke="#ece264" stroke-width=".5"/>
<path d="M942.4,417.1L927.7,414.0M923.7,417.0L938.5,420.3" stroke="#1c1a08" stroke-width="0.7" fill="none"/>
<polygon points="938.5,420.3 923.7,417.0 924.1,423.3 938.8,426.6" fill="#d7c948" stroke="#d7c948" stroke-width=".5"/>
<path d="M938.5,420.3L923.7,417.0M924.1,423.3L938.8,426.6" stroke="#1c1a08" stroke-width="0.7" fill="none"/>
<polygon points="883.9,446.8 891.9,447.5 891.4,424.0 883.1,423.4" fill="#d9cb4b" stroke="#d9cb4b" stroke-width=".5"/>
<path d="M891.9,447.5L891.4,424.0M883.1,423.4L883.9,446.8" stroke="#1c1a08" stroke-width="0.7" fill="none"/>
<polygon points="1086.7,445.4 1088.8,449.1 1089.3,425.5 1087.2,422.0" fill="#c2af2c" stroke="#c2af2c" stroke-width=".5"/>
<path d="M1088.8,449.1L1089.3,425.5M1087.2,422.0L1086.7,445.4" stroke="#1c1a08" stroke-width="0.7" fill="none"/>
<polygon points="1042.2,421.0 1057.3,418.0 1053.5,414.9 1038.5,417.8" fill="#ece264" stroke="#ece264" stroke-width=".5"/>
<path d="M1042.2,421.0L1057.3,418.0M1053.5,414.9L1038.5,417.8" stroke="#1c1a08" stroke-width="0.7" fill="none"/>
<polygon points="1095.8,525.3 1098.0,517.2 1098.1,511.4 1096.0,519.5" fill="#ccbc3a" stroke="#ccbc3a" stroke-width=".5"/>
<path d="M1095.8,525.3L1098.0,517.2M1098.1,511.4L1096.0,519.5" stroke="#1c1a08" stroke-width="0.7" fill="none"/>
<polygon points="1041.8,427.4 1056.8,424.3 1057.3,418.0 1042.2,421.0" fill="#d7c949" stroke="#d7c949" stroke-width=".5"/>
<path d="M1041.8,427.4L1056.8,424.3M1057.3,418.0L1042.2,421.0" stroke="#1c1a08" stroke-width="0.7" fill="none"/>
<polygon points="1090.1,508.6 1098.5,509.3 1099.2,487.1 1090.6,486.4" fill="#d9cb4b" stroke="#d9cb4b" stroke-width=".5"/>
<path d="M1098.5,509.3L1099.2,487.1M1090.6,486.4L1090.1,508.6" stroke="#1c1a08" stroke-width="0.7" fill="none"/>
<polygon points="1086.6,439.4 1089.7,445.5 1090.5,437.6 1087.4,431.6" fill="#c5b330" stroke="#c5b330" stroke-width=".5"/>
<path d="M1086.6,439.4L1089.7,445.5M1090.5,437.6L1087.4,431.6" stroke="#1c1a08" stroke-width="0.7" fill="none"/>
<polygon points="1088.8,449.1 1096.9,448.6 1097.7,425.1 1089.3,425.5" fill="#d9cb4b" stroke="#d9cb4b" stroke-width=".5"/>
<path d="M1096.9,448.6L1097.7,425.1M1089.3,425.5L1088.8,449.1" stroke="#1c1a08" stroke-width="0.7" fill="none"/>
<polygon points="1096.0,519.5 1098.1,511.4 1090.2,510.4 1088.1,517.8" fill="#ece264" stroke="#ece264" stroke-width=".5"/>
<path d="M1096.0,519.5L1098.1,511.4M1090.2,510.4L1088.1,517.8" stroke="#1c1a08" stroke-width="0.7" fill="none"/>
<polygon points="1097.2,437.5 1093.8,431.1 1087.4,431.6 1090.5,437.6" fill="#ece264" stroke="#ece264" stroke-width=".5"/>
<path d="M1097.2,437.5L1093.8,431.1M1087.4,431.6L1090.5,437.6" stroke="#1c1a08" stroke-width="0.7" fill="none"/>
<polygon points="902.1,421.2 885.5,419.9 883.1,423.4 899.9,424.7" fill="#ece264" stroke="#ece264" stroke-width=".5"/>
<path d="M902.1,421.2L885.5,419.9M883.1,423.4L899.9,424.7M885.5,419.9L883.1,423.4" stroke="#1c1a08" stroke-width="0.7" fill="none"/>
<polygon points="899.9,424.7 883.1,423.4 883.8,429.8 900.4,431.1" fill="#d9cb4b" stroke="#d9cb4b" stroke-width=".5"/>
<path d="M899.9,424.7L883.1,423.4M883.8,429.8L900.4,431.1" stroke="#1c1a08" stroke-width="0.7" fill="none"/>
<polygon points="882.7,521.2 885.9,529.3 885.8,523.4 882.6,515.4" fill="#cebe3d" stroke="#cebe3d" stroke-width=".5"/>
<path d="M882.7,521.2L885.9,529.3M885.8,523.4L882.6,515.4" stroke="#1c1a08" stroke-width="0.7" fill="none"/>
<polygon points="957.4,420.4 942.4,417.1 938.5,420.3 953.6,423.5" fill="#ece264" stroke="#ece264" stroke-width=".5"/>
<path d="M957.4,420.4L942.4,417.1M938.5,420.3L953.6,423.5" stroke="#1c1a08" stroke-width="0.7" fill="none"/>
<polygon points="953.6,423.5 938.5,420.3 938.8,426.6 953.8,429.9" fill="#d7c948" stroke="#d7c948" stroke-width=".5"/>
<path d="M953.6,423.5L938.5,420.3M938.8,426.6L953.8,429.9" stroke="#1c1a08" stroke-width="0.7" fill="none"/>
<polygon points="889.4,448.5 891.6,442.3 890.8,434.5 888.5,440.6" fill="#c3b12e" stroke="#c3b12e" stroke-width=".5"/>
<path d="M889.4,448.5L891.6,442.3M890.8,434.5L888.5,440.6" stroke="#1c1a08" stroke-width="0.7" fill="none"/>
<polygon points="1080.7,426.0 1097.7,425.1 1095.5,421.5 1078.7,422.5" fill="#ece264" stroke="#ece264" stroke-width=".5"/>
<path d="M1080.7,426.0L1097.7,425.1M1095.5,421.5L1078.7,422.5M1097.7,425.1L1095.5,421.5" stroke="#1c1a08" stroke-width="0.7" fill="none"/>
<polygon points="1080.1,432.5 1097.0,431.5 1097.7,425.1 1080.7,426.0" fill="#d9cb4b" stroke="#d9cb4b" stroke-width=".5"/>
<path d="M1080.1,432.5L1097.0,431.5M1097.7,425.1L1080.7,426.0" stroke="#1c1a08" stroke-width="0.7" fill="none"/>
<polygon points="1026.8,424.1 1042.2,421.0 1038.5,417.8 1023.3,420.8" fill="#ece264" stroke="#ece264" stroke-width=".5"/>
<path d="M1026.8,424.1L1042.2,421.0M1038.5,417.8L1023.3,420.8" stroke="#1c1a08" stroke-width="0.7" fill="none"/>
<polygon points="1026.6,430.5 1041.8,427.4 1042.2,421.0 1026.8,424.1" fill="#d7c949" stroke="#d7c949" stroke-width=".5"/>
<path d="M1026.6,430.5L1041.8,427.4M1042.2,421.0L1026.8,424.1" stroke="#1c1a08" stroke-width="0.7" fill="none"/>
<polygon points="882.6,515.4 885.8,523.4 893.6,521.4 890.5,514.1" fill="#ece264" stroke="#ece264" stroke-width=".5"/>
<path d="M882.6,515.4L885.8,523.4M893.6,521.4L890.5,514.1" stroke="#1c1a08" stroke-width="0.7" fill="none"/>
<polygon points="884.2,434.2 881.7,440.7 888.5,440.6 890.8,434.5" fill="#ece264" stroke="#ece264" stroke-width=".5"/>
<path d="M884.2,434.2L881.7,440.7M888.5,440.6L890.8,434.5" stroke="#1c1a08" stroke-width="0.7" fill="none"/>
<polygon points="889.2,484.6 889.3,480.5 888.7,457.5 888.6,461.5" fill="#bca824" stroke="#bca824" stroke-width=".5"/>
<path d="M889.3,480.5L888.7,457.5M888.6,461.5L889.2,484.6" stroke="#1c1a08" stroke-width="0.7" fill="none"/>
<polygon points="918.8,422.4 902.1,421.2 899.9,424.7 916.7,425.9" fill="#ece264" stroke="#ece264" stroke-width=".5"/>
<path d="M918.8,422.4L902.1,421.2M899.9,424.7L916.7,425.9" stroke="#1c1a08" stroke-width="0.7" fill="none"/>
<polygon points="916.7,425.9 899.9,424.7 900.4,431.1 917.2,432.3" fill="#d9cb4b" stroke="#d9cb4b" stroke-width=".5"/>
<path d="M916.7,425.9L899.9,424.7M900.4,431.1L917.2,432.3" stroke="#1c1a08" stroke-width="0.7" fill="none"/>
<polygon points="1063.7,427.0 1080.7,426.0 1078.7,422.5 1061.8,423.4" fill="#ece264" stroke="#ece264" stroke-width=".5"/>
<path d="M1063.7,427.0L1080.7,426.0M1078.7,422.5L1061.8,423.4" stroke="#1c1a08" stroke-width="0.7" fill="none"/>
<polygon points="880.6,485.2 889.2,484.6 888.6,461.5 879.9,462.0" fill="#d9cb4b" stroke="#d9cb4b" stroke-width=".5"/>
<path d="M889.2,484.6L888.6,461.5M879.9,462.0L880.6,485.2" stroke="#1c1a08" stroke-width="0.7" fill="none"/>
<polygon points="1063.2,433.5 1080.1,432.5 1080.7,426.0 1063.7,427.0" fill="#d9cb4b" stroke="#d9cb4b" stroke-width=".5"/>
<path d="M1063.2,433.5L1080.1,432.5M1080.7,426.0L1063.7,427.0" stroke="#1c1a08" stroke-width="0.7" fill="none"/>
<polygon points="1091.6,533.4 1095.8,525.3 1096.0,519.5 1091.8,527.4" fill="#cfc03e" stroke="#cfc03e" stroke-width=".5"/>
<path d="M1091.6,533.4L1095.8,525.3M1096.0,519.5L1091.8,527.4" stroke="#1c1a08" stroke-width="0.7" fill="none"/>
<polygon points="1089.7,445.5 1091.1,451.8 1091.9,443.8 1090.5,437.6" fill="#c2af2c" stroke="#c2af2c" stroke-width=".5"/>
<path d="M1089.7,445.5L1091.1,451.8M1091.9,443.8L1090.5,437.6" stroke="#1c1a08" stroke-width="0.7" fill="none"/>
<polygon points="1091.8,527.4 1096.0,519.5 1088.1,517.8 1084.0,525.2" fill="#ece264" stroke="#ece264" stroke-width=".5"/>
<path d="M1091.8,527.4L1096.0,519.5M1088.1,517.8L1084.0,525.2" stroke="#1c1a08" stroke-width="0.7" fill="none"/>
<polygon points="935.6,423.6 918.8,422.4 916.7,425.9 933.7,427.1" fill="#ece264" stroke="#ece264" stroke-width=".5"/>
<path d="M935.6,423.6L918.8,422.4M916.7,425.9L933.7,427.1" stroke="#1c1a08" stroke-width="0.7" fill="none"/>
<polygon points="1098.9,444.1 1097.2,437.5 1090.5,437.6 1091.9,443.8" fill="#ece264" stroke="#ece264" stroke-width=".5"/>
<path d="M1098.9,444.1L1097.2,437.5M1090.5,437.6L1091.9,443.8" stroke="#1c1a08" stroke-width="0.7" fill="none"/>
<polygon points="933.7,427.1 916.7,425.9 917.2,432.3 934.1,433.6" fill="#d9cb4b" stroke="#d9cb4b" stroke-width=".5"/>
<path d="M933.7,427.1L916.7,425.9M917.2,432.3L934.1,433.6" stroke="#1c1a08" stroke-width="0.7" fill="none"/>
<polygon points="1090.6,486.4 1099.2,487.1 1100.0,463.9 1091.2,463.2" fill="#d9cb4b" stroke="#d9cb4b" stroke-width=".5"/>
<path d="M1099.2,487.1L1100.0,463.9M1091.2,463.2L1090.6,486.4" stroke="#1c1a08" stroke-width="0.7" fill="none"/>
<polygon points="1046.5,428.0 1063.7,427.0 1061.8,423.4 1044.9,424.4" fill="#ece264" stroke="#ece264" stroke-width=".5"/>
<path d="M1046.5,428.0L1063.7,427.0M1061.8,423.4L1044.9,424.4" stroke="#1c1a08" stroke-width="0.7" fill="none"/>
<polygon points="1046.1,434.5 1063.2,433.5 1063.7,427.0 1046.5,428.0" fill="#d9cb4b" stroke="#d9cb4b" stroke-width=".5"/>
<path d="M1046.1,434.5L1063.2,433.5M1063.7,427.0L1046.5,428.0" stroke="#1c1a08" stroke-width="0.7" fill="none"/>
<polygon points="952.6,424.8 935.6,423.6 933.7,427.1 950.9,428.4" fill="#ece264" stroke="#ece264" stroke-width=".5"/>
<path d="M952.6,424.8L935.6,423.6M933.7,427.1L950.9,428.4" stroke="#1c1a08" stroke-width="0.7" fill="none"/>
<polygon points="888.8,454.9 889.4,448.5 888.5,440.6 888.0,446.9" fill="#c0ad2a" stroke="#c0ad2a" stroke-width=".5"/>
<path d="M888.8,454.9L889.4,448.5M888.5,440.6L888.0,446.9" stroke="#1c1a08" stroke-width="0.7" fill="none"/>
<polygon points="950.9,428.4 933.7,427.1 934.1,433.6 951.1,434.9" fill="#d9cb4b" stroke="#d9cb4b" stroke-width=".5"/>
<path d="M950.9,428.4L933.7,427.1M934.1,433.6L951.1,434.9" stroke="#1c1a08" stroke-width="0.7" fill="none"/>
<polygon points="885.9,529.3 891.2,537.3 891.0,531.2 885.8,523.4" fill="#d1c140" stroke="#d1c140" stroke-width=".5"/>
<path d="M885.9,529.3L891.2,537.3M891.0,531.2L885.8,523.4" stroke="#1c1a08" stroke-width="0.7" fill="none"/>
<polygon points="1029.2,429.0 1046.5,428.0 1044.9,424.4 1027.8,425.4" fill="#ece264" stroke="#ece264" stroke-width=".5"/>
<path d="M1029.2,429.0L1046.5,428.0M1044.9,424.4L1027.8,425.4" stroke="#1c1a08" stroke-width="0.7" fill="none"/>
<polygon points="885.8,523.4 891.0,531.2 898.6,528.7 893.6,521.4" fill="#ece264" stroke="#ece264" stroke-width=".5"/>
<path d="M885.8,523.4L891.0,531.2M898.6,528.7L893.6,521.4" stroke="#1c1a08" stroke-width="0.7" fill="none"/>
<polygon points="1028.9,435.5 1046.1,434.5 1046.5,428.0 1029.2,429.0" fill="#d9cb4b" stroke="#d9cb4b" stroke-width=".5"/>
<path d="M1028.9,435.5L1046.1,434.5M1046.5,428.0L1029.2,429.0" stroke="#1c1a08" stroke-width="0.7" fill="none"/>
<polygon points="881.7,440.7 881.0,447.4 888.0,446.9 888.5,440.6" fill="#ece264" stroke="#ece264" stroke-width=".5"/>
<path d="M881.7,440.7L881.0,447.4M888.0,446.9L888.5,440.6" stroke="#1c1a08" stroke-width="0.7" fill="none"/>
<polygon points="884.3,520.4 886.4,524.7 885.7,501.8 883.5,497.7" fill="#cfbf3e" stroke="#cfbf3e" stroke-width=".5"/>
<path d="M886.4,524.7L885.7,501.8M883.5,497.7L884.3,520.4" stroke="#1c1a08" stroke-width="0.7" fill="none"/>
<polygon points="888.6,461.5 888.7,457.5 888.2,433.4 888.1,437.2" fill="#bca824" stroke="#bca824" stroke-width=".5"/>
<path d="M888.7,457.5L888.2,433.4M888.1,437.2L888.6,461.5" stroke="#1c1a08" stroke-width="0.7" fill="none"/>
<polygon points="886.4,524.7 894.8,522.7 894.3,499.9 885.7,501.8" fill="#d7c949" stroke="#d7c949" stroke-width=".5"/>
<path d="M894.8,522.7L894.3,499.9M885.7,501.8L886.4,524.7" stroke="#1c1a08" stroke-width="0.7" fill="none"/>
<polygon points="1092.3,526.8 1094.7,522.5 1095.5,499.6 1093.0,503.8" fill="#d0c03f" stroke="#d0c03f" stroke-width=".5"/>
<path d="M1094.7,522.5L1095.5,499.6M1093.0,503.8L1092.3,526.8" stroke="#1c1a08" stroke-width="0.7" fill="none"/>
<polygon points="1085.3,541.2 1091.6,533.4 1091.8,527.4 1085.5,535.1" fill="#d2c342" stroke="#d2c342" stroke-width=".5"/>
<path d="M1085.3,541.2L1091.6,533.4M1091.8,527.4L1085.5,535.1" stroke="#1c1a08" stroke-width="0.7" fill="none"/>
<polygon points="1091.1,451.8 1090.7,458.3 1091.6,450.2 1091.9,443.8" fill="#bfac28" stroke="#bfac28" stroke-width=".5"/>
<path d="M1091.1,451.8L1090.7,458.3M1091.6,450.2L1091.9,443.8" stroke="#1c1a08" stroke-width="0.7" fill="none"/>
<polygon points="1085.5,535.1 1091.8,527.4 1084.0,525.2 1078.1,532.2" fill="#ece264" stroke="#ece264" stroke-width=".5"/>
<path d="M1085.5,535.1L1091.8,527.4M1084.0,525.2L1078.1,532.2" stroke="#1c1a08" stroke-width="0.7" fill="none"/>
<polygon points="879.9,462.0 888.6,461.5 888.1,437.2 879.1,437.7" fill="#d9cb4b" stroke="#d9cb4b" stroke-width=".5"/>
<path d="M888.6,461.5L888.1,437.2M879.1,437.7L879.9,462.0" stroke="#1c1a08" stroke-width="0.7" fill="none"/>
<polygon points="950.7,436.4 950.9,438.8 950.7,432.3 950.5,430.0" fill="#c5b330" stroke="#c5b330" stroke-width=".5"/>
<path d="M950.7,436.4L950.9,438.8M950.7,432.3L950.5,430.0" stroke="#1c1a08" stroke-width="0.7" fill="none"/>
<polygon points="1083.9,524.6 1092.3,526.8 1093.0,503.8 1084.4,501.6" fill="#d7c948" stroke="#d7c948" stroke-width=".5"/>
<path d="M1092.3,526.8L1093.0,503.8M1084.4,501.6L1083.9,524.6" stroke="#1c1a08" stroke-width="0.7" fill="none"/>
<polygon points="1098.7,450.9 1098.9,444.1 1091.9,443.8 1091.6,450.2" fill="#ece264" stroke="#ece264" stroke-width=".5"/>
<path d="M1098.7,450.9L1098.9,444.1M1091.9,443.8L1091.6,450.2" stroke="#1c1a08" stroke-width="0.7" fill="none"/>
<polygon points="1028.6,440.1 1029.2,437.7 1029.5,431.2 1028.9,433.5" fill="#c6b432" stroke="#c6b432" stroke-width=".5"/>
<path d="M1028.6,440.1L1029.2,437.7M1029.5,431.2L1028.9,433.5" stroke="#1c1a08" stroke-width="0.7" fill="none"/>
<polygon points="1091.2,463.2 1100.0,463.9 1100.8,439.4 1091.7,438.8" fill="#d9cb4b" stroke="#d9cb4b" stroke-width=".5"/>
<path d="M1100.0,463.9L1100.8,439.4M1091.7,438.8L1091.2,463.2" stroke="#1c1a08" stroke-width="0.7" fill="none"/>
<polygon points="897.3,432.8 879.3,433.9 879.1,437.7 897.3,436.6" fill="#ece264" stroke="#ece264" stroke-width=".5"/>
<path d="M897.3,432.8L879.3,433.9M879.1,437.7L897.3,436.6M879.3,433.9L879.1,437.7" stroke="#1c1a08" stroke-width="0.7" fill="none"/>
<polygon points="891.2,537.3 898.5,544.8 898.3,538.7 891.0,531.2" fill="#d3c443" stroke="#d3c443" stroke-width=".5"/>
<path d="M891.2,537.3L898.5,544.8M898.3,538.7L891.0,531.2" stroke="#1c1a08" stroke-width="0.7" fill="none"/>
<polygon points="950.6,429.8 933.0,430.8 933.4,434.5 951.2,433.5" fill="#ece264" stroke="#ece264" stroke-width=".5"/>
<path d="M950.6,429.8L933.0,430.8M933.4,434.5L951.2,433.5" stroke="#1c1a08" stroke-width="0.7" fill="none"/>
<polygon points="897.3,436.6 879.1,437.7 879.8,444.2 897.9,443.2" fill="#d9cb4b" stroke="#d9cb4b" stroke-width=".5"/>
<path d="M897.3,436.6L879.1,437.7M879.8,444.2L897.9,443.2" stroke="#1c1a08" stroke-width="0.7" fill="none"/>
<polygon points="950.9,438.8 951.9,441.2 951.6,434.7 950.7,432.3" fill="#c8b634" stroke="#c8b634" stroke-width=".5"/>
<path d="M950.9,438.8L951.9,441.2M951.6,434.7L950.7,432.3" stroke="#1c1a08" stroke-width="0.7" fill="none"/>
<polygon points="915.2,431.8 897.3,432.8 897.3,436.6 915.4,435.6" fill="#ece264" stroke="#ece264" stroke-width=".5"/>
<path d="M915.2,431.8L897.3,432.8M897.3,436.6L915.4,435.6" stroke="#1c1a08" stroke-width="0.7" fill="none"/>
<polygon points="881.2,455.5 882.4,462.5 882.1,454.3 881.0,447.4" fill="#cbbb39" stroke="#cbbb39" stroke-width=".5"/>
<path d="M881.2,455.5L882.4,462.5M882.1,454.3L881.0,447.4" stroke="#1c1a08" stroke-width="0.7" fill="none"/>
<polygon points="933.0,430.8 915.2,431.8 915.4,435.6 933.4,434.5" fill="#ece264" stroke="#ece264" stroke-width=".5"/>
<path d="M933.0,430.8L915.2,431.8M915.4,435.6L933.4,434.5" stroke="#1c1a08" stroke-width="0.7" fill="none"/>
<polygon points="891.0,531.2 898.3,538.7 905.4,535.5 898.6,528.7" fill="#ece264" stroke="#ece264" stroke-width=".5"/>
<path d="M891.0,531.2L898.3,538.7M905.4,535.5L898.6,528.7" stroke="#1c1a08" stroke-width="0.7" fill="none"/>
<polygon points="951.2,433.5 933.4,434.5 933.7,441.1 951.5,440.0" fill="#d9cb4b" stroke="#d9cb4b" stroke-width=".5"/>
<path d="M951.2,433.5L933.4,434.5M933.7,441.1L951.5,440.0" stroke="#1c1a08" stroke-width="0.7" fill="none"/>
<polygon points="915.4,435.6 897.3,436.6 897.9,443.2 915.9,442.1" fill="#d9cb4b" stroke="#d9cb4b" stroke-width=".5"/>
<path d="M915.4,435.6L897.3,436.6M897.9,443.2L915.9,442.1" stroke="#1c1a08" stroke-width="0.7" fill="none"/>
<polygon points="933.4,434.5 915.4,435.6 915.9,442.1 933.7,441.1" fill="#d9cb4b" stroke="#d9cb4b" stroke-width=".5"/>
<path d="M933.4,434.5L915.4,435.6M915.9,442.1L933.7,441.1" stroke="#1c1a08" stroke-width="0.7" fill="none"/>
<polygon points="1028.5,434.1 1046.3,435.4 1047.0,431.7 1029.3,430.4" fill="#ece264" stroke="#ece264" stroke-width=".5"/>
<path d="M1028.5,434.1L1046.3,435.4M1047.0,431.7L1029.3,430.4" stroke="#1c1a08" stroke-width="0.7" fill="none"/>
<polygon points="1028.2,440.6 1046.0,442.0 1046.3,435.4 1028.5,434.1" fill="#d9cb4b" stroke="#d9cb4b" stroke-width=".5"/>
<path d="M1028.2,440.6L1046.0,442.0M1046.3,435.4L1028.5,434.1" stroke="#1c1a08" stroke-width="0.7" fill="none"/>
<polygon points="1046.3,435.4 1064.3,436.7 1064.8,433.0 1047.0,431.7" fill="#ece264" stroke="#ece264" stroke-width=".5"/>
<path d="M1046.3,435.4L1064.3,436.7M1064.8,433.0L1047.0,431.7" stroke="#1c1a08" stroke-width="0.7" fill="none"/>
<polygon points="1082.5,438.1 1100.8,439.4 1100.8,435.6 1082.8,434.3" fill="#ece264" stroke="#ece264" stroke-width=".5"/>
<path d="M1082.5,438.1L1100.8,439.4M1100.8,435.6L1082.8,434.3M1100.8,439.4L1100.8,435.6" stroke="#1c1a08" stroke-width="0.7" fill="none"/>
<polygon points="1027.4,442.4 1028.6,440.1 1028.9,433.5 1027.7,435.8" fill="#c9b836" stroke="#c9b836" stroke-width=".5"/>
<path d="M1027.4,442.4L1028.6,440.1M1028.9,433.5L1027.7,435.8" stroke="#1c1a08" stroke-width="0.7" fill="none"/>
<polygon points="881.0,447.4 882.1,454.3 889.2,453.3 888.0,446.9" fill="#ece264" stroke="#ece264" stroke-width=".5"/>
<path d="M881.0,447.4L882.1,454.3M889.2,453.3L888.0,446.9" stroke="#1c1a08" stroke-width="0.7" fill="none"/>
<polygon points="1064.3,436.7 1082.5,438.1 1082.8,434.3 1064.8,433.0" fill="#ece264" stroke="#ece264" stroke-width=".5"/>
<path d="M1064.3,436.7L1082.5,438.1M1082.8,434.3L1064.8,433.0" stroke="#1c1a08" stroke-width="0.7" fill="none"/>
<polygon points="1046.0,442.0 1063.8,443.3 1064.3,436.7 1046.3,435.4" fill="#d9cb4b" stroke="#d9cb4b" stroke-width=".5"/>
<path d="M1046.0,442.0L1063.8,443.3M1064.3,436.7L1046.3,435.4" stroke="#1c1a08" stroke-width="0.7" fill="none"/>
<polygon points="1081.9,444.7 1100.0,446.0 1100.8,439.4 1082.5,438.1" fill="#d9cb4b" stroke="#d9cb4b" stroke-width=".5"/>
<path d="M1081.9,444.7L1100.0,446.0M1100.8,439.4L1082.5,438.1" stroke="#1c1a08" stroke-width="0.7" fill="none"/>
<polygon points="1063.8,443.3 1081.9,444.7 1082.5,438.1 1064.3,436.7" fill="#d9cb4b" stroke="#d9cb4b" stroke-width=".5"/>
<path d="M1063.8,443.3L1081.9,444.7M1082.5,438.1L1064.3,436.7" stroke="#1c1a08" stroke-width="0.7" fill="none"/>
<polygon points="951.9,441.2 953.4,443.5 953.2,436.9 951.6,434.7" fill="#cbba38" stroke="#cbba38" stroke-width=".5"/>
<path d="M951.9,441.2L953.4,443.5M953.2,436.9L951.6,434.7" stroke="#1c1a08" stroke-width="0.7" fill="none"/>
<polygon points="1077.0,548.5 1085.3,541.2 1085.5,535.1 1077.2,542.4" fill="#d4c645" stroke="#d4c645" stroke-width=".5"/>
<path d="M1077.0,548.5L1085.3,541.2M1085.5,535.1L1077.2,542.4" stroke="#1c1a08" stroke-width="0.7" fill="none"/>
<polygon points="883.5,497.7 885.7,501.8 885.0,477.8 882.8,473.8" fill="#cfbf3e" stroke="#cfbf3e" stroke-width=".5"/>
<path d="M885.7,501.8L885.0,477.8M882.8,473.8L883.5,497.7" stroke="#1c1a08" stroke-width="0.7" fill="none"/>
<polygon points="1077.2,542.4 1085.5,535.1 1078.1,532.2 1070.3,538.9" fill="#ece264" stroke="#ece264" stroke-width=".5"/>
<path d="M1077.2,542.4L1085.5,535.1M1078.1,532.2L1070.3,538.9" stroke="#1c1a08" stroke-width="0.7" fill="none"/>
<polygon points="1096.2,466.1 1098.4,459.1 1098.7,450.9 1096.5,457.8" fill="#ccbc3a" stroke="#ccbc3a" stroke-width=".5"/>
<path d="M1096.2,466.1L1098.4,459.1M1098.7,450.9L1096.5,457.8" stroke="#1c1a08" stroke-width="0.7" fill="none"/>
<polygon points="1025.5,444.7 1027.4,442.4 1027.7,435.8 1025.7,438.1" fill="#ccbb39" stroke="#ccbb39" stroke-width=".5"/>
<path d="M1025.5,444.7L1027.4,442.4M1027.7,435.8L1025.7,438.1" stroke="#1c1a08" stroke-width="0.7" fill="none"/>
<polygon points="885.7,501.8 894.3,499.9 893.8,475.9 885.0,477.8" fill="#d7c949" stroke="#d7c949" stroke-width=".5"/>
<path d="M894.3,499.9L893.8,475.9M885.0,477.8L885.7,501.8" stroke="#1c1a08" stroke-width="0.7" fill="none"/>
<polygon points="1093.0,503.8 1095.5,499.6 1096.3,475.6 1093.7,479.6" fill="#d0c03f" stroke="#d0c03f" stroke-width=".5"/>
<path d="M1095.5,499.6L1096.3,475.6M1093.7,479.6L1093.0,503.8" stroke="#1c1a08" stroke-width="0.7" fill="none"/>
<polygon points="1096.5,457.8 1098.7,450.9 1091.6,450.2 1089.4,456.6" fill="#ece264" stroke="#ece264" stroke-width=".5"/>
<path d="M1096.5,457.8L1098.7,450.9M1091.6,450.2L1089.4,456.6" stroke="#1c1a08" stroke-width="0.7" fill="none"/>
<polygon points="953.4,443.5 955.7,445.7 955.5,439.1 953.2,436.9" fill="#cdbd3b" stroke="#cdbd3b" stroke-width=".5"/>
<path d="M953.4,443.5L955.7,445.7M955.5,439.1L953.2,436.9" stroke="#1c1a08" stroke-width="0.7" fill="none"/>
<polygon points="898.5,544.8 907.8,551.9 907.6,545.7 898.3,538.7" fill="#d6c747" stroke="#d6c747" stroke-width=".5"/>
<path d="M898.5,544.8L907.8,551.9M907.6,545.7L898.3,538.7" stroke="#1c1a08" stroke-width="0.7" fill="none"/>
<polygon points="1084.4,501.6 1093.0,503.8 1093.7,479.6 1085.0,477.6" fill="#d7c948" stroke="#d7c948" stroke-width=".5"/>
<path d="M1093.0,503.8L1093.7,479.6M1085.0,477.6L1084.4,501.6" stroke="#1c1a08" stroke-width="0.7" fill="none"/>
<polygon points="898.3,538.7 907.6,545.7 914.1,541.9 905.4,535.5" fill="#ece264" stroke="#ece264" stroke-width=".5"/>
<path d="M898.3,538.7L907.6,545.7M914.1,541.9L905.4,535.5" stroke="#1c1a08" stroke-width="0.7" fill="none"/>
<polygon points="1022.9,446.8 1025.5,444.7 1025.7,438.1 1023.1,440.2" fill="#cebe3d" stroke="#cebe3d" stroke-width=".5"/>
<path d="M1022.9,446.8L1025.5,444.7M1025.7,438.1L1023.1,440.2" stroke="#1c1a08" stroke-width="0.7" fill="none"/>
<polygon points="951.9,434.9 935.0,438.2 937.8,441.8 954.9,438.4" fill="#ece264" stroke="#ece264" stroke-width=".5"/>
<path d="M951.9,434.9L935.0,438.2M937.8,441.8L954.9,438.4" stroke="#1c1a08" stroke-width="0.7" fill="none"/>
<polygon points="954.9,438.4 937.8,441.8 938.1,448.5 955.1,445.0" fill="#d7c949" stroke="#d7c949" stroke-width=".5"/>
<path d="M954.9,438.4L937.8,441.8M938.1,448.5L955.1,445.0" stroke="#1c1a08" stroke-width="0.7" fill="none"/>
<polygon points="882.4,462.5 885.6,469.5 885.3,461.2 882.1,454.3" fill="#cebe3d" stroke="#cebe3d" stroke-width=".5"/>
<path d="M882.4,462.5L885.6,469.5M885.3,461.2L882.1,454.3" stroke="#1c1a08" stroke-width="0.7" fill="none"/>
<polygon points="955.7,445.7 958.6,447.8 958.4,441.2 955.5,439.1" fill="#d0c03f" stroke="#d0c03f" stroke-width=".5"/>
<path d="M955.7,445.7L958.6,447.8M958.4,441.2L955.5,439.1" stroke="#1c1a08" stroke-width="0.7" fill="none"/>
<polygon points="1024.5,439.0 1041.4,442.7 1044.5,439.1 1027.7,435.5" fill="#ece264" stroke="#ece264" stroke-width=".5"/>
<path d="M1024.5,439.0L1041.4,442.7M1044.5,439.1L1027.7,435.5" stroke="#1c1a08" stroke-width="0.7" fill="none"/>
<polygon points="1024.3,445.6 1041.1,449.3 1041.4,442.7 1024.5,439.0" fill="#d7c948" stroke="#d7c948" stroke-width=".5"/>
<path d="M1024.3,445.6L1041.1,449.3M1041.4,442.7L1024.5,439.0" stroke="#1c1a08" stroke-width="0.7" fill="none"/>
<polygon points="882.1,454.3 885.3,461.2 892.3,459.7 889.2,453.3" fill="#ece264" stroke="#ece264" stroke-width=".5"/>
<path d="M882.1,454.3L885.3,461.2M892.3,459.7L889.2,453.3" stroke="#1c1a08" stroke-width="0.7" fill="none"/>
<polygon points="1019.7,448.8 1022.9,446.8 1023.1,440.2 1019.9,442.1" fill="#d1c140" stroke="#d1c140" stroke-width=".5"/>
<path d="M1019.7,448.8L1022.9,446.8M1023.1,440.2L1019.9,442.1" stroke="#1c1a08" stroke-width="0.7" fill="none"/>
<polygon points="1066.8,555.2 1077.0,548.5 1077.2,542.4 1066.9,549.0" fill="#d7c848" stroke="#d7c848" stroke-width=".5"/>
<path d="M1066.8,555.2L1077.0,548.5M1077.2,542.4L1066.9,549.0" stroke="#1c1a08" stroke-width="0.7" fill="none"/>
<polygon points="1066.9,549.0 1077.2,542.4 1070.3,538.9 1060.8,544.9" fill="#ece264" stroke="#ece264" stroke-width=".5"/>
<path d="M1066.9,549.0L1077.2,542.4M1070.3,538.9L1060.8,544.9" stroke="#1c1a08" stroke-width="0.7" fill="none"/>
<polygon points="896.7,537.4 901.3,541.3 900.7,517.6 896.0,513.8" fill="#d5c645" stroke="#d5c645" stroke-width=".5"/>
<path d="M901.3,541.3L900.7,517.6M896.0,513.8L896.7,537.4" stroke="#1c1a08" stroke-width="0.7" fill="none"/>
<polygon points="958.6,447.8 962.1,449.6 961.9,443.0 958.4,441.2" fill="#d2c342" stroke="#d2c342" stroke-width=".5"/>
<path d="M958.6,447.8L962.1,449.6M961.9,443.0L958.4,441.2" stroke="#1c1a08" stroke-width="0.7" fill="none"/>
<polygon points="935.0,438.2 917.7,441.6 920.3,445.3 937.8,441.8" fill="#ece264" stroke="#ece264" stroke-width=".5"/>
<path d="M935.0,438.2L917.7,441.6M920.3,445.3L937.8,441.8" stroke="#1c1a08" stroke-width="0.7" fill="none"/>
<polygon points="901.3,541.3 908.8,537.8 908.4,514.2 900.7,517.6" fill="#d4c544" stroke="#d4c544" stroke-width=".5"/>
<path d="M908.8,537.8L908.4,514.2M900.7,517.6L901.3,541.3" stroke="#1c1a08" stroke-width="0.7" fill="none"/>
<polygon points="937.8,441.8 920.3,445.3 920.8,452.0 938.1,448.5" fill="#d7c949" stroke="#d7c949" stroke-width=".5"/>
<path d="M937.8,441.8L920.3,445.3M920.8,452.0L938.1,448.5" stroke="#1c1a08" stroke-width="0.7" fill="none"/>
<polygon points="1016.0,450.5 1019.7,448.8 1019.9,442.1 1016.1,443.9" fill="#d3c443" stroke="#d3c443" stroke-width=".5"/>
<path d="M1016.0,450.5L1019.7,448.8M1019.9,442.1L1016.1,443.9" stroke="#1c1a08" stroke-width="0.7" fill="none"/>
<polygon points="1076.3,543.1 1081.2,539.3 1081.9,515.6 1076.9,519.3" fill="#d5c746" stroke="#d5c746" stroke-width=".5"/>
<path d="M1081.2,539.3L1081.9,515.6M1076.9,519.3L1076.3,543.1" stroke="#1c1a08" stroke-width="0.7" fill="none"/>
<polygon points="1041.4,442.7 1058.7,446.4 1061.6,442.8 1044.5,439.1" fill="#ece264" stroke="#ece264" stroke-width=".5"/>
<path d="M1041.4,442.7L1058.7,446.4M1061.6,442.8L1044.5,439.1" stroke="#1c1a08" stroke-width="0.7" fill="none"/>
<polygon points="1092.0,473.1 1096.2,466.1 1096.5,457.8 1092.3,464.6" fill="#cfc03e" stroke="#cfc03e" stroke-width=".5"/>
<path d="M1092.0,473.1L1096.2,466.1M1096.5,457.8L1092.3,464.6" stroke="#1c1a08" stroke-width="0.7" fill="none"/>
<polygon points="1041.1,449.3 1058.2,453.1 1058.7,446.4 1041.4,442.7" fill="#d7c948" stroke="#d7c948" stroke-width=".5"/>
<path d="M1041.1,449.3L1058.2,453.1M1058.7,446.4L1041.4,442.7" stroke="#1c1a08" stroke-width="0.7" fill="none"/>
<polygon points="882.8,473.8 885.0,477.8 884.3,452.5 882.0,448.6" fill="#cfbf3e" stroke="#cfbf3e" stroke-width=".5"/>
<path d="M885.0,477.8L884.3,452.5M882.0,448.6L882.8,473.8" stroke="#1c1a08" stroke-width="0.7" fill="none"/>
<polygon points="1068.9,539.4 1076.3,543.1 1076.9,519.3 1069.4,515.7" fill="#d4c544" stroke="#d4c544" stroke-width=".5"/>
<path d="M1076.3,543.1L1076.9,519.3M1069.4,515.7L1068.9,539.4" stroke="#1c1a08" stroke-width="0.7" fill="none"/>
<polygon points="962.1,449.6 966.1,451.3 965.9,444.6 961.9,443.0" fill="#d4c545" stroke="#d4c545" stroke-width=".5"/>
<path d="M962.1,449.6L966.1,451.3M965.9,444.6L961.9,443.0" stroke="#1c1a08" stroke-width="0.7" fill="none"/>
<polygon points="907.6,545.7 918.8,551.9 924.5,547.6 914.1,541.9" fill="#ece264" stroke="#ece264" stroke-width=".5"/>
<path d="M907.6,545.7L918.8,551.9M924.5,547.6L914.1,541.9" stroke="#1c1a08" stroke-width="0.7" fill="none"/>
<polygon points="907.8,551.9 919.0,558.2 918.8,551.9 907.6,545.7" fill="#d8ca49" stroke="#d8ca49" stroke-width=".5"/>
<path d="M907.8,551.9L919.0,558.2M918.8,551.9L907.6,545.7" stroke="#1c1a08" stroke-width="0.7" fill="none"/>
<polygon points="1092.3,464.6 1096.5,457.8 1089.4,456.6 1085.4,462.9" fill="#ece264" stroke="#ece264" stroke-width=".5"/>
<path d="M1092.3,464.6L1096.5,457.8M1089.4,456.6L1085.4,462.9" stroke="#1c1a08" stroke-width="0.7" fill="none"/>
<polygon points="917.7,441.6 900.0,445.1 902.5,448.9 920.3,445.3" fill="#ece264" stroke="#ece264" stroke-width=".5"/>
<path d="M917.7,441.6L900.0,445.1M902.5,448.9L920.3,445.3" stroke="#1c1a08" stroke-width="0.7" fill="none"/>
<polygon points="1011.7,452.0 1016.0,450.5 1016.1,443.9 1011.8,445.4" fill="#d5c646" stroke="#d5c646" stroke-width=".5"/>
<path d="M1011.7,452.0L1016.0,450.5M1016.1,443.9L1011.8,445.4" stroke="#1c1a08" stroke-width="0.7" fill="none"/>
<polygon points="920.3,445.3 902.5,448.9 903.1,455.6 920.8,452.0" fill="#d7c949" stroke="#d7c949" stroke-width=".5"/>
<path d="M920.3,445.3L902.5,448.9M903.1,455.6L920.8,452.0" stroke="#1c1a08" stroke-width="0.7" fill="none"/>
<polygon points="885.0,477.8 893.8,475.9 893.3,450.7 884.3,452.5" fill="#d7c949" stroke="#d7c949" stroke-width=".5"/>
<path d="M893.8,475.9L893.3,450.7M884.3,452.5L885.0,477.8" stroke="#1c1a08" stroke-width="0.7" fill="none"/>
<polygon points="1093.7,479.6 1096.3,475.6 1097.1,450.4 1094.5,454.2" fill="#d0c03f" stroke="#d0c03f" stroke-width=".5"/>
<path d="M1096.3,475.6L1097.1,450.4M1094.5,454.2L1093.7,479.6" stroke="#1c1a08" stroke-width="0.7" fill="none"/>
<polygon points="961.6,442.7 946.8,448.4 947.1,455.1 961.7,449.4" fill="#d4c544" stroke="#d4c544" stroke-width=".5"/>
<path d="M961.6,442.7L946.8,448.4M947.1,455.1L961.7,449.4" stroke="#1c1a08" stroke-width="0.7" fill="none"/>
<polygon points="966.1,451.3 970.6,452.7 970.4,446.0 965.9,444.6" fill="#d6c747" stroke="#d6c747" stroke-width=".5"/>
<path d="M966.1,451.3L970.6,452.7M970.4,446.0L965.9,444.6" stroke="#1c1a08" stroke-width="0.7" fill="none"/>
<polygon points="956.4,439.7 941.7,445.2 946.8,448.4 961.6,442.7" fill="#ece264" stroke="#ece264" stroke-width=".5"/>
<path d="M956.4,439.7L941.7,445.2M946.8,448.4L961.6,442.7" stroke="#1c1a08" stroke-width="0.7" fill="none"/>
<polygon points="1058.7,446.4 1076.4,450.3 1079.2,446.5 1061.6,442.8" fill="#ece264" stroke="#ece264" stroke-width=".5"/>
<path d="M1058.7,446.4L1076.4,450.3M1079.2,446.5L1061.6,442.8" stroke="#1c1a08" stroke-width="0.7" fill="none"/>
<polygon points="1017.3,449.8 1031.6,455.8 1031.9,449.1 1017.5,443.2" fill="#d4c544" stroke="#d4c544" stroke-width=".5"/>
<path d="M1017.3,449.8L1031.6,455.8M1031.9,449.1L1017.5,443.2" stroke="#1c1a08" stroke-width="0.7" fill="none"/>
<polygon points="1058.2,453.1 1075.8,457.0 1076.4,450.3 1058.7,446.4" fill="#d7c948" stroke="#d7c948" stroke-width=".5"/>
<path d="M1058.2,453.1L1075.8,457.0M1076.4,450.3L1058.7,446.4" stroke="#1c1a08" stroke-width="0.7" fill="none"/>
<polygon points="1017.5,443.2 1031.9,449.1 1037.2,446.0 1022.9,440.2" fill="#ece264" stroke="#ece264" stroke-width=".5"/>
<path d="M1017.5,443.2L1031.9,449.1M1037.2,446.0L1022.9,440.2" stroke="#1c1a08" stroke-width="0.7" fill="none"/>
<polygon points="1007.0,453.3 1011.7,452.0 1011.8,445.4 1007.1,446.6" fill="#d7c848" stroke="#d7c848" stroke-width=".5"/>
<path d="M1007.0,453.3L1011.7,452.0M1011.8,445.4L1007.1,446.6" stroke="#1c1a08" stroke-width="0.7" fill="none"/>
<polygon points="1054.8,554.8 1066.9,549.0 1060.8,544.9 1049.6,550.2" fill="#ece264" stroke="#ece264" stroke-width=".5"/>
<path d="M1054.8,554.8L1066.9,549.0M1060.8,544.9L1049.6,550.2" stroke="#1c1a08" stroke-width="0.7" fill="none"/>
<polygon points="1054.7,561.1 1066.8,555.2 1066.9,549.0 1054.8,554.8" fill="#d8cb4a" stroke="#d8cb4a" stroke-width=".5"/>
<path d="M1054.7,561.1L1066.8,555.2M1066.9,549.0L1054.8,554.8" stroke="#1c1a08" stroke-width="0.7" fill="none"/>
<polygon points="1085.0,477.6 1093.7,479.6 1094.5,454.2 1085.5,452.3" fill="#d7c948" stroke="#d7c948" stroke-width=".5"/>
<path d="M1093.7,479.6L1094.5,454.2M1085.5,452.3L1085.0,477.6" stroke="#1c1a08" stroke-width="0.7" fill="none"/>
<polygon points="885.6,469.5 890.8,476.4 890.6,467.9 885.3,461.2" fill="#d1c140" stroke="#d1c140" stroke-width=".5"/>
<path d="M885.6,469.5L890.8,476.4M890.6,467.9L885.3,461.2" stroke="#1c1a08" stroke-width="0.7" fill="none"/>
<polygon points="900.0,445.1 882.0,448.6 884.3,452.5 902.5,448.9" fill="#ece264" stroke="#ece264" stroke-width=".5"/>
<path d="M900.0,445.1L882.0,448.6M884.3,452.5L902.5,448.9M882.0,448.6L884.3,452.5" stroke="#1c1a08" stroke-width="0.7" fill="none"/>
<polygon points="970.6,452.7 975.4,453.7 975.3,447.1 970.4,446.0" fill="#d7c949" stroke="#d7c949" stroke-width=".5"/>
<path d="M970.6,452.7L975.4,453.7M975.3,447.1L970.4,446.0" stroke="#1c1a08" stroke-width="0.7" fill="none"/>
<polygon points="902.5,448.9 884.3,452.5 885.0,459.2 903.1,455.6" fill="#d7c949" stroke="#d7c949" stroke-width=".5"/>
<path d="M902.5,448.9L884.3,452.5M885.0,459.2L903.1,455.6" stroke="#1c1a08" stroke-width="0.7" fill="none"/>
<polygon points="1002.0,454.2 1007.0,453.3 1007.1,446.6 1002.1,447.5" fill="#d8ca49" stroke="#d8ca49" stroke-width=".5"/>
<path d="M1002.0,454.2L1007.0,453.3M1007.1,446.6L1002.1,447.5" stroke="#1c1a08" stroke-width="0.7" fill="none"/>
<polygon points="885.3,461.2 890.6,467.9 897.4,465.9 892.3,459.7" fill="#ece264" stroke="#ece264" stroke-width=".5"/>
<path d="M885.3,461.2L890.6,467.9M897.4,465.9L892.3,459.7" stroke="#1c1a08" stroke-width="0.7" fill="none"/>
<polygon points="975.4,453.7 980.6,454.5 980.5,447.8 975.3,447.1" fill="#d8ca4a" stroke="#d8ca4a" stroke-width=".5"/>
<path d="M975.4,453.7L980.6,454.5M980.5,447.8L975.3,447.1" stroke="#1c1a08" stroke-width="0.7" fill="none"/>
<polygon points="996.7,454.8 1002.0,454.2 1002.1,447.5 996.8,448.1" fill="#d9cb4b" stroke="#d9cb4b" stroke-width=".5"/>
<path d="M996.7,454.8L1002.0,454.2M1002.1,447.5L996.8,448.1" stroke="#1c1a08" stroke-width="0.7" fill="none"/>
<polygon points="1076.4,450.3 1094.5,454.2 1097.1,450.4 1079.2,446.5" fill="#ece264" stroke="#ece264" stroke-width=".5"/>
<path d="M1076.4,450.3L1094.5,454.2M1097.1,450.4L1079.2,446.5M1094.5,454.2L1097.1,450.4" stroke="#1c1a08" stroke-width="0.7" fill="none"/>
<polygon points="980.6,454.5 985.9,454.9 985.9,448.2 980.5,447.8" fill="#d9cb4b" stroke="#d9cb4b" stroke-width=".5"/>
<path d="M980.6,454.5L985.9,454.9M985.9,448.2L980.5,447.8" stroke="#1c1a08" stroke-width="0.7" fill="none"/>
<polygon points="1075.8,457.0 1093.8,461.0 1094.5,454.2 1076.4,450.3" fill="#d7c948" stroke="#d7c948" stroke-width=".5"/>
<path d="M1075.8,457.0L1093.8,461.0M1094.5,454.2L1076.4,450.3" stroke="#1c1a08" stroke-width="0.7" fill="none"/>
<polygon points="918.8,551.9 931.7,557.2 936.4,552.4 924.5,547.6" fill="#ece264" stroke="#ece264" stroke-width=".5"/>
<path d="M918.8,551.9L931.7,557.2M936.4,552.4L924.5,547.6" stroke="#1c1a08" stroke-width="0.7" fill="none"/>
<polygon points="991.3,455.0 996.7,454.8 996.8,448.1 991.4,448.3" fill="#d9cb4b" stroke="#d9cb4b" stroke-width=".5"/>
<path d="M991.3,455.0L996.7,454.8M996.8,448.1L991.4,448.3" stroke="#1c1a08" stroke-width="0.7" fill="none"/>
<polygon points="985.9,454.9 991.3,455.0 991.4,448.3 985.9,448.2" fill="#d9cc4b" stroke="#d9cc4b" stroke-width=".5"/>
<path d="M985.9,454.9L991.3,455.0M991.4,448.3L985.9,448.2" stroke="#1c1a08" stroke-width="0.7" fill="none"/>
<polygon points="919.0,558.2 931.8,563.6 931.7,557.2 918.8,551.9" fill="#d9cc4c" stroke="#d9cc4c" stroke-width=".5"/>
<path d="M919.0,558.2L931.8,563.6M931.7,557.2L918.8,551.9" stroke="#1c1a08" stroke-width="0.7" fill="none"/>
<polygon points="970.8,446.0 959.9,453.5 960.1,460.2 970.9,452.6" fill="#cfbf3e" stroke="#cfbf3e" stroke-width=".5"/>
<path d="M970.8,446.0L959.9,453.5M960.1,460.2L970.9,452.6" stroke="#1c1a08" stroke-width="0.7" fill="none"/>
<polygon points="1085.7,479.8 1092.0,473.1 1092.3,464.6 1086.0,471.2" fill="#d2c342" stroke="#d2c342" stroke-width=".5"/>
<path d="M1085.7,479.8L1092.0,473.1M1092.3,464.6L1086.0,471.2" stroke="#1c1a08" stroke-width="0.7" fill="none"/>
<polygon points="896.0,513.8 900.7,517.6 900.1,492.7 895.3,489.0" fill="#d5c645" stroke="#d5c645" stroke-width=".5"/>
<path d="M900.7,517.6L900.1,492.7M895.3,489.0L896.0,513.8" stroke="#1c1a08" stroke-width="0.7" fill="none"/>
<polygon points="1007.9,453.0 1018.2,460.7 1018.4,454.0 1008.0,446.3" fill="#cfbf3d" stroke="#cfbf3d" stroke-width=".5"/>
<path d="M1007.9,453.0L1018.2,460.7M1018.4,454.0L1008.0,446.3" stroke="#1c1a08" stroke-width="0.7" fill="none"/>
<polygon points="1041.2,559.6 1054.8,554.8 1049.6,550.2 1037.0,554.5" fill="#ece264" stroke="#ece264" stroke-width=".5"/>
<path d="M1041.2,559.6L1054.8,554.8M1049.6,550.2L1037.0,554.5" stroke="#1c1a08" stroke-width="0.7" fill="none"/>
<polygon points="963.8,443.7 952.9,451.1 959.9,453.5 970.8,446.0" fill="#ece264" stroke="#ece264" stroke-width=".5"/>
<path d="M963.8,443.7L952.9,451.1M959.9,453.5L970.8,446.0" stroke="#1c1a08" stroke-width="0.7" fill="none"/>
<polygon points="946.8,448.4 931.6,454.2 932.0,461.0 947.1,455.1" fill="#d4c544" stroke="#d4c544" stroke-width=".5"/>
<path d="M946.8,448.4L931.6,454.2M932.0,461.0L947.1,455.1" stroke="#1c1a08" stroke-width="0.7" fill="none"/>
<polygon points="1086.0,471.2 1092.3,464.6 1085.4,462.9 1079.4,469.0" fill="#ece264" stroke="#ece264" stroke-width=".5"/>
<path d="M1086.0,471.2L1092.3,464.6M1085.4,462.9L1079.4,469.0" stroke="#1c1a08" stroke-width="0.7" fill="none"/>
<polygon points="941.7,445.2 926.5,451.0 931.6,454.2 946.8,448.4" fill="#ece264" stroke="#ece264" stroke-width=".5"/>
<path d="M941.7,445.2L926.5,451.0M931.6,454.2L946.8,448.4" stroke="#1c1a08" stroke-width="0.7" fill="none"/>
<polygon points="900.7,517.6 908.4,514.2 908.0,489.4 900.1,492.7" fill="#d4c544" stroke="#d4c544" stroke-width=".5"/>
<path d="M908.4,514.2L908.0,489.4M900.1,492.7L900.7,517.6" stroke="#1c1a08" stroke-width="0.7" fill="none"/>
<polygon points="1041.1,565.9 1054.7,561.1 1054.8,554.8 1041.2,559.6" fill="#dacd4c" stroke="#dacd4c" stroke-width=".5"/>
<path d="M1041.1,565.9L1054.7,561.1M1054.8,554.8L1041.2,559.6" stroke="#1c1a08" stroke-width="0.7" fill="none"/>
<polygon points="1008.0,446.3 1018.4,454.0 1025.6,451.7 1015.1,444.1" fill="#ece264" stroke="#ece264" stroke-width=".5"/>
<path d="M1008.0,446.3L1018.4,454.0M1025.6,451.7L1015.1,444.1" stroke="#1c1a08" stroke-width="0.7" fill="none"/>
<polygon points="1031.6,455.8 1046.4,461.9 1046.8,455.2 1031.9,449.1" fill="#d4c544" stroke="#d4c544" stroke-width=".5"/>
<path d="M1031.6,455.8L1046.4,461.9M1046.8,455.2L1031.9,449.1" stroke="#1c1a08" stroke-width="0.7" fill="none"/>
<polygon points="1076.9,519.3 1081.9,515.6 1082.6,490.7 1077.5,494.3" fill="#d5c746" stroke="#d5c746" stroke-width=".5"/>
<path d="M1081.9,515.6L1082.6,490.7M1077.5,494.3L1076.9,519.3" stroke="#1c1a08" stroke-width="0.7" fill="none"/>
<polygon points="1031.9,449.1 1046.8,455.2 1052.1,452.0 1037.2,446.0" fill="#ece264" stroke="#ece264" stroke-width=".5"/>
<path d="M1031.9,449.1L1046.8,455.2M1052.1,452.0L1037.2,446.0" stroke="#1c1a08" stroke-width="0.7" fill="none"/>
<polygon points="1069.4,515.7 1076.9,519.3 1077.5,494.3 1069.8,490.9" fill="#d4c544" stroke="#d4c544" stroke-width=".5"/>
<path d="M1076.9,519.3L1077.5,494.3M1069.8,490.9L1069.4,515.7" stroke="#1c1a08" stroke-width="0.7" fill="none"/>
<polygon points="931.7,557.2 946.0,561.5 949.6,556.3 936.4,552.4" fill="#ece264" stroke="#ece264" stroke-width=".5"/>
<path d="M931.7,557.2L946.0,561.5M949.6,556.3L936.4,552.4" stroke="#1c1a08" stroke-width="0.7" fill="none"/>
<polygon points="981.8,447.9 976.0,456.6 976.1,463.4 981.9,454.6" fill="#c9b836" stroke="#c9b836" stroke-width=".5"/>
<path d="M981.8,447.9L976.0,456.6M976.1,463.4L981.9,454.6" stroke="#1c1a08" stroke-width="0.7" fill="none"/>
<polygon points="931.8,563.6 946.1,567.9 946.0,561.5 931.7,557.2" fill="#dbcd4d" stroke="#dbcd4d" stroke-width=".5"/>
<path d="M931.8,563.6L946.1,567.9M946.0,561.5L931.7,557.2" stroke="#1c1a08" stroke-width="0.7" fill="none"/>
<polygon points="996.8,454.7 1002.0,463.6 1002.1,456.8 996.8,448.0" fill="#c9b735" stroke="#c9b735" stroke-width=".5"/>
<path d="M996.8,454.7L1002.0,463.6M1002.1,456.8L996.8,448.0" stroke="#1c1a08" stroke-width="0.7" fill="none"/>
<polygon points="993.6,448.2 993.4,457.3 993.4,464.2 993.6,454.9" fill="#c3b02d" stroke="#c3b02d" stroke-width=".5"/>
<path d="M993.6,448.2L993.4,457.3M993.4,464.2L993.6,454.9" stroke="#1c1a08" stroke-width="0.7" fill="none"/>
<polygon points="925.4,554.9 931.2,550.1 930.9,525.9 925.0,530.6" fill="#cfbf3e" stroke="#cfbf3e" stroke-width=".5"/>
<path d="M931.2,550.1L930.9,525.9M925.0,530.6L925.4,554.9" stroke="#1c1a08" stroke-width="0.7" fill="none"/>
<polygon points="890.8,476.4 898.2,483.0 897.9,474.3 890.6,467.9" fill="#d3c443" stroke="#d3c443" stroke-width=".5"/>
<path d="M890.8,476.4L898.2,483.0M897.9,474.3L890.6,467.9" stroke="#1c1a08" stroke-width="0.7" fill="none"/>
<polygon points="918.7,551.9 925.4,554.9 925.0,530.6 918.1,527.7" fill="#d9cb4b" stroke="#d9cb4b" stroke-width=".5"/>
<path d="M925.4,554.9L925.0,530.6M918.1,527.7L918.7,551.9" stroke="#1c1a08" stroke-width="0.7" fill="none"/>
<polygon points="973.7,446.6 967.6,455.3 976.0,456.6 981.8,447.9" fill="#ece264" stroke="#ece264" stroke-width=".5"/>
<path d="M973.7,446.6L967.6,455.3M976.0,456.6L981.8,447.9" stroke="#1c1a08" stroke-width="0.7" fill="none"/>
<polygon points="1026.3,563.2 1041.2,559.6 1037.0,554.5 1023.3,557.8" fill="#ece264" stroke="#ece264" stroke-width=".5"/>
<path d="M1026.3,563.2L1041.2,559.6M1037.0,554.5L1023.3,557.8" stroke="#1c1a08" stroke-width="0.7" fill="none"/>
<polygon points="890.6,467.9 897.9,474.3 904.3,471.9 897.4,465.9" fill="#ece264" stroke="#ece264" stroke-width=".5"/>
<path d="M890.6,467.9L897.9,474.3M904.3,471.9L897.4,465.9" stroke="#1c1a08" stroke-width="0.7" fill="none"/>
<polygon points="996.8,448.0 1002.1,456.8 1010.5,455.7 1005.1,446.9" fill="#ece264" stroke="#ece264" stroke-width=".5"/>
<path d="M996.8,448.0L1002.1,456.8M1010.5,455.7L1005.1,446.9" stroke="#1c1a08" stroke-width="0.7" fill="none"/>
<polygon points="1045.7,551.3 1051.2,556.3 1051.6,531.8 1046.0,527.1" fill="#cfbf3d" stroke="#cfbf3d" stroke-width=".5"/>
<path d="M1051.2,556.3L1051.6,531.8M1046.0,527.1L1045.7,551.3" stroke="#1c1a08" stroke-width="0.7" fill="none"/>
<polygon points="1026.2,569.6 1041.1,565.9 1041.2,559.6 1026.3,563.2" fill="#dbce4e" stroke="#dbce4e" stroke-width=".5"/>
<path d="M1026.2,569.6L1041.1,565.9M1041.2,559.6L1026.3,563.2" stroke="#1c1a08" stroke-width="0.7" fill="none"/>
<polygon points="1051.2,556.3 1058.2,553.4 1058.8,529.1 1051.6,531.8" fill="#d9cc4b" stroke="#d9cc4b" stroke-width=".5"/>
<path d="M1058.2,553.4L1058.8,529.1M1051.6,531.8L1051.2,556.3" stroke="#1c1a08" stroke-width="0.7" fill="none"/>
<polygon points="985.0,448.1 984.6,457.3 993.4,457.3 993.6,448.2" fill="#ece264" stroke="#ece264" stroke-width=".5"/>
<path d="M985.0,448.1L984.6,457.3M993.4,457.3L993.6,448.2" stroke="#1c1a08" stroke-width="0.7" fill="none"/>
<polygon points="946.0,561.5 961.5,564.5 963.8,559.1 949.6,556.3" fill="#ece264" stroke="#ece264" stroke-width=".5"/>
<path d="M946.0,561.5L961.5,564.5M963.8,559.1L949.6,556.3" stroke="#1c1a08" stroke-width="0.7" fill="none"/>
<polygon points="931.6,454.2 915.8,460.2 916.3,467.1 932.0,461.0" fill="#d4c544" stroke="#d4c544" stroke-width=".5"/>
<path d="M931.6,454.2L915.8,460.2M916.3,467.1L932.0,461.0" stroke="#1c1a08" stroke-width="0.7" fill="none"/>
<polygon points="946.1,567.9 961.5,571.0 961.5,564.5 946.0,561.5" fill="#dccf4f" stroke="#dccf4f" stroke-width=".5"/>
<path d="M946.1,567.9L961.5,571.0M961.5,564.5L946.0,561.5" stroke="#1c1a08" stroke-width="0.7" fill="none"/>
<polygon points="926.5,451.0 910.8,456.9 915.8,460.2 931.6,454.2" fill="#ece264" stroke="#ece264" stroke-width=".5"/>
<path d="M926.5,451.0L910.8,456.9M915.8,460.2L931.6,454.2" stroke="#1c1a08" stroke-width="0.7" fill="none"/>
<polygon points="1010.5,565.6 1026.3,563.2 1023.3,557.8 1008.8,560.0" fill="#ece264" stroke="#ece264" stroke-width=".5"/>
<path d="M1010.5,565.6L1026.3,563.2M1023.3,557.8L1008.8,560.0" stroke="#1c1a08" stroke-width="0.7" fill="none"/>
<polygon points="1077.4,486.1 1085.7,479.8 1086.0,471.2 1077.6,477.4" fill="#d4c645" stroke="#d4c645" stroke-width=".5"/>
<path d="M1077.4,486.1L1085.7,479.8M1086.0,471.2L1077.6,477.4" stroke="#1c1a08" stroke-width="0.7" fill="none"/>
<polygon points="1046.4,461.9 1061.7,468.3 1062.2,461.5 1046.8,455.2" fill="#d4c544" stroke="#d4c544" stroke-width=".5"/>
<path d="M1046.4,461.9L1061.7,468.3M1062.2,461.5L1046.8,455.2" stroke="#1c1a08" stroke-width="0.7" fill="none"/>
<polygon points="1010.4,572.0 1026.2,569.6 1026.3,563.2 1010.5,565.6" fill="#dccf4f" stroke="#dccf4f" stroke-width=".5"/>
<path d="M1010.4,572.0L1026.2,569.6M1026.3,563.2L1010.5,565.6" stroke="#1c1a08" stroke-width="0.7" fill="none"/>
<polygon points="1046.8,455.2 1062.2,461.5 1067.5,458.2 1052.1,452.0" fill="#ece264" stroke="#ece264" stroke-width=".5"/>
<path d="M1046.8,455.2L1062.2,461.5M1067.5,458.2L1052.1,452.0" stroke="#1c1a08" stroke-width="0.7" fill="none"/>
<polygon points="1077.6,477.4 1086.0,471.2 1079.4,469.0 1071.5,474.8" fill="#ece264" stroke="#ece264" stroke-width=".5"/>
<path d="M1077.6,477.4L1086.0,471.2M1079.4,469.0L1071.5,474.8" stroke="#1c1a08" stroke-width="0.7" fill="none"/>
<polygon points="961.5,564.5 977.6,566.3 978.6,560.6 963.8,559.1" fill="#ece264" stroke="#ece264" stroke-width=".5"/>
<path d="M961.5,564.5L977.6,566.3M978.6,560.6L963.8,559.1" stroke="#1c1a08" stroke-width="0.7" fill="none"/>
<polygon points="959.9,453.5 948.5,461.3 948.8,468.2 960.1,460.2" fill="#cfbf3e" stroke="#cfbf3e" stroke-width=".5"/>
<path d="M959.9,453.5L948.5,461.3M948.8,468.2L960.1,460.2" stroke="#1c1a08" stroke-width="0.7" fill="none"/>
<polygon points="994.1,566.6 1010.5,565.6 1008.8,560.0 993.7,560.9" fill="#ece264" stroke="#ece264" stroke-width=".5"/>
<path d="M994.1,566.6L1010.5,565.6M1008.8,560.0L993.7,560.9" stroke="#1c1a08" stroke-width="0.7" fill="none"/>
<polygon points="961.5,571.0 977.6,572.7 977.6,566.3 961.5,564.5" fill="#ddcf50" stroke="#ddcf50" stroke-width=".5"/>
<path d="M961.5,571.0L977.6,572.7M977.6,566.3L961.5,564.5" stroke="#1c1a08" stroke-width="0.7" fill="none"/>
<polygon points="1018.2,460.7 1029.0,468.9 1029.3,462.0 1018.4,454.0" fill="#cfbf3d" stroke="#cfbf3d" stroke-width=".5"/>
<path d="M1018.2,460.7L1029.0,468.9M1029.3,462.0L1018.4,454.0" stroke="#1c1a08" stroke-width="0.7" fill="none"/>
<polygon points="952.9,451.1 941.4,458.8 948.5,461.3 959.9,453.5" fill="#ece264" stroke="#ece264" stroke-width=".5"/>
<path d="M952.9,451.1L941.4,458.8M948.5,461.3L959.9,453.5" stroke="#1c1a08" stroke-width="0.7" fill="none"/>
<polygon points="977.6,566.3 994.1,566.6 993.7,560.9 978.6,560.6" fill="#ece264" stroke="#ece264" stroke-width=".5"/>
<path d="M977.6,566.3L994.1,566.6M993.7,560.9L978.6,560.6" stroke="#1c1a08" stroke-width="0.7" fill="none"/>
<polygon points="895.3,489.0 900.1,492.7 899.5,466.5 894.6,463.0" fill="#d5c645" stroke="#d5c645" stroke-width=".5"/>
<path d="M900.1,492.7L899.5,466.5M894.6,463.0L895.3,489.0" stroke="#1c1a08" stroke-width="0.7" fill="none"/>
<polygon points="994.1,573.1 1010.4,572.0 1010.5,565.6 994.1,566.6" fill="#ddd050" stroke="#ddd050" stroke-width=".5"/>
<path d="M994.1,573.1L1010.4,572.0M1010.5,565.6L994.1,566.6" stroke="#1c1a08" stroke-width="0.7" fill="none"/>
<polygon points="1018.4,454.0 1029.3,462.0 1036.6,459.6 1025.6,451.7" fill="#ece264" stroke="#ece264" stroke-width=".5"/>
<path d="M1018.4,454.0L1029.3,462.0M1036.6,459.6L1025.6,451.7" stroke="#1c1a08" stroke-width="0.7" fill="none"/>
<polygon points="977.6,572.7 994.1,573.1 994.1,566.6 977.6,566.3" fill="#ddd050" stroke="#ddd050" stroke-width=".5"/>
<path d="M977.6,572.7L994.1,573.1M994.1,566.6L977.6,566.3" stroke="#1c1a08" stroke-width="0.7" fill="none"/>
<polygon points="900.1,492.7 908.0,489.4 907.6,463.4 899.5,466.5" fill="#d4c544" stroke="#d4c544" stroke-width=".5"/>
<path d="M908.0,489.4L907.6,463.4M899.5,466.5L900.1,492.7" stroke="#1c1a08" stroke-width="0.7" fill="none"/>
<polygon points="1077.5,494.3 1082.6,490.7 1083.4,464.6 1078.2,468.0" fill="#d5c746" stroke="#d5c746" stroke-width=".5"/>
<path d="M1082.6,490.7L1083.4,464.6M1078.2,468.0L1077.5,494.3" stroke="#1c1a08" stroke-width="0.7" fill="none"/>
<polygon points="898.2,483.0 907.5,489.0 907.3,480.3 897.9,474.3" fill="#d6c747" stroke="#d6c747" stroke-width=".5"/>
<path d="M898.2,483.0L907.5,489.0M907.3,480.3L897.9,474.3" stroke="#1c1a08" stroke-width="0.7" fill="none"/>
<polygon points="897.9,474.3 907.3,480.3 913.1,477.4 904.3,471.9" fill="#ece264" stroke="#ece264" stroke-width=".5"/>
<path d="M897.9,474.3L907.3,480.3M913.1,477.4L904.3,471.9" stroke="#1c1a08" stroke-width="0.7" fill="none"/>
<polygon points="1069.8,490.9 1077.5,494.3 1078.2,468.0 1070.2,464.8" fill="#d4c544" stroke="#d4c544" stroke-width=".5"/>
<path d="M1077.5,494.3L1078.2,468.0M1070.2,464.8L1069.8,490.9" stroke="#1c1a08" stroke-width="0.7" fill="none"/>
<polygon points="956.9,563.9 960.1,558.2 960.0,533.5 956.8,539.1" fill="#c9b836" stroke="#c9b836" stroke-width=".5"/>
<path d="M960.1,558.2L960.0,533.5M956.8,539.1L956.9,563.9" stroke="#1c1a08" stroke-width="0.7" fill="none"/>
<polygon points="915.8,460.2 899.5,466.5 900.1,473.4 916.3,467.1" fill="#d4c544" stroke="#d4c544" stroke-width=".5"/>
<path d="M915.8,460.2L899.5,466.5M900.1,473.4L916.3,467.1" stroke="#1c1a08" stroke-width="0.7" fill="none"/>
<polygon points="910.8,456.9 894.6,463.0 899.5,466.5 915.8,460.2" fill="#ece264" stroke="#ece264" stroke-width=".5"/>
<path d="M910.8,456.9L894.6,463.0M899.5,466.5L915.8,460.2M894.6,463.0L899.5,466.5" stroke="#1c1a08" stroke-width="0.7" fill="none"/>
<polygon points="1016.2,558.8 1019.1,564.5 1019.3,539.7 1016.3,534.1" fill="#c9b735" stroke="#c9b735" stroke-width=".5"/>
<path d="M1019.1,564.5L1019.3,539.7M1016.3,534.1L1016.2,558.8" stroke="#1c1a08" stroke-width="0.7" fill="none"/>
<polygon points="976.0,456.6 969.8,465.8 969.9,472.7 976.1,463.4" fill="#c9b836" stroke="#c9b836" stroke-width=".5"/>
<path d="M976.0,456.6L969.8,465.8M969.9,472.7L976.1,463.4" stroke="#1c1a08" stroke-width="0.7" fill="none"/>
<polygon points="1002.0,463.6 1007.5,473.0 1007.6,466.1 1002.1,456.8" fill="#c9b735" stroke="#c9b735" stroke-width=".5"/>
<path d="M1002.0,463.6L1007.5,473.0M1007.6,466.1L1002.1,456.8" stroke="#1c1a08" stroke-width="0.7" fill="none"/>
<polygon points="948.6,562.2 956.9,563.9 956.8,539.1 948.3,537.4" fill="#dccf4f" stroke="#dccf4f" stroke-width=".5"/>
<path d="M956.9,563.9L956.8,539.1M948.3,537.4L948.6,562.2" stroke="#1c1a08" stroke-width="0.7" fill="none"/>
<polygon points="1061.7,468.3 1077.6,475.0 1078.2,468.0 1062.2,461.5" fill="#d4c544" stroke="#d4c544" stroke-width=".5"/>
<path d="M1061.7,468.3L1077.6,475.0M1078.2,468.0L1062.2,461.5" stroke="#1c1a08" stroke-width="0.7" fill="none"/>
<polygon points="1062.2,461.5 1078.2,468.0 1083.4,464.6 1067.5,458.2" fill="#ece264" stroke="#ece264" stroke-width=".5"/>
<path d="M1062.2,461.5L1078.2,468.0M1083.4,464.6L1067.5,458.2M1078.2,468.0L1083.4,464.6" stroke="#1c1a08" stroke-width="0.7" fill="none"/>
<polygon points="925.0,530.6 930.9,525.9 930.7,500.5 924.6,505.0" fill="#cfbf3e" stroke="#cfbf3e" stroke-width=".5"/>
<path d="M930.9,525.9L930.7,500.5M924.6,505.0L925.0,530.6" stroke="#1c1a08" stroke-width="0.7" fill="none"/>
<polygon points="1019.1,564.5 1027.5,563.0 1027.9,538.2 1019.3,539.7" fill="#dccf4f" stroke="#dccf4f" stroke-width=".5"/>
<path d="M1027.5,563.0L1027.9,538.2M1019.3,539.7L1019.1,564.5" stroke="#1c1a08" stroke-width="0.7" fill="none"/>
<polygon points="993.4,457.3 993.2,467.0 993.2,473.9 993.4,464.2" fill="#c3b02d" stroke="#c3b02d" stroke-width=".5"/>
<path d="M993.4,457.3L993.2,467.0M993.2,473.9L993.4,464.2" stroke="#1c1a08" stroke-width="0.7" fill="none"/>
<polygon points="918.1,527.7 925.0,530.6 924.6,505.0 917.5,502.2" fill="#d9cb4b" stroke="#d9cb4b" stroke-width=".5"/>
<path d="M925.0,530.6L924.6,505.0M917.5,502.2L918.1,527.7" stroke="#1c1a08" stroke-width="0.7" fill="none"/>
<polygon points="967.6,455.3 961.3,464.4 969.8,465.8 976.0,456.6" fill="#ece264" stroke="#ece264" stroke-width=".5"/>
<path d="M967.6,455.3L961.3,464.4M969.8,465.8L976.0,456.6" stroke="#1c1a08" stroke-width="0.7" fill="none"/>
<polygon points="992.4,566.7 992.5,560.7 992.6,535.9 992.5,541.8" fill="#c3b02d" stroke="#c3b02d" stroke-width=".5"/>
<path d="M992.5,560.7L992.6,535.9M992.5,541.8L992.4,566.7" stroke="#1c1a08" stroke-width="0.7" fill="none"/>
<polygon points="1067.1,491.9 1077.4,486.1 1077.6,477.4 1067.3,483.1" fill="#d7c848" stroke="#d7c848" stroke-width=".5"/>
<path d="M1067.1,491.9L1077.4,486.1M1077.6,477.4L1067.3,483.1" stroke="#1c1a08" stroke-width="0.7" fill="none"/>
<polygon points="1002.1,456.8 1007.6,466.1 1016.3,464.9 1010.5,455.7" fill="#ece264" stroke="#ece264" stroke-width=".5"/>
<path d="M1002.1,456.8L1007.6,466.1M1016.3,464.9L1010.5,455.7" stroke="#1c1a08" stroke-width="0.7" fill="none"/>
<polygon points="1067.3,483.1 1077.6,477.4 1071.5,474.8 1061.9,480.0" fill="#ece264" stroke="#ece264" stroke-width=".5"/>
<path d="M1067.3,483.1L1077.6,477.4M1071.5,474.8L1061.9,480.0" stroke="#1c1a08" stroke-width="0.7" fill="none"/>
<polygon points="1046.0,527.1 1051.6,531.8 1052.1,506.2 1046.3,501.6" fill="#cfbf3d" stroke="#cfbf3d" stroke-width=".5"/>
<path d="M1051.6,531.8L1052.1,506.2M1046.3,501.6L1046.0,527.1" stroke="#1c1a08" stroke-width="0.7" fill="none"/>
<polygon points="1051.6,531.8 1058.8,529.1 1059.4,503.5 1052.1,506.2" fill="#d9cc4b" stroke="#d9cc4b" stroke-width=".5"/>
<path d="M1058.8,529.1L1059.4,503.5M1052.1,506.2L1051.6,531.8" stroke="#1c1a08" stroke-width="0.7" fill="none"/>
<polygon points="984.6,457.3 984.1,466.9 993.2,467.0 993.4,457.3" fill="#ece264" stroke="#ece264" stroke-width=".5"/>
<path d="M984.6,457.3L984.1,466.9M993.2,467.0L993.4,457.3" stroke="#1c1a08" stroke-width="0.7" fill="none"/>
<polygon points="948.5,461.3 936.6,469.5 937.0,476.4 948.8,468.2" fill="#cfbf3e" stroke="#cfbf3e" stroke-width=".5"/>
<path d="M948.5,461.3L936.6,469.5M937.0,476.4L948.8,468.2" stroke="#1c1a08" stroke-width="0.7" fill="none"/>
<polygon points="983.5,566.6 992.4,566.7 992.5,541.8 983.4,541.7" fill="#ddd050" stroke="#ddd050" stroke-width=".5"/>
<path d="M992.4,566.7L992.5,541.8M983.4,541.7L983.5,566.6" stroke="#1c1a08" stroke-width="0.7" fill="none"/>
<polygon points="941.4,458.8 929.4,466.9 936.6,469.5 948.5,461.3" fill="#ece264" stroke="#ece264" stroke-width=".5"/>
<path d="M941.4,458.8L929.4,466.9M936.6,469.5L948.5,461.3" stroke="#1c1a08" stroke-width="0.7" fill="none"/>
<polygon points="1029.0,468.9 1040.2,477.4 1040.6,470.4 1029.3,462.0" fill="#cfbf3d" stroke="#cfbf3d" stroke-width=".5"/>
<path d="M1029.0,468.9L1040.2,477.4M1040.6,470.4L1029.3,462.0" stroke="#1c1a08" stroke-width="0.7" fill="none"/>
<polygon points="907.5,489.0 918.7,494.5 918.5,485.6 907.3,480.3" fill="#d8ca49" stroke="#d8ca49" stroke-width=".5"/>
<path d="M907.5,489.0L918.7,494.5M918.5,485.6L907.3,480.3" stroke="#1c1a08" stroke-width="0.7" fill="none"/>
<polygon points="907.3,480.3 918.5,485.6 923.6,482.3 913.1,477.4" fill="#ece264" stroke="#ece264" stroke-width=".5"/>
<path d="M907.3,480.3L918.5,485.6M923.6,482.3L913.1,477.4" stroke="#1c1a08" stroke-width="0.7" fill="none"/>
<polygon points="1029.3,462.0 1040.6,470.4 1048.0,467.9 1036.6,459.6" fill="#ece264" stroke="#ece264" stroke-width=".5"/>
<path d="M1029.3,462.0L1040.6,470.4M1048.0,467.9L1036.6,459.6" stroke="#1c1a08" stroke-width="0.7" fill="none"/>
<polygon points="1055.0,497.0 1067.1,491.9 1067.3,483.1 1055.2,488.0" fill="#d8cb4a" stroke="#d8cb4a" stroke-width=".5"/>
<path d="M1055.0,497.0L1067.1,491.9M1067.3,483.1L1055.2,488.0" stroke="#1c1a08" stroke-width="0.7" fill="none"/>
<polygon points="1055.2,488.0 1067.3,483.1 1061.9,480.0 1050.5,484.5" fill="#ece264" stroke="#ece264" stroke-width=".5"/>
<path d="M1055.2,488.0L1067.3,483.1M1061.9,480.0L1050.5,484.5" stroke="#1c1a08" stroke-width="0.7" fill="none"/>
<polygon points="956.8,539.1 960.0,533.5 960.0,507.7 956.6,513.0" fill="#c9b836" stroke="#c9b836" stroke-width=".5"/>
<path d="M960.0,533.5L960.0,507.7M956.6,513.0L956.8,539.1" stroke="#1c1a08" stroke-width="0.7" fill="none"/>
<polygon points="969.8,465.8 963.3,475.4 963.5,482.4 969.9,472.7" fill="#c9b836" stroke="#c9b836" stroke-width=".5"/>
<path d="M969.8,465.8L963.3,475.4M963.5,482.4L969.9,472.7" stroke="#1c1a08" stroke-width="0.7" fill="none"/>
<polygon points="1016.3,534.1 1019.3,539.7 1019.4,513.6 1016.4,508.2" fill="#c9b735" stroke="#c9b735" stroke-width=".5"/>
<path d="M1019.3,539.7L1019.4,513.6M1016.4,508.2L1016.3,534.1" stroke="#1c1a08" stroke-width="0.7" fill="none"/>
<polygon points="1007.5,473.0 1013.3,482.9 1013.5,475.9 1007.6,466.1" fill="#c9b735" stroke="#c9b735" stroke-width=".5"/>
<path d="M1007.5,473.0L1013.3,482.9M1013.5,475.9L1007.6,466.1" stroke="#1c1a08" stroke-width="0.7" fill="none"/>
<polygon points="924.6,505.0 930.7,500.5 930.4,473.8 924.2,478.1" fill="#cfbf3e" stroke="#cfbf3e" stroke-width=".5"/>
<path d="M930.7,500.5L930.4,473.8M924.2,478.1L924.6,505.0" stroke="#1c1a08" stroke-width="0.7" fill="none"/>
<polygon points="918.5,485.6 931.5,490.2 935.7,486.5 923.6,482.3" fill="#ece264" stroke="#ece264" stroke-width=".5"/>
<path d="M918.5,485.6L931.5,490.2M935.7,486.5L923.6,482.3" stroke="#1c1a08" stroke-width="0.7" fill="none"/>
<polygon points="918.7,494.5 931.6,499.2 931.5,490.2 918.5,485.6" fill="#d9cc4c" stroke="#d9cc4c" stroke-width=".5"/>
<path d="M918.7,494.5L931.6,499.2M931.5,490.2L918.5,485.6" stroke="#1c1a08" stroke-width="0.7" fill="none"/>
<polygon points="948.3,537.4 956.8,539.1 956.6,513.0 947.9,511.4" fill="#dccf4f" stroke="#dccf4f" stroke-width=".5"/>
<path d="M956.8,539.1L956.6,513.0M947.9,511.4L948.3,537.4" stroke="#1c1a08" stroke-width="0.7" fill="none"/>
<polygon points="917.5,502.2 924.6,505.0 924.2,478.1 916.9,475.4" fill="#d9cb4b" stroke="#d9cb4b" stroke-width=".5"/>
<path d="M924.6,505.0L924.2,478.1M916.9,475.4L917.5,502.2" stroke="#1c1a08" stroke-width="0.7" fill="none"/>
<polygon points="961.3,464.4 954.6,474.0 963.3,475.4 969.8,465.8" fill="#ece264" stroke="#ece264" stroke-width=".5"/>
<path d="M961.3,464.4L954.6,474.0M963.3,475.4L969.8,465.8" stroke="#1c1a08" stroke-width="0.7" fill="none"/>
<polygon points="1019.3,539.7 1027.9,538.2 1028.3,512.2 1019.4,513.6" fill="#dccf4f" stroke="#dccf4f" stroke-width=".5"/>
<path d="M1027.9,538.2L1028.3,512.2M1019.4,513.6L1019.3,539.7" stroke="#1c1a08" stroke-width="0.7" fill="none"/>
<polygon points="1046.3,501.6 1052.1,506.2 1052.5,479.2 1046.6,474.8" fill="#cfbf3d" stroke="#cfbf3d" stroke-width=".5"/>
<path d="M1052.1,506.2L1052.5,479.2M1046.6,474.8L1046.3,501.6" stroke="#1c1a08" stroke-width="0.7" fill="none"/>
<polygon points="936.6,469.5 924.2,478.1 924.7,485.1 937.0,476.4" fill="#cfbf3e" stroke="#cfbf3e" stroke-width=".5"/>
<path d="M936.6,469.5L924.2,478.1M924.7,485.1L937.0,476.4" stroke="#1c1a08" stroke-width="0.7" fill="none"/>
<polygon points="993.2,467.0 993.0,477.2 993.0,484.3 993.2,473.9" fill="#c3b02d" stroke="#c3b02d" stroke-width=".5"/>
<path d="M993.2,467.0L993.0,477.2M993.0,484.3L993.2,473.9" stroke="#1c1a08" stroke-width="0.7" fill="none"/>
<polygon points="1007.6,466.1 1013.5,475.9 1022.3,474.6 1016.3,464.9" fill="#ece264" stroke="#ece264" stroke-width=".5"/>
<path d="M1007.6,466.1L1013.5,475.9M1022.3,474.6L1016.3,464.9" stroke="#1c1a08" stroke-width="0.7" fill="none"/>
<polygon points="992.5,541.8 992.6,535.9 992.7,509.9 992.6,515.6" fill="#c3b02d" stroke="#c3b02d" stroke-width=".5"/>
<path d="M992.6,535.9L992.7,509.9M992.6,515.6L992.5,541.8" stroke="#1c1a08" stroke-width="0.7" fill="none"/>
<polygon points="1052.1,506.2 1059.4,503.5 1060.0,476.6 1052.5,479.2" fill="#d9cc4b" stroke="#d9cc4b" stroke-width=".5"/>
<path d="M1059.4,503.5L1060.0,476.6M1052.5,479.2L1052.1,506.2" stroke="#1c1a08" stroke-width="0.7" fill="none"/>
<polygon points="929.4,466.9 916.9,475.4 924.2,478.1 936.6,469.5" fill="#ece264" stroke="#ece264" stroke-width=".5"/>
<path d="M929.4,466.9L916.9,475.4M924.2,478.1L936.6,469.5M916.9,475.4L924.2,478.1" stroke="#1c1a08" stroke-width="0.7" fill="none"/>
<polygon points="1040.2,477.4 1052.0,486.3 1052.5,479.2 1040.6,470.4" fill="#cfbf3d" stroke="#cfbf3d" stroke-width=".5"/>
<path d="M1040.2,477.4L1052.0,486.3M1052.5,479.2L1040.6,470.4" stroke="#1c1a08" stroke-width="0.7" fill="none"/>
<polygon points="1041.5,492.2 1055.2,488.0 1050.5,484.5 1037.8,488.3" fill="#ece264" stroke="#ece264" stroke-width=".5"/>
<path d="M1041.5,492.2L1055.2,488.0M1050.5,484.5L1037.8,488.3" stroke="#1c1a08" stroke-width="0.7" fill="none"/>
<polygon points="1041.4,501.2 1055.0,497.0 1055.2,488.0 1041.5,492.2" fill="#dacd4c" stroke="#dacd4c" stroke-width=".5"/>
<path d="M1041.4,501.2L1055.0,497.0M1055.2,488.0L1041.5,492.2" stroke="#1c1a08" stroke-width="0.7" fill="none"/>
<polygon points="1040.6,470.4 1052.5,479.2 1060.0,476.6 1048.0,467.9" fill="#ece264" stroke="#ece264" stroke-width=".5"/>
<path d="M1040.6,470.4L1052.5,479.2M1060.0,476.6L1048.0,467.9M1052.5,479.2L1060.0,476.6" stroke="#1c1a08" stroke-width="0.7" fill="none"/>
<polygon points="984.1,466.9 983.6,477.1 993.0,477.2 993.2,467.0" fill="#ece264" stroke="#ece264" stroke-width=".5"/>
<path d="M984.1,466.9L983.6,477.1M993.0,477.2L993.2,467.0" stroke="#1c1a08" stroke-width="0.7" fill="none"/>
<polygon points="983.4,541.7 992.5,541.8 992.6,515.6 983.3,515.5" fill="#ddd050" stroke="#ddd050" stroke-width=".5"/>
<path d="M992.5,541.8L992.6,515.6M983.3,515.5L983.4,541.7" stroke="#1c1a08" stroke-width="0.7" fill="none"/>
<polygon points="931.5,490.2 945.9,493.8 949.1,489.8 935.7,486.5" fill="#ece264" stroke="#ece264" stroke-width=".5"/>
<path d="M931.5,490.2L945.9,493.8M949.1,489.8L935.7,486.5" stroke="#1c1a08" stroke-width="0.7" fill="none"/>
<polygon points="931.6,499.2 946.0,502.9 945.9,493.8 931.5,490.2" fill="#dbcd4d" stroke="#dbcd4d" stroke-width=".5"/>
<path d="M931.6,499.2L946.0,502.9M945.9,493.8L931.5,490.2" stroke="#1c1a08" stroke-width="0.7" fill="none"/>
<polygon points="1026.5,495.3 1041.5,492.2 1037.8,488.3 1023.9,491.2" fill="#ece264" stroke="#ece264" stroke-width=".5"/>
<path d="M1026.5,495.3L1041.5,492.2M1037.8,488.3L1023.9,491.2" stroke="#1c1a08" stroke-width="0.7" fill="none"/>
<polygon points="1026.4,504.4 1041.4,501.2 1041.5,492.2 1026.5,495.3" fill="#dbce4e" stroke="#dbce4e" stroke-width=".5"/>
<path d="M1026.4,504.4L1041.4,501.2M1041.5,492.2L1026.5,495.3" stroke="#1c1a08" stroke-width="0.7" fill="none"/>
<polygon points="945.9,493.8 961.4,496.4 963.5,492.2 949.1,489.8" fill="#ece264" stroke="#ece264" stroke-width=".5"/>
<path d="M945.9,493.8L961.4,496.4M963.5,492.2L949.1,489.8" stroke="#1c1a08" stroke-width="0.7" fill="none"/>
<polygon points="956.6,513.0 960.0,507.7 959.9,480.5 956.4,485.6" fill="#c9b836" stroke="#c9b836" stroke-width=".5"/>
<path d="M960.0,507.7L959.9,480.5M956.4,485.6L956.6,513.0" stroke="#1c1a08" stroke-width="0.7" fill="none"/>
<polygon points="946.0,502.9 961.4,505.5 961.4,496.4 945.9,493.8" fill="#dccf4f" stroke="#dccf4f" stroke-width=".5"/>
<path d="M946.0,502.9L961.4,505.5M961.4,496.4L945.9,493.8" stroke="#1c1a08" stroke-width="0.7" fill="none"/>
<polygon points="1016.4,508.2 1019.4,513.6 1019.6,486.2 1016.6,481.0" fill="#c9b735" stroke="#c9b735" stroke-width=".5"/>
<path d="M1019.4,513.6L1019.6,486.2M1016.6,481.0L1016.4,508.2" stroke="#1c1a08" stroke-width="0.7" fill="none"/>
<polygon points="963.3,475.4 956.4,485.6 956.7,492.8 963.5,482.4" fill="#c9b836" stroke="#c9b836" stroke-width=".5"/>
<path d="M963.3,475.4L956.4,485.6M956.7,492.8L963.5,482.4" stroke="#1c1a08" stroke-width="0.7" fill="none"/>
<polygon points="1010.6,497.3 1026.5,495.3 1023.9,491.2 1009.1,493.1" fill="#ece264" stroke="#ece264" stroke-width=".5"/>
<path d="M1010.6,497.3L1026.5,495.3M1023.9,491.2L1009.1,493.1" stroke="#1c1a08" stroke-width="0.7" fill="none"/>
<polygon points="1013.3,482.9 1019.4,493.3 1019.6,486.2 1013.5,475.9" fill="#c9b735" stroke="#c9b735" stroke-width=".5"/>
<path d="M1013.3,482.9L1019.4,493.3M1019.6,486.2L1013.5,475.9" stroke="#1c1a08" stroke-width="0.7" fill="none"/>
<polygon points="1010.5,506.4 1026.4,504.4 1026.5,495.3 1010.6,497.3" fill="#dccf4f" stroke="#dccf4f" stroke-width=".5"/>
<path d="M1010.5,506.4L1026.4,504.4M1026.5,495.3L1010.6,497.3" stroke="#1c1a08" stroke-width="0.7" fill="none"/>
<polygon points="947.9,511.4 956.6,513.0 956.4,485.6 947.5,484.1" fill="#dccf4f" stroke="#dccf4f" stroke-width=".5"/>
<path d="M956.6,513.0L956.4,485.6M947.5,484.1L947.9,511.4" stroke="#1c1a08" stroke-width="0.7" fill="none"/>
<polygon points="961.4,496.4 977.6,497.9 978.5,493.6 963.5,492.2" fill="#ece264" stroke="#ece264" stroke-width=".5"/>
<path d="M961.4,496.4L977.6,497.9M978.5,493.6L963.5,492.2" stroke="#1c1a08" stroke-width="0.7" fill="none"/>
<polygon points="1019.4,513.6 1028.3,512.2 1028.7,484.8 1019.6,486.2" fill="#dccf4f" stroke="#dccf4f" stroke-width=".5"/>
<path d="M1028.3,512.2L1028.7,484.8M1019.6,486.2L1019.4,513.6" stroke="#1c1a08" stroke-width="0.7" fill="none"/>
<polygon points="954.6,474.0 947.5,484.1 956.4,485.6 963.3,475.4" fill="#ece264" stroke="#ece264" stroke-width=".5"/>
<path d="M954.6,474.0L947.5,484.1M956.4,485.6L963.3,475.4M947.5,484.1L956.4,485.6" stroke="#1c1a08" stroke-width="0.7" fill="none"/>
<polygon points="961.4,505.5 977.6,507.0 977.6,497.9 961.4,496.4" fill="#ddcf50" stroke="#ddcf50" stroke-width=".5"/>
<path d="M961.4,505.5L977.6,507.0M977.6,497.9L961.4,496.4" stroke="#1c1a08" stroke-width="0.7" fill="none"/>
<polygon points="992.6,515.6 992.7,509.9 992.9,482.6 992.7,488.0" fill="#c3b02d" stroke="#c3b02d" stroke-width=".5"/>
<path d="M992.7,509.9L992.9,482.6M992.7,488.0L992.6,515.6" stroke="#1c1a08" stroke-width="0.7" fill="none"/>
<polygon points="994.2,498.2 1010.6,497.3 1009.1,493.1 993.9,493.9" fill="#ece264" stroke="#ece264" stroke-width=".5"/>
<path d="M994.2,498.2L1010.6,497.3M1009.1,493.1L993.9,493.9" stroke="#1c1a08" stroke-width="0.7" fill="none"/>
<polygon points="1013.5,475.9 1019.6,486.2 1028.7,484.8 1022.3,474.6" fill="#ece264" stroke="#ece264" stroke-width=".5"/>
<path d="M1013.5,475.9L1019.6,486.2M1028.7,484.8L1022.3,474.6M1019.6,486.2L1028.7,484.8" stroke="#1c1a08" stroke-width="0.7" fill="none"/>
<polygon points="977.6,497.9 994.2,498.2 993.9,493.9 978.5,493.6" fill="#ece264" stroke="#ece264" stroke-width=".5"/>
<path d="M977.6,497.9L994.2,498.2M993.9,493.9L978.5,493.6" stroke="#1c1a08" stroke-width="0.7" fill="none"/>
<polygon points="994.1,507.3 1010.5,506.4 1010.6,497.3 994.2,498.2" fill="#ddd050" stroke="#ddd050" stroke-width=".5"/>
<path d="M994.1,507.3L1010.5,506.4M1010.6,497.3L994.2,498.2" stroke="#1c1a08" stroke-width="0.7" fill="none"/>
<polygon points="993.0,477.2 992.7,488.0 992.7,495.2 993.0,484.3" fill="#c3b02d" stroke="#c3b02d" stroke-width=".5"/>
<path d="M993.0,477.2L992.7,488.0M992.7,495.2L993.0,484.3" stroke="#1c1a08" stroke-width="0.7" fill="none"/>
<polygon points="977.6,507.0 994.1,507.3 994.2,498.2 977.6,497.9" fill="#ddd050" stroke="#ddd050" stroke-width=".5"/>
<path d="M977.6,507.0L994.1,507.3M994.2,498.2L977.6,497.9" stroke="#1c1a08" stroke-width="0.7" fill="none"/>
<polygon points="983.3,515.5 992.6,515.6 992.7,488.0 983.1,487.9" fill="#ddd050" stroke="#ddd050" stroke-width=".5"/>
<path d="M992.6,515.6L992.7,488.0M983.1,487.9L983.3,515.5" stroke="#1c1a08" stroke-width="0.7" fill="none"/>
<polygon points="983.6,477.1 983.1,487.9 992.7,488.0 993.0,477.2" fill="#ece264" stroke="#ece264" stroke-width=".5"/>
<path d="M983.6,477.1L983.1,487.9M992.7,488.0L993.0,477.2M983.1,487.9L992.7,488.0" stroke="#1c1a08" stroke-width="0.7" fill="none"/>
<polygon points="1022.6,420.2 1020.3,418.9 1017.7,417.6 1015.0,416.5 1012.0,415.5 1008.8,414.6 1005.5,413.9 1002.0,413.3 998.5,412.8 994.9,412.6 991.2,412.4 987.5,412.5 983.9,412.6 980.3,413.0 976.7,413.5 973.3,414.1 970.0,414.9 966.9,415.8 964.0,416.8 961.3,418.0 958.9,419.3 956.7,420.7 954.8,422.2 953.2,423.7 952.0,425.4 951.1,427.1 950.6,428.8 950.4,430.6 950.7,432.3 951.3,434.1 952.3,435.8 953.7,437.5 955.5,439.1 957.6,440.7 960.1,442.1 962.8,443.4 965.9,444.6 969.3,445.7 972.8,446.6 976.6,447.3 980.5,447.8 984.5,448.2 988.6,448.3 992.7,448.3 996.8,448.1 1000.8,447.7 1004.6,447.1 1008.3,446.3 1011.8,445.4 1015.1,444.3 1018.1,443.0 1020.8,441.7 1023.1,440.2 1025.1,438.6 1026.8,437.0 1028.0,435.3 1028.9,433.5 1029.4,431.8 1029.5,430.0 1029.2,428.2 1028.6,426.5 1027.6,424.8 1026.2,423.2 1024.5,421.7" fill="#ece264" stroke="#ece264" stroke-width=".5"/>
<path d="M1022.6,420.2L1020.3,418.9M1020.3,418.9L1017.7,417.6M1017.7,417.6L1015.0,416.5M1015.0,416.5L1012.0,415.5M1012.0,415.5L1008.8,414.6M1008.8,414.6L1005.5,413.9M1005.5,413.9L1002.0,413.3M1002.0,413.3L998.5,412.8M998.5,412.8L994.9,412.6M994.9,412.6L991.2,412.4M991.2,412.4L987.5,412.5M987.5,412.5L983.9,412.6M983.9,412.6L980.3,413.0M980.3,413.0L976.7,413.5M976.7,413.5L973.3,414.1M973.3,414.1L970.0,414.9M970.0,414.9L966.9,415.8M966.9,415.8L964.0,416.8M964.0,416.8L961.3,418.0M961.3,418.0L958.9,419.3M958.9,419.3L956.7,420.7M956.7,420.7L954.8,422.2M954.8,422.2L953.2,423.7M953.2,423.7L952.0,425.4M952.0,425.4L951.1,427.1M951.1,427.1L950.6,428.8M950.6,428.8L950.4,430.6M950.4,430.6L950.7,432.3M950.7,432.3L951.3,434.1M951.3,434.1L952.3,435.8M952.3,435.8L953.7,437.5M953.7,437.5L955.5,439.1M955.5,439.1L957.6,440.7M957.6,440.7L960.1,442.1M960.1,442.1L962.8,443.4M962.8,443.4L965.9,444.6M965.9,444.6L969.3,445.7M969.3,445.7L972.8,446.6M972.8,446.6L976.6,447.3M976.6,447.3L980.5,447.8M980.5,447.8L984.5,448.2M984.5,448.2L988.6,448.3M988.6,448.3L992.7,448.3M992.7,448.3L996.8,448.1M996.8,448.1L1000.8,447.7M1000.8,447.7L1004.6,447.1M1004.6,447.1L1008.3,446.3M1008.3,446.3L1011.8,445.4M1011.8,445.4L1015.1,444.3M1015.1,444.3L1018.1,443.0M1018.1,443.0L1020.8,441.7M1020.8,441.7L1023.1,440.2M1023.1,440.2L1025.1,438.6M1025.1,438.6L1026.8,437.0M1026.8,437.0L1028.0,435.3M1028.0,435.3L1028.9,433.5M1028.9,433.5L1029.4,431.8M1029.4,431.8L1029.5,430.0M1029.5,430.0L1029.2,428.2M1029.2,428.2L1028.6,426.5M1028.6,426.5L1027.6,424.8M1027.6,424.8L1026.2,423.2M1026.2,423.2L1024.5,421.7M1024.5,421.7L1022.6,420.2" stroke="#1c1a08" stroke-width="0.7" fill="none"/>
</g>
</svg>
<div class="abs fab" style="left:1512px;top:180px;background:#fff6cf"><svg class="abs" style="left:12px;top:13px" width="16" height="14" viewBox="0 0 16 14" fill="none" stroke="#4a4538" stroke-width="1.200"><rect x=".8" y="1" width="14.400" height="12" rx="1"/><path d="M3.500 10.500 6 7.500l1.500 2 2-3 3 4z" fill="#4a4538" stroke="none"/></svg></div>
<div class="abs fab" style="left:1512px;top:229px;background:#fff"><svg class="abs" style="left:15px;top:15px" width="10" height="10" viewBox="0 0 12 12" fill="none" stroke="#4a4538" stroke-width="1.700"><path d="M1 4V1h3M8 1h3v3M11 8v3H8M4 11H1V8"/></svg></div>
<div class="abs tog"><div class="abs" style="left:0;top:0;width:90px;height:28px;text-align:center;line-height:30.500px;padding-left:1.500px;border-right:1px solid #e2e2e2">Image</div><div class="abs" style="left:90px;top:0;width:74px;height:28px;background:#efefef;text-align:center;line-height:30.500px">3D</div></div>
<div class="abs ins"><svg class="abs" style="left:35.5px;top:17.3px" width="14" height="14" viewBox="0 0 14 14" stroke="#fff" stroke-width="1.400" fill="none"><path d="M7 .500v13M.500 7h13"/></svg><span class="abs" style="left:60.7px;top:0;font-size:11px;transform:scaleX(.908);transform-origin:0 50%">Vložit do BIM modelu</span></div>
</body>
</html>
